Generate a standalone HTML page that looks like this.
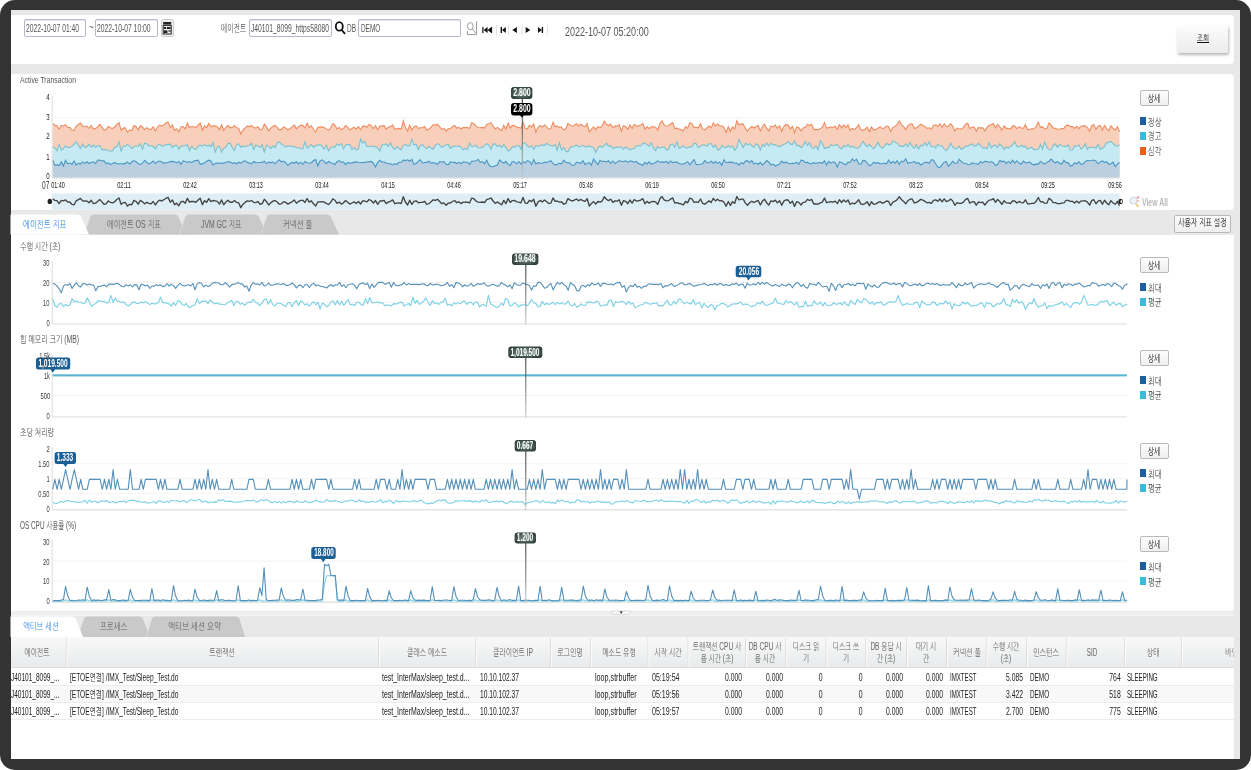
<!DOCTYPE html>
<html lang="ko"><head><meta charset="utf-8"><title>Agent Trend</title>
<style>
html,body{margin:0;padding:0;background:#fff;}
body{width:1251px;height:770px;overflow:hidden;position:relative;font-family:"Liberation Sans","NanumGothic","Noto Sans CJK KR",sans-serif;font-size:10px;color:#444;}
.t{position:absolute;white-space:nowrap;line-height:1;display:block;}
svg{position:absolute;left:0;top:0;overflow:visible;}
</style></head>
<body>
<div style="position:absolute;left:0;top:0;width:1251px;height:770px;background:#333;border-radius:15px;"></div>
<div id="app" style="position:absolute;left:0;top:0;width:1251px;height:770px;filter:blur(0.45px);">
<div style="position:absolute;left:10.5px;top:10px;width:1229.9px;height:749.3px;background:#e8e8e8;"></div>
<div style="position:absolute;left:10.5px;top:15px;width:1223.5px;height:49px;background:#fff;border-radius:0 4px 4px 0;"></div>
<div style="position:absolute;left:10.5px;top:73.5px;width:1223.5px;height:136.2px;background:#fff;border-radius:0 4px 4px 0;"></div>
<div style="position:absolute;left:10.5px;top:234.5px;width:1223.5px;height:376.5px;background:#fff;border-radius:0 0 4px 0;"></div>
<div style="position:absolute;left:10.5px;top:611px;width:1223.5px;height:4px;background:#eeeeee;"></div>
<div style="position:absolute;left:10.5px;top:615px;width:1223.5px;height:1px;background:#f4f4f4;"></div>
<div style="position:absolute;left:10.5px;top:637px;width:1223.5px;height:122.3px;background:#fff;"></div>
<div style="position:absolute;left:23.5px;top:19px;width:62.5px;height:18px;background:#fff;border:1px solid #b5b8c8;border-radius:2px;box-sizing:border-box;box-shadow:inset 0 1px 1px #e4e6ee;"></div>
<div style="position:absolute;left:95px;top:19px;width:63px;height:18px;background:#fff;border:1px solid #b5b8c8;border-radius:2px;box-sizing:border-box;box-shadow:inset 0 1px 1px #e4e6ee;"></div>
<div style="position:absolute;left:249.4px;top:19px;width:83px;height:18px;background:#fff;border:1px solid #b5b8c8;border-radius:2px;box-sizing:border-box;box-shadow:inset 0 1px 1px #e4e6ee;"></div>
<div style="position:absolute;left:358px;top:19px;width:103px;height:18px;background:#fff;border:1px solid #b5b8c8;border-radius:2px;box-sizing:border-box;box-shadow:inset 0 1px 1px #e4e6ee;"></div>
<div style="position:absolute;left:161px;top:19px;width:12.5px;height:18px;background:#ececec;border:1px solid #cfcfcf;border-radius:2px;box-sizing:border-box;"></div>
<svg width="1251" height="770" viewBox="0 0 1251 770">
<g fill="#222"><rect x="163.2" y="22" width="8" height="2.6"/><rect x="163.2" y="25.4" width="8" height="8.6" fill="none" stroke="#222" stroke-width="1"/>
<rect x="164" y="27" width="2.2" height="2"/><rect x="167" y="27" width="3.6" height="2"/><rect x="164" y="30.4" width="3.4" height="2.6"/><rect x="168.4" y="30.4" width="2.4" height="1.2"/></g>
<g fill="none" stroke="#111" stroke-width="1.8" stroke-linecap="round"><ellipse cx="339.3" cy="26.4" rx="3.5" ry="4.3"/><path d="M341.8 30 L344.6 33.4"/></g>
<g fill="none" stroke="#999" stroke-width="1"><path d="M476.6 21.2 V34.6 H467.4 V31"/><ellipse cx="470.3" cy="26.2" rx="2.9" ry="3.6"/><path d="M472.4 29 L475.8 33.2"/></g>
<g fill="#111">
<rect x="482.3" y="27" width="1.2" height="6"/><path d="M487.6 27 V33 L483.6 30 Z"/><path d="M491.4 27 V33 L487.6 30 Z"/><rect x="491" y="27" width="1.1" height="6"/>
<rect x="500.6" y="27" width="1.4" height="6"/><path d="M505.8 27 V33 L502 30 Z"/>
<path d="M516.9 27 V33 L512.3 30 Z"/>
<path d="M525.7 27 V33 L530.3 30 Z"/>
<path d="M538 27 V33 L541.8 30 Z"/><rect x="541.7" y="27" width="1.4" height="6"/>
</g>
<g stroke="#e2e2e2" stroke-width="1"><path d="M496.5 25 V35 M508.5 25 V35 M522 25 V35 M547.4 25 V35"/></g>
</svg>
<div style="position:absolute;left:1176.8px;top:25px;width:51.6px;height:28.3px;background:linear-gradient(#fcfcfc,#ececec);border-radius:2px;box-shadow:1px 2px 3px rgba(0,0,0,.28);"></div>
<svg width="1251" height="770" viewBox="0 0 1251 770">
<path d="M52.7 117.9 H1119.5 M52.7 137.8 H1119.5 M52.7 157.7 H1119.5" stroke="#f3f3f3" stroke-width="1" fill="none"/>
<path d="M52.7 123.5 L54.8 125.4 L57.0 125.7 L59.1 129.2 L61.3 125.5 L63.4 126.0 L65.5 124.8 L67.7 127.5 L69.8 127.4 L71.9 130.0 L74.1 130.6 L76.2 125.9 L78.4 124.5 L80.5 123.0 L82.6 126.1 L84.8 126.2 L86.9 126.3 L89.0 128.3 L91.2 125.4 L93.3 129.1 L95.5 128.6 L97.6 126.8 L99.7 124.3 L101.9 127.2 L104.0 130.1 L106.1 129.6 L108.3 126.2 L110.4 127.7 L112.6 128.4 L114.7 127.0 L116.8 124.4 L119.0 122.6 L121.1 130.1 L123.2 128.1 L125.4 127.9 L127.5 132.2 L129.7 130.1 L131.8 130.5 L133.9 125.5 L136.1 126.7 L138.2 129.9 L140.4 125.5 L142.5 127.0 L144.6 129.6 L146.8 127.7 L148.9 128.9 L151.0 129.6 L153.2 126.7 L155.3 130.9 L157.5 127.0 L159.6 125.2 L161.7 126.2 L163.9 124.6 L166.0 123.0 L168.1 121.9 L170.3 127.6 L172.4 124.8 L174.6 130.5 L176.7 128.7 L178.8 131.8 L181.0 126.9 L183.1 126.5 L185.2 128.9 L187.4 123.1 L189.5 127.6 L191.7 126.5 L193.8 126.7 L195.9 127.7 L198.1 125.0 L200.2 123.0 L202.4 130.5 L204.5 125.7 L206.6 127.8 L208.8 123.4 L210.9 126.8 L213.0 125.5 L215.2 126.1 L217.3 126.7 L219.5 129.8 L221.6 124.8 L223.7 130.5 L225.9 127.4 L228.0 125.4 L230.1 127.6 L232.3 127.6 L234.4 125.6 L236.6 127.8 L238.7 128.3 L240.8 134.1 L243.0 129.9 L245.1 127.8 L247.2 126.1 L249.4 126.6 L251.5 125.5 L253.7 127.6 L255.8 128.0 L257.9 126.7 L260.1 130.1 L262.2 129.2 L264.3 124.1 L266.5 126.9 L268.6 130.9 L270.8 128.2 L272.9 126.3 L275.0 125.5 L277.2 127.3 L279.3 129.9 L281.5 129.4 L283.6 126.9 L285.7 127.9 L287.9 129.8 L290.0 128.5 L292.1 127.1 L294.3 124.9 L296.4 128.8 L298.6 126.6 L300.7 125.4 L302.8 125.3 L305.0 128.0 L307.1 123.2 L309.2 127.5 L311.4 125.9 L313.5 129.5 L315.7 132.0 L317.8 127.3 L319.9 127.1 L322.1 126.9 L324.2 127.5 L326.3 128.9 L328.5 130.3 L330.6 128.0 L332.8 123.6 L334.9 125.2 L337.0 128.9 L339.2 127.4 L341.3 129.8 L343.5 128.3 L345.6 125.6 L347.7 127.5 L349.9 129.9 L352.0 128.5 L354.1 127.2 L356.3 129.1 L358.4 126.6 L360.6 129.7 L362.7 126.0 L364.8 126.1 L367.0 127.2 L369.1 124.4 L371.2 125.6 L373.4 128.7 L375.5 125.5 L377.7 130.0 L379.8 126.1 L381.9 126.1 L384.1 125.4 L386.2 129.2 L388.3 127.3 L390.5 126.6 L392.6 124.9 L394.8 129.3 L396.9 128.7 L399.0 128.4 L401.2 129.1 L403.3 121.0 L405.4 127.3 L407.6 130.9 L409.7 125.2 L411.9 130.1 L414.0 126.7 L416.1 125.9 L418.3 128.3 L420.4 127.7 L422.6 127.8 L424.7 126.5 L426.8 130.3 L429.0 129.1 L431.1 127.1 L433.2 124.7 L435.4 125.3 L437.5 124.1 L439.7 126.8 L441.8 129.4 L443.9 128.4 L446.1 131.1 L448.2 128.8 L450.3 128.6 L452.5 126.7 L454.6 125.5 L456.8 128.2 L458.9 127.1 L461.0 129.2 L463.2 127.4 L465.3 127.6 L467.4 127.6 L469.6 128.4 L471.7 122.8 L473.9 123.5 L476.0 126.2 L478.1 127.5 L480.3 127.8 L482.4 127.4 L484.6 128.0 L486.7 124.5 L488.8 123.7 L491.0 122.6 L493.1 126.2 L495.2 128.9 L497.4 127.4 L499.5 129.0 L501.7 130.6 L503.8 125.4 L505.9 129.4 L508.1 123.1 L510.2 127.9 L512.3 125.6 L514.5 125.4 L516.6 127.1 L518.8 127.6 L520.9 128.3 L523.0 121.9 L525.2 128.6 L527.3 129.0 L529.4 125.4 L531.6 126.9 L533.7 124.0 L535.9 132.3 L538.0 127.4 L540.1 125.4 L542.3 127.3 L544.4 124.9 L546.5 126.8 L548.7 129.0 L550.8 128.8 L553.0 122.5 L555.1 126.6 L557.2 126.1 L559.4 127.4 L561.5 127.0 L563.7 129.9 L565.8 129.0 L567.9 123.3 L570.1 125.1 L572.2 126.2 L574.3 125.2 L576.5 123.7 L578.6 125.9 L580.8 124.2 L582.9 125.8 L585.0 126.7 L587.2 123.5 L589.3 132.1 L591.4 129.3 L593.6 126.8 L595.7 129.7 L597.9 126.7 L600.0 127.6 L602.1 126.3 L604.3 121.1 L606.4 124.1 L608.5 125.7 L610.7 124.0 L612.8 127.8 L615.0 125.9 L617.1 126.4 L619.2 124.6 L621.4 131.2 L623.5 125.7 L625.7 126.5 L627.8 129.4 L629.9 125.0 L632.1 128.6 L634.2 124.4 L636.3 126.1 L638.5 126.0 L640.6 125.1 L642.8 123.4 L644.9 129.3 L647.0 126.6 L649.2 128.7 L651.3 126.9 L653.4 126.7 L655.6 127.2 L657.7 130.2 L659.9 123.5 L662.0 120.8 L664.1 124.9 L666.3 126.0 L668.4 125.8 L670.5 124.0 L672.7 122.5 L674.8 128.6 L677.0 128.1 L679.1 129.1 L681.2 129.5 L683.4 130.9 L685.5 126.6 L687.6 128.4 L689.8 122.7 L691.9 123.6 L694.1 127.6 L696.2 127.2 L698.3 127.8 L700.5 123.8 L702.6 128.9 L704.8 129.9 L706.9 128.0 L709.0 126.0 L711.2 127.9 L713.3 122.9 L715.4 126.0 L717.6 124.1 L719.7 126.0 L721.9 125.8 L724.0 127.7 L726.1 132.5 L728.3 126.8 L730.4 131.5 L732.5 127.0 L734.7 129.0 L736.8 120.8 L739.0 125.0 L741.1 123.9 L743.2 124.1 L745.4 128.6 L747.5 131.2 L749.6 128.3 L751.8 126.5 L753.9 128.0 L756.1 126.6 L758.2 125.6 L760.3 130.9 L762.5 126.3 L764.6 124.1 L766.8 128.4 L768.9 130.9 L771.0 125.9 L773.2 126.9 L775.3 125.1 L777.4 128.3 L779.6 125.7 L781.7 131.2 L783.9 126.3 L786.0 124.7 L788.1 125.0 L790.3 128.9 L792.4 126.3 L794.5 132.6 L796.7 127.0 L798.8 127.8 L801.0 130.9 L803.1 127.7 L805.2 127.6 L807.4 124.3 L809.5 125.5 L811.6 124.3 L813.8 129.7 L815.9 129.4 L818.1 129.9 L820.2 128.4 L822.3 127.4 L824.5 122.6 L826.6 128.2 L828.7 127.6 L830.9 127.0 L833.0 127.5 L835.2 126.2 L837.3 129.3 L839.4 124.6 L841.6 127.9 L843.7 124.8 L845.9 127.3 L848.0 124.8 L850.1 130.3 L852.3 128.5 L854.4 129.6 L856.5 127.7 L858.7 124.6 L860.8 129.6 L863.0 130.3 L865.1 129.2 L867.2 127.1 L869.4 131.8 L871.5 126.9 L873.6 130.1 L875.8 129.6 L877.9 128.2 L880.1 126.7 L882.2 128.7 L884.3 127.9 L886.5 126.1 L888.6 126.8 L890.7 131.5 L892.9 127.5 L895.0 126.4 L897.2 124.5 L899.3 121.1 L901.4 124.4 L903.6 126.6 L905.7 129.5 L907.9 125.9 L910.0 124.1 L912.1 123.8 L914.3 128.4 L916.4 127.9 L918.5 126.3 L920.7 124.2 L922.8 125.2 L925.0 126.6 L927.1 128.3 L929.2 127.8 L931.4 129.0 L933.5 125.4 L935.6 124.8 L937.8 126.5 L939.9 123.8 L942.1 127.2 L944.2 123.7 L946.3 126.7 L948.5 126.0 L950.6 123.9 L952.7 126.1 L954.9 131.2 L957.0 128.1 L959.2 129.0 L961.3 129.0 L963.4 127.6 L965.6 124.1 L967.7 123.2 L969.8 128.7 L972.0 127.1 L974.1 127.0 L976.3 131.1 L978.4 127.4 L980.5 128.1 L982.7 127.6 L984.8 130.9 L987.0 127.7 L989.1 125.1 L991.2 124.8 L993.4 123.5 L995.5 127.9 L997.6 124.3 L999.8 126.7 L1001.9 130.2 L1004.1 125.7 L1006.2 128.4 L1008.3 128.3 L1010.5 129.1 L1012.6 125.9 L1014.7 126.1 L1016.9 128.7 L1019.0 126.7 L1021.2 128.0 L1023.3 128.3 L1025.4 124.8 L1027.6 129.6 L1029.7 129.5 L1031.8 128.9 L1034.0 128.8 L1036.1 126.6 L1038.3 122.0 L1040.4 127.1 L1042.5 126.9 L1044.7 128.8 L1046.8 128.8 L1049.0 122.9 L1051.1 124.9 L1053.2 128.1 L1055.4 128.2 L1057.5 129.2 L1059.6 129.3 L1061.8 128.6 L1063.9 128.4 L1066.1 125.4 L1068.2 125.4 L1070.3 126.5 L1072.5 126.6 L1074.6 128.5 L1076.7 126.3 L1078.9 128.6 L1081.0 126.2 L1083.2 125.9 L1085.3 125.8 L1087.4 127.5 L1089.6 131.0 L1091.7 125.7 L1093.8 124.6 L1096.0 129.4 L1098.1 126.2 L1100.3 125.4 L1102.4 130.1 L1104.5 125.3 L1106.7 128.6 L1108.8 130.7 L1110.9 125.7 L1113.1 128.5 L1115.2 130.0 L1117.4 126.6 L1119.5 131.8 L1119.5 177.6 L52.7 177.6 Z" fill="#f8cfbb"/>
<path d="M52.7 147.0 L54.8 147.5 L57.0 150.8 L59.1 144.3 L61.3 150.1 L63.4 148.7 L65.5 145.7 L67.7 147.5 L69.8 147.4 L71.9 146.4 L74.1 144.5 L76.2 141.5 L78.4 145.4 L80.5 148.4 L82.6 143.9 L84.8 147.3 L86.9 146.7 L89.0 144.3 L91.2 147.2 L93.3 145.1 L95.5 147.2 L97.6 145.7 L99.7 145.6 L101.9 149.7 L104.0 149.6 L106.1 149.8 L108.3 150.6 L110.4 151.1 L112.6 150.8 L114.7 147.1 L116.8 146.9 L119.0 141.9 L121.1 151.2 L123.2 146.3 L125.4 146.1 L127.5 144.4 L129.7 146.1 L131.8 148.6 L133.9 146.8 L136.1 145.8 L138.2 146.4 L140.4 143.8 L142.5 149.1 L144.6 143.1 L146.8 143.8 L148.9 146.0 L151.0 145.5 L153.2 146.3 L155.3 149.1 L157.5 145.1 L159.6 144.2 L161.7 145.9 L163.9 145.8 L166.0 144.6 L168.1 144.7 L170.3 144.0 L172.4 147.7 L174.6 145.6 L176.7 145.3 L178.8 149.2 L181.0 146.3 L183.1 145.9 L185.2 145.6 L187.4 144.7 L189.5 150.6 L191.7 146.2 L193.8 148.4 L195.9 149.6 L198.1 146.4 L200.2 145.0 L202.4 146.4 L204.5 144.4 L206.6 146.2 L208.8 145.2 L210.9 146.8 L213.0 142.5 L215.2 152.1 L217.3 147.1 L219.5 146.2 L221.6 152.2 L223.7 148.3 L225.9 147.2 L228.0 143.5 L230.1 143.1 L232.3 147.7 L234.4 150.5 L236.6 144.8 L238.7 143.7 L240.8 147.3 L243.0 146.2 L245.1 146.7 L247.2 145.7 L249.4 145.5 L251.5 143.3 L253.7 149.5 L255.8 145.0 L257.9 146.0 L260.1 147.6 L262.2 144.8 L264.3 152.1 L266.5 145.3 L268.6 146.1 L270.8 148.6 L272.9 145.8 L275.0 147.8 L277.2 142.4 L279.3 141.9 L281.5 144.4 L283.6 145.4 L285.7 147.1 L287.9 145.5 L290.0 146.1 L292.1 146.2 L294.3 146.7 L296.4 147.6 L298.6 147.8 L300.7 148.5 L302.8 148.9 L305.0 141.7 L307.1 148.1 L309.2 146.5 L311.4 144.6 L313.5 147.3 L315.7 145.6 L317.8 145.0 L319.9 144.6 L322.1 146.2 L324.2 149.2 L326.3 145.1 L328.5 150.9 L330.6 147.7 L332.8 146.7 L334.9 147.1 L337.0 143.9 L339.2 145.3 L341.3 143.6 L343.5 149.0 L345.6 145.0 L347.7 144.5 L349.9 144.6 L352.0 149.6 L354.1 147.4 L356.3 149.9 L358.4 149.4 L360.6 138.9 L362.7 143.1 L364.8 141.4 L367.0 146.7 L369.1 146.3 L371.2 146.3 L373.4 146.4 L375.5 146.8 L377.7 147.9 L379.8 151.0 L381.9 145.0 L384.1 144.5 L386.2 143.9 L388.3 146.6 L390.5 142.7 L392.6 147.8 L394.8 149.5 L396.9 146.5 L399.0 148.5 L401.2 149.8 L403.3 145.6 L405.4 144.1 L407.6 146.2 L409.7 145.8 L411.9 139.4 L414.0 145.1 L416.1 144.1 L418.3 149.6 L420.4 145.3 L422.6 144.9 L424.7 147.4 L426.8 148.6 L429.0 146.3 L431.1 148.4 L433.2 149.3 L435.4 145.1 L437.5 143.6 L439.7 145.1 L441.8 147.3 L443.9 146.0 L446.1 145.1 L448.2 144.2 L450.3 148.6 L452.5 146.6 L454.6 146.0 L456.8 146.2 L458.9 146.4 L461.0 146.9 L463.2 149.7 L465.3 148.4 L467.4 149.4 L469.6 143.0 L471.7 146.5 L473.9 146.3 L476.0 145.3 L478.1 147.8 L480.3 148.0 L482.4 147.4 L484.6 145.7 L486.7 143.6 L488.8 145.1 L491.0 149.3 L493.1 144.1 L495.2 143.8 L497.4 146.8 L499.5 145.1 L501.7 147.6 L503.8 144.3 L505.9 147.7 L508.1 151.0 L510.2 150.1 L512.3 146.7 L514.5 147.5 L516.6 145.8 L518.8 145.5 L520.9 149.1 L523.0 142.8 L525.2 143.2 L527.3 145.5 L529.4 147.6 L531.6 145.7 L533.7 149.4 L535.9 145.6 L538.0 146.5 L540.1 145.4 L542.3 144.9 L544.4 145.4 L546.5 143.5 L548.7 144.7 L550.8 145.5 L553.0 146.1 L555.1 144.6 L557.2 150.2 L559.4 142.8 L561.5 150.2 L563.7 147.5 L565.8 151.0 L567.9 152.1 L570.1 147.5 L572.2 146.8 L574.3 146.2 L576.5 145.0 L578.6 147.0 L580.8 146.3 L582.9 145.3 L585.0 147.0 L587.2 146.6 L589.3 145.9 L591.4 147.0 L593.6 147.5 L595.7 152.6 L597.9 147.9 L600.0 145.9 L602.1 147.3 L604.3 145.5 L606.4 143.1 L608.5 146.4 L610.7 145.7 L612.8 148.4 L615.0 147.9 L617.1 146.7 L619.2 147.7 L621.4 146.6 L623.5 149.1 L625.7 146.9 L627.8 148.5 L629.9 149.9 L632.1 148.8 L634.2 148.5 L636.3 145.8 L638.5 145.7 L640.6 146.0 L642.8 143.6 L644.9 143.1 L647.0 144.7 L649.2 146.3 L651.3 142.8 L653.4 147.9 L655.6 150.7 L657.7 146.4 L659.9 148.1 L662.0 147.3 L664.1 146.9 L666.3 149.9 L668.4 149.7 L670.5 144.5 L672.7 144.0 L674.8 147.3 L677.0 141.8 L679.1 148.3 L681.2 147.3 L683.4 145.7 L685.5 147.9 L687.6 147.6 L689.8 146.8 L691.9 147.0 L694.1 143.2 L696.2 143.7 L698.3 147.4 L700.5 146.2 L702.6 144.8 L704.8 145.1 L706.9 146.2 L709.0 143.9 L711.2 143.5 L713.3 147.4 L715.4 144.8 L717.6 149.9 L719.7 149.4 L721.9 145.5 L724.0 147.5 L726.1 147.6 L728.3 145.4 L730.4 147.6 L732.5 146.1 L734.7 150.4 L736.8 147.7 L739.0 139.5 L741.1 143.7 L743.2 147.5 L745.4 143.2 L747.5 144.9 L749.6 143.6 L751.8 145.8 L753.9 147.5 L756.1 143.7 L758.2 145.2 L760.3 150.0 L762.5 144.2 L764.6 146.3 L766.8 143.1 L768.9 145.8 L771.0 143.2 L773.2 144.9 L775.3 144.6 L777.4 146.1 L779.6 146.6 L781.7 145.4 L783.9 144.2 L786.0 143.6 L788.1 141.6 L790.3 143.9 L792.4 144.6 L794.5 140.9 L796.7 145.6 L798.8 145.4 L801.0 147.7 L803.1 145.6 L805.2 141.7 L807.4 145.4 L809.5 142.9 L811.6 147.7 L813.8 148.3 L815.9 145.9 L818.1 149.8 L820.2 140.7 L822.3 143.4 L824.5 148.5 L826.6 147.5 L828.7 147.6 L830.9 144.7 L833.0 145.7 L835.2 145.0 L837.3 144.6 L839.4 147.4 L841.6 148.9 L843.7 145.4 L845.9 147.0 L848.0 144.5 L850.1 147.4 L852.3 146.2 L854.4 147.4 L856.5 148.2 L858.7 147.8 L860.8 145.0 L863.0 141.5 L865.1 144.3 L867.2 146.9 L869.4 144.3 L871.5 146.7 L873.6 149.0 L875.8 145.9 L877.9 142.4 L880.1 146.3 L882.2 148.3 L884.3 146.3 L886.5 143.3 L888.6 144.8 L890.7 144.3 L892.9 140.9 L895.0 142.2 L897.2 143.3 L899.3 146.2 L901.4 145.9 L903.6 146.6 L905.7 143.9 L907.9 146.8 L910.0 142.5 L912.1 146.2 L914.3 148.3 L916.4 144.5 L918.5 149.1 L920.7 145.2 L922.8 146.1 L925.0 142.7 L927.1 145.8 L929.2 141.8 L931.4 146.9 L933.5 146.1 L935.6 148.2 L937.8 144.2 L939.9 146.2 L942.1 145.8 L944.2 149.0 L946.3 150.8 L948.5 147.9 L950.6 143.1 L952.7 147.0 L954.9 148.7 L957.0 148.2 L959.2 146.2 L961.3 149.5 L963.4 148.0 L965.6 146.0 L967.7 146.5 L969.8 145.0 L972.0 143.9 L974.1 145.9 L976.3 145.7 L978.4 143.3 L980.5 145.7 L982.7 147.9 L984.8 147.7 L987.0 148.9 L989.1 142.8 L991.2 147.7 L993.4 145.7 L995.5 145.1 L997.6 147.8 L999.8 143.7 L1001.9 146.4 L1004.1 149.7 L1006.2 146.8 L1008.3 148.3 L1010.5 146.3 L1012.6 145.1 L1014.7 141.5 L1016.9 146.6 L1019.0 146.9 L1021.2 145.4 L1023.3 146.6 L1025.4 146.4 L1027.6 149.2 L1029.7 147.9 L1031.8 147.4 L1034.0 149.6 L1036.1 149.5 L1038.3 149.2 L1040.4 144.5 L1042.5 149.2 L1044.7 142.3 L1046.8 146.9 L1049.0 149.6 L1051.1 150.0 L1053.2 145.7 L1055.4 143.9 L1057.5 147.4 L1059.6 144.5 L1061.8 145.7 L1063.9 146.4 L1066.1 146.6 L1068.2 144.8 L1070.3 150.2 L1072.5 150.0 L1074.6 145.9 L1076.7 146.2 L1078.9 144.9 L1081.0 148.9 L1083.2 147.6 L1085.3 143.9 L1087.4 149.5 L1089.6 147.0 L1091.7 147.5 L1093.8 147.1 L1096.0 148.3 L1098.1 144.2 L1100.3 149.3 L1102.4 148.3 L1104.5 146.6 L1106.7 142.6 L1108.8 142.1 L1110.9 141.4 L1113.1 143.7 L1115.2 145.5 L1117.4 146.1 L1119.5 144.8 L1119.5 177.6 L52.7 177.6 Z" fill="#c6eaf3"/>
<path d="M52.7 160.0 L54.8 165.1 L57.0 164.9 L59.1 165.5 L61.3 161.9 L63.4 166.1 L65.5 160.2 L67.7 163.9 L69.8 163.0 L71.9 164.2 L74.1 161.0 L76.2 165.1 L78.4 163.1 L80.5 164.1 L82.6 161.9 L84.8 163.6 L86.9 161.8 L89.0 163.5 L91.2 162.4 L93.3 161.8 L95.5 163.5 L97.6 160.2 L99.7 160.1 L101.9 160.9 L104.0 160.8 L106.1 163.5 L108.3 162.9 L110.4 164.6 L112.6 163.5 L114.7 162.5 L116.8 164.0 L119.0 163.7 L121.1 163.8 L123.2 163.9 L125.4 163.4 L127.5 161.9 L129.7 164.1 L131.8 161.8 L133.9 160.6 L136.1 161.7 L138.2 163.7 L140.4 164.5 L142.5 163.2 L144.6 160.3 L146.8 162.5 L148.9 163.9 L151.0 163.0 L153.2 161.1 L155.3 163.6 L157.5 161.8 L159.6 161.1 L161.7 162.1 L163.9 163.3 L166.0 162.7 L168.1 162.2 L170.3 161.6 L172.4 161.4 L174.6 161.7 L176.7 162.9 L178.8 161.4 L181.0 164.2 L183.1 160.8 L185.2 161.4 L187.4 162.5 L189.5 161.6 L191.7 162.7 L193.8 161.1 L195.9 160.6 L198.1 160.1 L200.2 164.3 L202.4 163.9 L204.5 162.7 L206.6 161.4 L208.8 160.2 L210.9 160.9 L213.0 165.0 L215.2 163.5 L217.3 163.1 L219.5 163.3 L221.6 163.1 L223.7 163.1 L225.9 162.5 L228.0 161.6 L230.1 162.1 L232.3 163.4 L234.4 162.7 L236.6 163.8 L238.7 162.2 L240.8 163.2 L243.0 161.6 L245.1 160.8 L247.2 162.4 L249.4 163.0 L251.5 163.8 L253.7 161.5 L255.8 162.6 L257.9 162.8 L260.1 162.5 L262.2 162.4 L264.3 161.1 L266.5 163.6 L268.6 162.0 L270.8 162.8 L272.9 161.8 L275.0 163.8 L277.2 161.6 L279.3 159.8 L281.5 162.1 L283.6 161.1 L285.7 162.7 L287.9 165.5 L290.0 163.7 L292.1 162.2 L294.3 163.3 L296.4 161.8 L298.6 164.0 L300.7 162.2 L302.8 164.5 L305.0 161.5 L307.1 162.7 L309.2 163.2 L311.4 162.7 L313.5 160.5 L315.7 159.6 L317.8 165.9 L319.9 161.2 L322.1 159.9 L324.2 161.3 L326.3 163.6 L328.5 161.5 L330.6 162.7 L332.8 163.5 L334.9 164.6 L337.0 161.8 L339.2 160.6 L341.3 162.4 L343.5 161.8 L345.6 164.6 L347.7 162.6 L349.9 163.0 L352.0 163.1 L354.1 162.1 L356.3 161.9 L358.4 162.5 L360.6 162.7 L362.7 162.5 L364.8 162.4 L367.0 161.7 L369.1 161.9 L371.2 161.4 L373.4 163.2 L375.5 167.0 L377.7 162.4 L379.8 160.3 L381.9 162.0 L384.1 162.0 L386.2 163.0 L388.3 163.7 L390.5 163.7 L392.6 164.9 L394.8 163.6 L396.9 164.5 L399.0 162.3 L401.2 162.3 L403.3 160.1 L405.4 160.6 L407.6 159.8 L409.7 161.2 L411.9 159.4 L414.0 164.6 L416.1 163.5 L418.3 161.4 L420.4 159.9 L422.6 163.2 L424.7 162.5 L426.8 162.4 L429.0 161.2 L431.1 163.4 L433.2 162.9 L435.4 163.0 L437.5 164.5 L439.7 161.5 L441.8 162.0 L443.9 161.6 L446.1 164.3 L448.2 164.9 L450.3 161.9 L452.5 162.2 L454.6 162.4 L456.8 163.6 L458.9 162.2 L461.0 163.8 L463.2 161.8 L465.3 162.2 L467.4 162.2 L469.6 164.4 L471.7 161.4 L473.9 161.3 L476.0 160.7 L478.1 159.5 L480.3 162.4 L482.4 161.7 L484.6 163.8 L486.7 160.3 L488.8 165.0 L491.0 166.8 L493.1 166.6 L495.2 165.7 L497.4 165.3 L499.5 159.9 L501.7 161.7 L503.8 163.2 L505.9 161.4 L508.1 164.4 L510.2 165.5 L512.3 161.5 L514.5 161.9 L516.6 164.0 L518.8 161.5 L520.9 164.1 L523.0 161.6 L525.2 163.1 L527.3 160.6 L529.4 161.5 L531.6 164.6 L533.7 159.5 L535.9 164.0 L538.0 162.6 L540.1 163.2 L542.3 163.3 L544.4 162.3 L546.5 162.4 L548.7 161.7 L550.8 160.7 L553.0 163.7 L555.1 165.1 L557.2 164.2 L559.4 163.3 L561.5 163.8 L563.7 160.3 L565.8 162.2 L567.9 162.6 L570.1 163.2 L572.2 165.5 L574.3 165.0 L576.5 162.3 L578.6 162.5 L580.8 163.5 L582.9 160.5 L585.0 164.6 L587.2 163.4 L589.3 162.6 L591.4 165.2 L593.6 159.0 L595.7 161.9 L597.9 164.7 L600.0 160.3 L602.1 161.5 L604.3 161.2 L606.4 161.9 L608.5 160.8 L610.7 163.5 L612.8 161.0 L615.0 163.5 L617.1 162.1 L619.2 160.6 L621.4 161.5 L623.5 161.5 L625.7 160.9 L627.8 162.4 L629.9 161.1 L632.1 161.4 L634.2 162.2 L636.3 161.5 L638.5 163.6 L640.6 164.3 L642.8 165.5 L644.9 162.2 L647.0 163.9 L649.2 161.8 L651.3 164.1 L653.4 163.4 L655.6 162.4 L657.7 160.9 L659.9 162.2 L662.0 161.9 L664.1 162.4 L666.3 161.5 L668.4 163.4 L670.5 161.0 L672.7 162.7 L674.8 162.1 L677.0 162.0 L679.1 163.5 L681.2 164.3 L683.4 163.9 L685.5 163.1 L687.6 161.8 L689.8 164.9 L691.9 162.2 L694.1 159.6 L696.2 164.7 L698.3 164.5 L700.5 164.3 L702.6 163.8 L704.8 160.4 L706.9 162.7 L709.0 162.7 L711.2 161.1 L713.3 163.2 L715.4 161.5 L717.6 163.4 L719.7 162.1 L721.9 165.3 L724.0 159.9 L726.1 162.5 L728.3 162.4 L730.4 162.1 L732.5 162.4 L734.7 163.3 L736.8 163.0 L739.0 165.1 L741.1 162.4 L743.2 163.9 L745.4 161.1 L747.5 160.7 L749.6 162.7 L751.8 160.7 L753.9 164.0 L756.1 163.0 L758.2 164.2 L760.3 162.3 L762.5 165.1 L764.6 162.8 L766.8 160.5 L768.9 162.2 L771.0 165.1 L773.2 164.1 L775.3 166.1 L777.4 165.1 L779.6 164.1 L781.7 161.1 L783.9 163.0 L786.0 162.0 L788.1 163.3 L790.3 163.7 L792.4 163.3 L794.5 163.5 L796.7 162.2 L798.8 164.4 L801.0 160.1 L803.1 160.6 L805.2 162.7 L807.4 162.2 L809.5 163.8 L811.6 163.6 L813.8 162.7 L815.9 163.5 L818.1 162.8 L820.2 162.5 L822.3 163.3 L824.5 160.7 L826.6 165.1 L828.7 161.3 L830.9 163.1 L833.0 161.8 L835.2 162.5 L837.3 167.2 L839.4 161.9 L841.6 162.4 L843.7 163.8 L845.9 164.8 L848.0 162.2 L850.1 162.5 L852.3 158.9 L854.4 161.1 L856.5 159.2 L858.7 163.8 L860.8 164.2 L863.0 160.4 L865.1 160.8 L867.2 163.2 L869.4 165.9 L871.5 164.8 L873.6 162.2 L875.8 163.3 L877.9 162.7 L880.1 163.7 L882.2 163.8 L884.3 163.0 L886.5 164.0 L888.6 160.0 L890.7 163.3 L892.9 161.5 L895.0 163.2 L897.2 160.8 L899.3 164.5 L901.4 161.1 L903.6 161.7 L905.7 158.8 L907.9 163.6 L910.0 162.6 L912.1 162.3 L914.3 161.6 L916.4 163.3 L918.5 162.7 L920.7 165.0 L922.8 163.8 L925.0 162.4 L927.1 162.2 L929.2 163.3 L931.4 159.9 L933.5 160.0 L935.6 163.8 L937.8 167.0 L939.9 167.6 L942.1 164.7 L944.2 162.2 L946.3 161.7 L948.5 166.3 L950.6 164.2 L952.7 161.4 L954.9 163.5 L957.0 163.3 L959.2 159.2 L961.3 161.5 L963.4 163.3 L965.6 163.2 L967.7 164.5 L969.8 164.7 L972.0 162.9 L974.1 163.5 L976.3 163.8 L978.4 164.4 L980.5 161.5 L982.7 162.9 L984.8 161.3 L987.0 161.6 L989.1 162.4 L991.2 161.6 L993.4 162.7 L995.5 165.5 L997.6 164.5 L999.8 160.4 L1001.9 161.6 L1004.1 161.2 L1006.2 163.4 L1008.3 161.4 L1010.5 163.1 L1012.6 160.1 L1014.7 163.1 L1016.9 160.7 L1019.0 162.8 L1021.2 164.2 L1023.3 161.1 L1025.4 162.8 L1027.6 162.6 L1029.7 162.0 L1031.8 164.0 L1034.0 165.1 L1036.1 163.9 L1038.3 164.4 L1040.4 161.5 L1042.5 162.6 L1044.7 164.1 L1046.8 162.4 L1049.0 161.2 L1051.1 159.1 L1053.2 161.3 L1055.4 163.0 L1057.5 161.4 L1059.6 163.4 L1061.8 164.0 L1063.9 160.3 L1066.1 162.7 L1068.2 162.6 L1070.3 166.0 L1072.5 165.4 L1074.6 162.7 L1076.7 163.9 L1078.9 161.8 L1081.0 164.4 L1083.2 163.7 L1085.3 161.7 L1087.4 160.3 L1089.6 160.8 L1091.7 160.5 L1093.8 160.1 L1096.0 161.3 L1098.1 163.8 L1100.3 161.9 L1102.4 161.0 L1104.5 162.5 L1106.7 161.7 L1108.8 164.3 L1110.9 163.8 L1113.1 162.2 L1115.2 166.5 L1117.4 163.9 L1119.5 162.5 L1119.5 177.6 L52.7 177.6 Z" fill="#bad0e1"/>
<path d="M52.7 123.5 L54.8 125.4 L57.0 125.7 L59.1 129.2 L61.3 125.5 L63.4 126.0 L65.5 124.8 L67.7 127.5 L69.8 127.4 L71.9 130.0 L74.1 130.6 L76.2 125.9 L78.4 124.5 L80.5 123.0 L82.6 126.1 L84.8 126.2 L86.9 126.3 L89.0 128.3 L91.2 125.4 L93.3 129.1 L95.5 128.6 L97.6 126.8 L99.7 124.3 L101.9 127.2 L104.0 130.1 L106.1 129.6 L108.3 126.2 L110.4 127.7 L112.6 128.4 L114.7 127.0 L116.8 124.4 L119.0 122.6 L121.1 130.1 L123.2 128.1 L125.4 127.9 L127.5 132.2 L129.7 130.1 L131.8 130.5 L133.9 125.5 L136.1 126.7 L138.2 129.9 L140.4 125.5 L142.5 127.0 L144.6 129.6 L146.8 127.7 L148.9 128.9 L151.0 129.6 L153.2 126.7 L155.3 130.9 L157.5 127.0 L159.6 125.2 L161.7 126.2 L163.9 124.6 L166.0 123.0 L168.1 121.9 L170.3 127.6 L172.4 124.8 L174.6 130.5 L176.7 128.7 L178.8 131.8 L181.0 126.9 L183.1 126.5 L185.2 128.9 L187.4 123.1 L189.5 127.6 L191.7 126.5 L193.8 126.7 L195.9 127.7 L198.1 125.0 L200.2 123.0 L202.4 130.5 L204.5 125.7 L206.6 127.8 L208.8 123.4 L210.9 126.8 L213.0 125.5 L215.2 126.1 L217.3 126.7 L219.5 129.8 L221.6 124.8 L223.7 130.5 L225.9 127.4 L228.0 125.4 L230.1 127.6 L232.3 127.6 L234.4 125.6 L236.6 127.8 L238.7 128.3 L240.8 134.1 L243.0 129.9 L245.1 127.8 L247.2 126.1 L249.4 126.6 L251.5 125.5 L253.7 127.6 L255.8 128.0 L257.9 126.7 L260.1 130.1 L262.2 129.2 L264.3 124.1 L266.5 126.9 L268.6 130.9 L270.8 128.2 L272.9 126.3 L275.0 125.5 L277.2 127.3 L279.3 129.9 L281.5 129.4 L283.6 126.9 L285.7 127.9 L287.9 129.8 L290.0 128.5 L292.1 127.1 L294.3 124.9 L296.4 128.8 L298.6 126.6 L300.7 125.4 L302.8 125.3 L305.0 128.0 L307.1 123.2 L309.2 127.5 L311.4 125.9 L313.5 129.5 L315.7 132.0 L317.8 127.3 L319.9 127.1 L322.1 126.9 L324.2 127.5 L326.3 128.9 L328.5 130.3 L330.6 128.0 L332.8 123.6 L334.9 125.2 L337.0 128.9 L339.2 127.4 L341.3 129.8 L343.5 128.3 L345.6 125.6 L347.7 127.5 L349.9 129.9 L352.0 128.5 L354.1 127.2 L356.3 129.1 L358.4 126.6 L360.6 129.7 L362.7 126.0 L364.8 126.1 L367.0 127.2 L369.1 124.4 L371.2 125.6 L373.4 128.7 L375.5 125.5 L377.7 130.0 L379.8 126.1 L381.9 126.1 L384.1 125.4 L386.2 129.2 L388.3 127.3 L390.5 126.6 L392.6 124.9 L394.8 129.3 L396.9 128.7 L399.0 128.4 L401.2 129.1 L403.3 121.0 L405.4 127.3 L407.6 130.9 L409.7 125.2 L411.9 130.1 L414.0 126.7 L416.1 125.9 L418.3 128.3 L420.4 127.7 L422.6 127.8 L424.7 126.5 L426.8 130.3 L429.0 129.1 L431.1 127.1 L433.2 124.7 L435.4 125.3 L437.5 124.1 L439.7 126.8 L441.8 129.4 L443.9 128.4 L446.1 131.1 L448.2 128.8 L450.3 128.6 L452.5 126.7 L454.6 125.5 L456.8 128.2 L458.9 127.1 L461.0 129.2 L463.2 127.4 L465.3 127.6 L467.4 127.6 L469.6 128.4 L471.7 122.8 L473.9 123.5 L476.0 126.2 L478.1 127.5 L480.3 127.8 L482.4 127.4 L484.6 128.0 L486.7 124.5 L488.8 123.7 L491.0 122.6 L493.1 126.2 L495.2 128.9 L497.4 127.4 L499.5 129.0 L501.7 130.6 L503.8 125.4 L505.9 129.4 L508.1 123.1 L510.2 127.9 L512.3 125.6 L514.5 125.4 L516.6 127.1 L518.8 127.6 L520.9 128.3 L523.0 121.9 L525.2 128.6 L527.3 129.0 L529.4 125.4 L531.6 126.9 L533.7 124.0 L535.9 132.3 L538.0 127.4 L540.1 125.4 L542.3 127.3 L544.4 124.9 L546.5 126.8 L548.7 129.0 L550.8 128.8 L553.0 122.5 L555.1 126.6 L557.2 126.1 L559.4 127.4 L561.5 127.0 L563.7 129.9 L565.8 129.0 L567.9 123.3 L570.1 125.1 L572.2 126.2 L574.3 125.2 L576.5 123.7 L578.6 125.9 L580.8 124.2 L582.9 125.8 L585.0 126.7 L587.2 123.5 L589.3 132.1 L591.4 129.3 L593.6 126.8 L595.7 129.7 L597.9 126.7 L600.0 127.6 L602.1 126.3 L604.3 121.1 L606.4 124.1 L608.5 125.7 L610.7 124.0 L612.8 127.8 L615.0 125.9 L617.1 126.4 L619.2 124.6 L621.4 131.2 L623.5 125.7 L625.7 126.5 L627.8 129.4 L629.9 125.0 L632.1 128.6 L634.2 124.4 L636.3 126.1 L638.5 126.0 L640.6 125.1 L642.8 123.4 L644.9 129.3 L647.0 126.6 L649.2 128.7 L651.3 126.9 L653.4 126.7 L655.6 127.2 L657.7 130.2 L659.9 123.5 L662.0 120.8 L664.1 124.9 L666.3 126.0 L668.4 125.8 L670.5 124.0 L672.7 122.5 L674.8 128.6 L677.0 128.1 L679.1 129.1 L681.2 129.5 L683.4 130.9 L685.5 126.6 L687.6 128.4 L689.8 122.7 L691.9 123.6 L694.1 127.6 L696.2 127.2 L698.3 127.8 L700.5 123.8 L702.6 128.9 L704.8 129.9 L706.9 128.0 L709.0 126.0 L711.2 127.9 L713.3 122.9 L715.4 126.0 L717.6 124.1 L719.7 126.0 L721.9 125.8 L724.0 127.7 L726.1 132.5 L728.3 126.8 L730.4 131.5 L732.5 127.0 L734.7 129.0 L736.8 120.8 L739.0 125.0 L741.1 123.9 L743.2 124.1 L745.4 128.6 L747.5 131.2 L749.6 128.3 L751.8 126.5 L753.9 128.0 L756.1 126.6 L758.2 125.6 L760.3 130.9 L762.5 126.3 L764.6 124.1 L766.8 128.4 L768.9 130.9 L771.0 125.9 L773.2 126.9 L775.3 125.1 L777.4 128.3 L779.6 125.7 L781.7 131.2 L783.9 126.3 L786.0 124.7 L788.1 125.0 L790.3 128.9 L792.4 126.3 L794.5 132.6 L796.7 127.0 L798.8 127.8 L801.0 130.9 L803.1 127.7 L805.2 127.6 L807.4 124.3 L809.5 125.5 L811.6 124.3 L813.8 129.7 L815.9 129.4 L818.1 129.9 L820.2 128.4 L822.3 127.4 L824.5 122.6 L826.6 128.2 L828.7 127.6 L830.9 127.0 L833.0 127.5 L835.2 126.2 L837.3 129.3 L839.4 124.6 L841.6 127.9 L843.7 124.8 L845.9 127.3 L848.0 124.8 L850.1 130.3 L852.3 128.5 L854.4 129.6 L856.5 127.7 L858.7 124.6 L860.8 129.6 L863.0 130.3 L865.1 129.2 L867.2 127.1 L869.4 131.8 L871.5 126.9 L873.6 130.1 L875.8 129.6 L877.9 128.2 L880.1 126.7 L882.2 128.7 L884.3 127.9 L886.5 126.1 L888.6 126.8 L890.7 131.5 L892.9 127.5 L895.0 126.4 L897.2 124.5 L899.3 121.1 L901.4 124.4 L903.6 126.6 L905.7 129.5 L907.9 125.9 L910.0 124.1 L912.1 123.8 L914.3 128.4 L916.4 127.9 L918.5 126.3 L920.7 124.2 L922.8 125.2 L925.0 126.6 L927.1 128.3 L929.2 127.8 L931.4 129.0 L933.5 125.4 L935.6 124.8 L937.8 126.5 L939.9 123.8 L942.1 127.2 L944.2 123.7 L946.3 126.7 L948.5 126.0 L950.6 123.9 L952.7 126.1 L954.9 131.2 L957.0 128.1 L959.2 129.0 L961.3 129.0 L963.4 127.6 L965.6 124.1 L967.7 123.2 L969.8 128.7 L972.0 127.1 L974.1 127.0 L976.3 131.1 L978.4 127.4 L980.5 128.1 L982.7 127.6 L984.8 130.9 L987.0 127.7 L989.1 125.1 L991.2 124.8 L993.4 123.5 L995.5 127.9 L997.6 124.3 L999.8 126.7 L1001.9 130.2 L1004.1 125.7 L1006.2 128.4 L1008.3 128.3 L1010.5 129.1 L1012.6 125.9 L1014.7 126.1 L1016.9 128.7 L1019.0 126.7 L1021.2 128.0 L1023.3 128.3 L1025.4 124.8 L1027.6 129.6 L1029.7 129.5 L1031.8 128.9 L1034.0 128.8 L1036.1 126.6 L1038.3 122.0 L1040.4 127.1 L1042.5 126.9 L1044.7 128.8 L1046.8 128.8 L1049.0 122.9 L1051.1 124.9 L1053.2 128.1 L1055.4 128.2 L1057.5 129.2 L1059.6 129.3 L1061.8 128.6 L1063.9 128.4 L1066.1 125.4 L1068.2 125.4 L1070.3 126.5 L1072.5 126.6 L1074.6 128.5 L1076.7 126.3 L1078.9 128.6 L1081.0 126.2 L1083.2 125.9 L1085.3 125.8 L1087.4 127.5 L1089.6 131.0 L1091.7 125.7 L1093.8 124.6 L1096.0 129.4 L1098.1 126.2 L1100.3 125.4 L1102.4 130.1 L1104.5 125.3 L1106.7 128.6 L1108.8 130.7 L1110.9 125.7 L1113.1 128.5 L1115.2 130.0 L1117.4 126.6 L1119.5 131.8" fill="none" stroke="#ee8c60" stroke-width="1.1"/>
<path d="M52.7 147.0 L54.8 147.5 L57.0 150.8 L59.1 144.3 L61.3 150.1 L63.4 148.7 L65.5 145.7 L67.7 147.5 L69.8 147.4 L71.9 146.4 L74.1 144.5 L76.2 141.5 L78.4 145.4 L80.5 148.4 L82.6 143.9 L84.8 147.3 L86.9 146.7 L89.0 144.3 L91.2 147.2 L93.3 145.1 L95.5 147.2 L97.6 145.7 L99.7 145.6 L101.9 149.7 L104.0 149.6 L106.1 149.8 L108.3 150.6 L110.4 151.1 L112.6 150.8 L114.7 147.1 L116.8 146.9 L119.0 141.9 L121.1 151.2 L123.2 146.3 L125.4 146.1 L127.5 144.4 L129.7 146.1 L131.8 148.6 L133.9 146.8 L136.1 145.8 L138.2 146.4 L140.4 143.8 L142.5 149.1 L144.6 143.1 L146.8 143.8 L148.9 146.0 L151.0 145.5 L153.2 146.3 L155.3 149.1 L157.5 145.1 L159.6 144.2 L161.7 145.9 L163.9 145.8 L166.0 144.6 L168.1 144.7 L170.3 144.0 L172.4 147.7 L174.6 145.6 L176.7 145.3 L178.8 149.2 L181.0 146.3 L183.1 145.9 L185.2 145.6 L187.4 144.7 L189.5 150.6 L191.7 146.2 L193.8 148.4 L195.9 149.6 L198.1 146.4 L200.2 145.0 L202.4 146.4 L204.5 144.4 L206.6 146.2 L208.8 145.2 L210.9 146.8 L213.0 142.5 L215.2 152.1 L217.3 147.1 L219.5 146.2 L221.6 152.2 L223.7 148.3 L225.9 147.2 L228.0 143.5 L230.1 143.1 L232.3 147.7 L234.4 150.5 L236.6 144.8 L238.7 143.7 L240.8 147.3 L243.0 146.2 L245.1 146.7 L247.2 145.7 L249.4 145.5 L251.5 143.3 L253.7 149.5 L255.8 145.0 L257.9 146.0 L260.1 147.6 L262.2 144.8 L264.3 152.1 L266.5 145.3 L268.6 146.1 L270.8 148.6 L272.9 145.8 L275.0 147.8 L277.2 142.4 L279.3 141.9 L281.5 144.4 L283.6 145.4 L285.7 147.1 L287.9 145.5 L290.0 146.1 L292.1 146.2 L294.3 146.7 L296.4 147.6 L298.6 147.8 L300.7 148.5 L302.8 148.9 L305.0 141.7 L307.1 148.1 L309.2 146.5 L311.4 144.6 L313.5 147.3 L315.7 145.6 L317.8 145.0 L319.9 144.6 L322.1 146.2 L324.2 149.2 L326.3 145.1 L328.5 150.9 L330.6 147.7 L332.8 146.7 L334.9 147.1 L337.0 143.9 L339.2 145.3 L341.3 143.6 L343.5 149.0 L345.6 145.0 L347.7 144.5 L349.9 144.6 L352.0 149.6 L354.1 147.4 L356.3 149.9 L358.4 149.4 L360.6 138.9 L362.7 143.1 L364.8 141.4 L367.0 146.7 L369.1 146.3 L371.2 146.3 L373.4 146.4 L375.5 146.8 L377.7 147.9 L379.8 151.0 L381.9 145.0 L384.1 144.5 L386.2 143.9 L388.3 146.6 L390.5 142.7 L392.6 147.8 L394.8 149.5 L396.9 146.5 L399.0 148.5 L401.2 149.8 L403.3 145.6 L405.4 144.1 L407.6 146.2 L409.7 145.8 L411.9 139.4 L414.0 145.1 L416.1 144.1 L418.3 149.6 L420.4 145.3 L422.6 144.9 L424.7 147.4 L426.8 148.6 L429.0 146.3 L431.1 148.4 L433.2 149.3 L435.4 145.1 L437.5 143.6 L439.7 145.1 L441.8 147.3 L443.9 146.0 L446.1 145.1 L448.2 144.2 L450.3 148.6 L452.5 146.6 L454.6 146.0 L456.8 146.2 L458.9 146.4 L461.0 146.9 L463.2 149.7 L465.3 148.4 L467.4 149.4 L469.6 143.0 L471.7 146.5 L473.9 146.3 L476.0 145.3 L478.1 147.8 L480.3 148.0 L482.4 147.4 L484.6 145.7 L486.7 143.6 L488.8 145.1 L491.0 149.3 L493.1 144.1 L495.2 143.8 L497.4 146.8 L499.5 145.1 L501.7 147.6 L503.8 144.3 L505.9 147.7 L508.1 151.0 L510.2 150.1 L512.3 146.7 L514.5 147.5 L516.6 145.8 L518.8 145.5 L520.9 149.1 L523.0 142.8 L525.2 143.2 L527.3 145.5 L529.4 147.6 L531.6 145.7 L533.7 149.4 L535.9 145.6 L538.0 146.5 L540.1 145.4 L542.3 144.9 L544.4 145.4 L546.5 143.5 L548.7 144.7 L550.8 145.5 L553.0 146.1 L555.1 144.6 L557.2 150.2 L559.4 142.8 L561.5 150.2 L563.7 147.5 L565.8 151.0 L567.9 152.1 L570.1 147.5 L572.2 146.8 L574.3 146.2 L576.5 145.0 L578.6 147.0 L580.8 146.3 L582.9 145.3 L585.0 147.0 L587.2 146.6 L589.3 145.9 L591.4 147.0 L593.6 147.5 L595.7 152.6 L597.9 147.9 L600.0 145.9 L602.1 147.3 L604.3 145.5 L606.4 143.1 L608.5 146.4 L610.7 145.7 L612.8 148.4 L615.0 147.9 L617.1 146.7 L619.2 147.7 L621.4 146.6 L623.5 149.1 L625.7 146.9 L627.8 148.5 L629.9 149.9 L632.1 148.8 L634.2 148.5 L636.3 145.8 L638.5 145.7 L640.6 146.0 L642.8 143.6 L644.9 143.1 L647.0 144.7 L649.2 146.3 L651.3 142.8 L653.4 147.9 L655.6 150.7 L657.7 146.4 L659.9 148.1 L662.0 147.3 L664.1 146.9 L666.3 149.9 L668.4 149.7 L670.5 144.5 L672.7 144.0 L674.8 147.3 L677.0 141.8 L679.1 148.3 L681.2 147.3 L683.4 145.7 L685.5 147.9 L687.6 147.6 L689.8 146.8 L691.9 147.0 L694.1 143.2 L696.2 143.7 L698.3 147.4 L700.5 146.2 L702.6 144.8 L704.8 145.1 L706.9 146.2 L709.0 143.9 L711.2 143.5 L713.3 147.4 L715.4 144.8 L717.6 149.9 L719.7 149.4 L721.9 145.5 L724.0 147.5 L726.1 147.6 L728.3 145.4 L730.4 147.6 L732.5 146.1 L734.7 150.4 L736.8 147.7 L739.0 139.5 L741.1 143.7 L743.2 147.5 L745.4 143.2 L747.5 144.9 L749.6 143.6 L751.8 145.8 L753.9 147.5 L756.1 143.7 L758.2 145.2 L760.3 150.0 L762.5 144.2 L764.6 146.3 L766.8 143.1 L768.9 145.8 L771.0 143.2 L773.2 144.9 L775.3 144.6 L777.4 146.1 L779.6 146.6 L781.7 145.4 L783.9 144.2 L786.0 143.6 L788.1 141.6 L790.3 143.9 L792.4 144.6 L794.5 140.9 L796.7 145.6 L798.8 145.4 L801.0 147.7 L803.1 145.6 L805.2 141.7 L807.4 145.4 L809.5 142.9 L811.6 147.7 L813.8 148.3 L815.9 145.9 L818.1 149.8 L820.2 140.7 L822.3 143.4 L824.5 148.5 L826.6 147.5 L828.7 147.6 L830.9 144.7 L833.0 145.7 L835.2 145.0 L837.3 144.6 L839.4 147.4 L841.6 148.9 L843.7 145.4 L845.9 147.0 L848.0 144.5 L850.1 147.4 L852.3 146.2 L854.4 147.4 L856.5 148.2 L858.7 147.8 L860.8 145.0 L863.0 141.5 L865.1 144.3 L867.2 146.9 L869.4 144.3 L871.5 146.7 L873.6 149.0 L875.8 145.9 L877.9 142.4 L880.1 146.3 L882.2 148.3 L884.3 146.3 L886.5 143.3 L888.6 144.8 L890.7 144.3 L892.9 140.9 L895.0 142.2 L897.2 143.3 L899.3 146.2 L901.4 145.9 L903.6 146.6 L905.7 143.9 L907.9 146.8 L910.0 142.5 L912.1 146.2 L914.3 148.3 L916.4 144.5 L918.5 149.1 L920.7 145.2 L922.8 146.1 L925.0 142.7 L927.1 145.8 L929.2 141.8 L931.4 146.9 L933.5 146.1 L935.6 148.2 L937.8 144.2 L939.9 146.2 L942.1 145.8 L944.2 149.0 L946.3 150.8 L948.5 147.9 L950.6 143.1 L952.7 147.0 L954.9 148.7 L957.0 148.2 L959.2 146.2 L961.3 149.5 L963.4 148.0 L965.6 146.0 L967.7 146.5 L969.8 145.0 L972.0 143.9 L974.1 145.9 L976.3 145.7 L978.4 143.3 L980.5 145.7 L982.7 147.9 L984.8 147.7 L987.0 148.9 L989.1 142.8 L991.2 147.7 L993.4 145.7 L995.5 145.1 L997.6 147.8 L999.8 143.7 L1001.9 146.4 L1004.1 149.7 L1006.2 146.8 L1008.3 148.3 L1010.5 146.3 L1012.6 145.1 L1014.7 141.5 L1016.9 146.6 L1019.0 146.9 L1021.2 145.4 L1023.3 146.6 L1025.4 146.4 L1027.6 149.2 L1029.7 147.9 L1031.8 147.4 L1034.0 149.6 L1036.1 149.5 L1038.3 149.2 L1040.4 144.5 L1042.5 149.2 L1044.7 142.3 L1046.8 146.9 L1049.0 149.6 L1051.1 150.0 L1053.2 145.7 L1055.4 143.9 L1057.5 147.4 L1059.6 144.5 L1061.8 145.7 L1063.9 146.4 L1066.1 146.6 L1068.2 144.8 L1070.3 150.2 L1072.5 150.0 L1074.6 145.9 L1076.7 146.2 L1078.9 144.9 L1081.0 148.9 L1083.2 147.6 L1085.3 143.9 L1087.4 149.5 L1089.6 147.0 L1091.7 147.5 L1093.8 147.1 L1096.0 148.3 L1098.1 144.2 L1100.3 149.3 L1102.4 148.3 L1104.5 146.6 L1106.7 142.6 L1108.8 142.1 L1110.9 141.4 L1113.1 143.7 L1115.2 145.5 L1117.4 146.1 L1119.5 144.8" fill="none" stroke="#7cc0cd" stroke-width="1.1"/>
<path d="M52.7 160.0 L54.8 165.1 L57.0 164.9 L59.1 165.5 L61.3 161.9 L63.4 166.1 L65.5 160.2 L67.7 163.9 L69.8 163.0 L71.9 164.2 L74.1 161.0 L76.2 165.1 L78.4 163.1 L80.5 164.1 L82.6 161.9 L84.8 163.6 L86.9 161.8 L89.0 163.5 L91.2 162.4 L93.3 161.8 L95.5 163.5 L97.6 160.2 L99.7 160.1 L101.9 160.9 L104.0 160.8 L106.1 163.5 L108.3 162.9 L110.4 164.6 L112.6 163.5 L114.7 162.5 L116.8 164.0 L119.0 163.7 L121.1 163.8 L123.2 163.9 L125.4 163.4 L127.5 161.9 L129.7 164.1 L131.8 161.8 L133.9 160.6 L136.1 161.7 L138.2 163.7 L140.4 164.5 L142.5 163.2 L144.6 160.3 L146.8 162.5 L148.9 163.9 L151.0 163.0 L153.2 161.1 L155.3 163.6 L157.5 161.8 L159.6 161.1 L161.7 162.1 L163.9 163.3 L166.0 162.7 L168.1 162.2 L170.3 161.6 L172.4 161.4 L174.6 161.7 L176.7 162.9 L178.8 161.4 L181.0 164.2 L183.1 160.8 L185.2 161.4 L187.4 162.5 L189.5 161.6 L191.7 162.7 L193.8 161.1 L195.9 160.6 L198.1 160.1 L200.2 164.3 L202.4 163.9 L204.5 162.7 L206.6 161.4 L208.8 160.2 L210.9 160.9 L213.0 165.0 L215.2 163.5 L217.3 163.1 L219.5 163.3 L221.6 163.1 L223.7 163.1 L225.9 162.5 L228.0 161.6 L230.1 162.1 L232.3 163.4 L234.4 162.7 L236.6 163.8 L238.7 162.2 L240.8 163.2 L243.0 161.6 L245.1 160.8 L247.2 162.4 L249.4 163.0 L251.5 163.8 L253.7 161.5 L255.8 162.6 L257.9 162.8 L260.1 162.5 L262.2 162.4 L264.3 161.1 L266.5 163.6 L268.6 162.0 L270.8 162.8 L272.9 161.8 L275.0 163.8 L277.2 161.6 L279.3 159.8 L281.5 162.1 L283.6 161.1 L285.7 162.7 L287.9 165.5 L290.0 163.7 L292.1 162.2 L294.3 163.3 L296.4 161.8 L298.6 164.0 L300.7 162.2 L302.8 164.5 L305.0 161.5 L307.1 162.7 L309.2 163.2 L311.4 162.7 L313.5 160.5 L315.7 159.6 L317.8 165.9 L319.9 161.2 L322.1 159.9 L324.2 161.3 L326.3 163.6 L328.5 161.5 L330.6 162.7 L332.8 163.5 L334.9 164.6 L337.0 161.8 L339.2 160.6 L341.3 162.4 L343.5 161.8 L345.6 164.6 L347.7 162.6 L349.9 163.0 L352.0 163.1 L354.1 162.1 L356.3 161.9 L358.4 162.5 L360.6 162.7 L362.7 162.5 L364.8 162.4 L367.0 161.7 L369.1 161.9 L371.2 161.4 L373.4 163.2 L375.5 167.0 L377.7 162.4 L379.8 160.3 L381.9 162.0 L384.1 162.0 L386.2 163.0 L388.3 163.7 L390.5 163.7 L392.6 164.9 L394.8 163.6 L396.9 164.5 L399.0 162.3 L401.2 162.3 L403.3 160.1 L405.4 160.6 L407.6 159.8 L409.7 161.2 L411.9 159.4 L414.0 164.6 L416.1 163.5 L418.3 161.4 L420.4 159.9 L422.6 163.2 L424.7 162.5 L426.8 162.4 L429.0 161.2 L431.1 163.4 L433.2 162.9 L435.4 163.0 L437.5 164.5 L439.7 161.5 L441.8 162.0 L443.9 161.6 L446.1 164.3 L448.2 164.9 L450.3 161.9 L452.5 162.2 L454.6 162.4 L456.8 163.6 L458.9 162.2 L461.0 163.8 L463.2 161.8 L465.3 162.2 L467.4 162.2 L469.6 164.4 L471.7 161.4 L473.9 161.3 L476.0 160.7 L478.1 159.5 L480.3 162.4 L482.4 161.7 L484.6 163.8 L486.7 160.3 L488.8 165.0 L491.0 166.8 L493.1 166.6 L495.2 165.7 L497.4 165.3 L499.5 159.9 L501.7 161.7 L503.8 163.2 L505.9 161.4 L508.1 164.4 L510.2 165.5 L512.3 161.5 L514.5 161.9 L516.6 164.0 L518.8 161.5 L520.9 164.1 L523.0 161.6 L525.2 163.1 L527.3 160.6 L529.4 161.5 L531.6 164.6 L533.7 159.5 L535.9 164.0 L538.0 162.6 L540.1 163.2 L542.3 163.3 L544.4 162.3 L546.5 162.4 L548.7 161.7 L550.8 160.7 L553.0 163.7 L555.1 165.1 L557.2 164.2 L559.4 163.3 L561.5 163.8 L563.7 160.3 L565.8 162.2 L567.9 162.6 L570.1 163.2 L572.2 165.5 L574.3 165.0 L576.5 162.3 L578.6 162.5 L580.8 163.5 L582.9 160.5 L585.0 164.6 L587.2 163.4 L589.3 162.6 L591.4 165.2 L593.6 159.0 L595.7 161.9 L597.9 164.7 L600.0 160.3 L602.1 161.5 L604.3 161.2 L606.4 161.9 L608.5 160.8 L610.7 163.5 L612.8 161.0 L615.0 163.5 L617.1 162.1 L619.2 160.6 L621.4 161.5 L623.5 161.5 L625.7 160.9 L627.8 162.4 L629.9 161.1 L632.1 161.4 L634.2 162.2 L636.3 161.5 L638.5 163.6 L640.6 164.3 L642.8 165.5 L644.9 162.2 L647.0 163.9 L649.2 161.8 L651.3 164.1 L653.4 163.4 L655.6 162.4 L657.7 160.9 L659.9 162.2 L662.0 161.9 L664.1 162.4 L666.3 161.5 L668.4 163.4 L670.5 161.0 L672.7 162.7 L674.8 162.1 L677.0 162.0 L679.1 163.5 L681.2 164.3 L683.4 163.9 L685.5 163.1 L687.6 161.8 L689.8 164.9 L691.9 162.2 L694.1 159.6 L696.2 164.7 L698.3 164.5 L700.5 164.3 L702.6 163.8 L704.8 160.4 L706.9 162.7 L709.0 162.7 L711.2 161.1 L713.3 163.2 L715.4 161.5 L717.6 163.4 L719.7 162.1 L721.9 165.3 L724.0 159.9 L726.1 162.5 L728.3 162.4 L730.4 162.1 L732.5 162.4 L734.7 163.3 L736.8 163.0 L739.0 165.1 L741.1 162.4 L743.2 163.9 L745.4 161.1 L747.5 160.7 L749.6 162.7 L751.8 160.7 L753.9 164.0 L756.1 163.0 L758.2 164.2 L760.3 162.3 L762.5 165.1 L764.6 162.8 L766.8 160.5 L768.9 162.2 L771.0 165.1 L773.2 164.1 L775.3 166.1 L777.4 165.1 L779.6 164.1 L781.7 161.1 L783.9 163.0 L786.0 162.0 L788.1 163.3 L790.3 163.7 L792.4 163.3 L794.5 163.5 L796.7 162.2 L798.8 164.4 L801.0 160.1 L803.1 160.6 L805.2 162.7 L807.4 162.2 L809.5 163.8 L811.6 163.6 L813.8 162.7 L815.9 163.5 L818.1 162.8 L820.2 162.5 L822.3 163.3 L824.5 160.7 L826.6 165.1 L828.7 161.3 L830.9 163.1 L833.0 161.8 L835.2 162.5 L837.3 167.2 L839.4 161.9 L841.6 162.4 L843.7 163.8 L845.9 164.8 L848.0 162.2 L850.1 162.5 L852.3 158.9 L854.4 161.1 L856.5 159.2 L858.7 163.8 L860.8 164.2 L863.0 160.4 L865.1 160.8 L867.2 163.2 L869.4 165.9 L871.5 164.8 L873.6 162.2 L875.8 163.3 L877.9 162.7 L880.1 163.7 L882.2 163.8 L884.3 163.0 L886.5 164.0 L888.6 160.0 L890.7 163.3 L892.9 161.5 L895.0 163.2 L897.2 160.8 L899.3 164.5 L901.4 161.1 L903.6 161.7 L905.7 158.8 L907.9 163.6 L910.0 162.6 L912.1 162.3 L914.3 161.6 L916.4 163.3 L918.5 162.7 L920.7 165.0 L922.8 163.8 L925.0 162.4 L927.1 162.2 L929.2 163.3 L931.4 159.9 L933.5 160.0 L935.6 163.8 L937.8 167.0 L939.9 167.6 L942.1 164.7 L944.2 162.2 L946.3 161.7 L948.5 166.3 L950.6 164.2 L952.7 161.4 L954.9 163.5 L957.0 163.3 L959.2 159.2 L961.3 161.5 L963.4 163.3 L965.6 163.2 L967.7 164.5 L969.8 164.7 L972.0 162.9 L974.1 163.5 L976.3 163.8 L978.4 164.4 L980.5 161.5 L982.7 162.9 L984.8 161.3 L987.0 161.6 L989.1 162.4 L991.2 161.6 L993.4 162.7 L995.5 165.5 L997.6 164.5 L999.8 160.4 L1001.9 161.6 L1004.1 161.2 L1006.2 163.4 L1008.3 161.4 L1010.5 163.1 L1012.6 160.1 L1014.7 163.1 L1016.9 160.7 L1019.0 162.8 L1021.2 164.2 L1023.3 161.1 L1025.4 162.8 L1027.6 162.6 L1029.7 162.0 L1031.8 164.0 L1034.0 165.1 L1036.1 163.9 L1038.3 164.4 L1040.4 161.5 L1042.5 162.6 L1044.7 164.1 L1046.8 162.4 L1049.0 161.2 L1051.1 159.1 L1053.2 161.3 L1055.4 163.0 L1057.5 161.4 L1059.6 163.4 L1061.8 164.0 L1063.9 160.3 L1066.1 162.7 L1068.2 162.6 L1070.3 166.0 L1072.5 165.4 L1074.6 162.7 L1076.7 163.9 L1078.9 161.8 L1081.0 164.4 L1083.2 163.7 L1085.3 161.7 L1087.4 160.3 L1089.6 160.8 L1091.7 160.5 L1093.8 160.1 L1096.0 161.3 L1098.1 163.8 L1100.3 161.9 L1102.4 161.0 L1104.5 162.5 L1106.7 161.7 L1108.8 164.3 L1110.9 163.8 L1113.1 162.2 L1115.2 166.5 L1117.4 163.9 L1119.5 162.5" fill="none" stroke="#4b96c3" stroke-width="1.1"/>
<path d="M52.2 96 V178.0 H1119.5" stroke="#dcdcdc" stroke-width="1" fill="none"/>
<rect x="51.7" y="193.5" width="1067.8" height="16.2" fill="#deeef6"/>
<path d="M52.7 198.8 L54.8 200.4 L57.0 200.6 L59.1 203.6 L61.3 200.4 L63.4 200.8 L65.5 199.9 L67.7 202.1 L69.8 202.0 L71.9 204.3 L74.1 204.8 L76.2 200.8 L78.4 199.6 L80.5 198.4 L82.6 200.9 L84.8 201.0 L86.9 201.1 L89.0 202.8 L91.2 200.3 L93.3 203.5 L95.5 203.1 L97.6 201.5 L99.7 199.4 L101.9 201.9 L104.0 204.3 L106.1 203.9 L108.3 201.0 L110.4 202.3 L112.6 202.9 L114.7 201.7 L116.8 199.5 L119.0 198.0 L121.1 204.3 L123.2 202.7 L125.4 202.5 L127.5 206.1 L129.7 204.3 L131.8 204.7 L133.9 200.4 L136.1 201.5 L138.2 204.2 L140.4 200.4 L142.5 201.7 L144.6 203.9 L146.8 202.3 L148.9 203.3 L151.0 203.9 L153.2 201.5 L155.3 205.0 L157.5 201.8 L159.6 200.2 L161.7 201.0 L163.9 199.7 L166.0 198.3 L168.1 197.4 L170.3 202.2 L172.4 199.9 L174.6 204.7 L176.7 203.1 L178.8 205.8 L181.0 201.6 L183.1 201.3 L185.2 203.3 L187.4 198.4 L189.5 202.2 L191.7 201.3 L193.8 201.5 L195.9 202.3 L198.1 200.1 L200.2 198.3 L202.4 204.7 L204.5 200.6 L206.6 202.4 L208.8 198.7 L210.9 201.6 L213.0 200.5 L215.2 200.9 L217.3 201.4 L219.5 204.1 L221.6 199.9 L223.7 204.7 L225.9 202.0 L228.0 200.3 L230.1 202.2 L232.3 202.2 L234.4 200.5 L236.6 202.4 L238.7 202.8 L240.8 207.7 L243.0 204.2 L245.1 202.4 L247.2 200.9 L249.4 201.4 L251.5 200.5 L253.7 202.3 L255.8 202.6 L257.9 201.5 L260.1 204.4 L262.2 203.6 L264.3 199.3 L266.5 201.6 L268.6 205.0 L270.8 202.7 L272.9 201.1 L275.0 200.5 L277.2 202.0 L279.3 204.2 L281.5 203.8 L283.6 201.6 L285.7 202.4 L287.9 204.1 L290.0 202.9 L292.1 201.8 L294.3 200.0 L296.4 203.2 L298.6 201.4 L300.7 200.4 L302.8 200.3 L305.0 202.5 L307.1 198.5 L309.2 202.1 L311.4 200.8 L313.5 203.8 L315.7 206.0 L317.8 202.0 L319.9 201.8 L322.1 201.7 L324.2 202.1 L326.3 203.4 L328.5 204.5 L330.6 202.5 L332.8 198.8 L334.9 200.2 L337.0 203.3 L339.2 202.1 L341.3 204.1 L343.5 202.8 L345.6 200.5 L347.7 202.2 L349.9 204.1 L352.0 203.0 L354.1 201.9 L356.3 203.5 L358.4 201.4 L360.6 204.0 L362.7 200.9 L364.8 201.0 L367.0 201.9 L369.1 199.5 L371.2 200.5 L373.4 203.1 L375.5 200.5 L377.7 204.3 L379.8 201.0 L381.9 201.0 L384.1 200.4 L386.2 203.6 L388.3 202.0 L390.5 201.3 L392.6 199.9 L394.8 203.7 L396.9 203.2 L399.0 202.9 L401.2 203.5 L403.3 196.7 L405.4 202.0 L407.6 205.0 L409.7 200.2 L411.9 204.4 L414.0 201.4 L416.1 200.8 L418.3 202.8 L420.4 202.3 L422.6 202.4 L424.7 201.3 L426.8 204.5 L429.0 203.5 L431.1 201.8 L433.2 199.8 L435.4 200.3 L437.5 199.3 L439.7 201.5 L441.8 203.7 L443.9 202.9 L446.1 205.2 L448.2 203.2 L450.3 203.0 L452.5 201.5 L454.6 200.5 L456.8 202.7 L458.9 201.8 L461.0 203.6 L463.2 202.1 L465.3 202.2 L467.4 202.2 L469.6 202.9 L471.7 198.1 L473.9 198.7 L476.0 201.0 L478.1 202.1 L480.3 202.4 L482.4 202.0 L484.6 202.5 L486.7 199.6 L488.8 198.9 L491.0 198.0 L493.1 201.0 L495.2 203.4 L497.4 202.0 L499.5 203.4 L501.7 204.8 L503.8 200.4 L505.9 203.7 L508.1 198.5 L510.2 202.4 L512.3 200.6 L514.5 200.4 L516.6 201.8 L518.8 202.2 L520.9 202.8 L523.0 197.4 L525.2 203.1 L527.3 203.4 L529.4 200.3 L531.6 201.6 L533.7 199.2 L535.9 206.2 L538.0 202.1 L540.1 200.4 L542.3 201.9 L544.4 200.0 L546.5 201.5 L548.7 203.4 L550.8 203.2 L553.0 197.9 L555.1 201.4 L557.2 201.0 L559.4 202.1 L561.5 201.8 L563.7 204.2 L565.8 203.4 L567.9 198.6 L570.1 200.1 L572.2 201.0 L574.3 200.2 L576.5 199.0 L578.6 200.8 L580.8 199.4 L582.9 200.7 L585.0 201.4 L587.2 198.7 L589.3 206.0 L591.4 203.6 L593.6 201.6 L595.7 204.0 L597.9 201.5 L600.0 202.2 L602.1 201.1 L604.3 196.8 L606.4 199.3 L608.5 200.6 L610.7 199.2 L612.8 202.4 L615.0 200.8 L617.1 201.2 L619.2 199.7 L621.4 205.3 L623.5 200.6 L625.7 201.3 L627.8 203.7 L629.9 200.0 L632.1 203.1 L634.2 199.5 L636.3 201.0 L638.5 200.9 L640.6 200.1 L642.8 198.6 L644.9 203.7 L647.0 201.4 L649.2 203.1 L651.3 201.7 L653.4 201.5 L655.6 201.9 L657.7 204.4 L659.9 198.8 L662.0 196.5 L664.1 199.9 L666.3 200.8 L668.4 200.7 L670.5 199.2 L672.7 197.9 L674.8 203.1 L677.0 202.7 L679.1 203.5 L681.2 203.8 L683.4 205.0 L685.5 201.4 L687.6 202.9 L689.8 198.1 L691.9 198.9 L694.1 202.3 L696.2 201.9 L698.3 202.4 L700.5 199.0 L702.6 203.3 L704.8 204.2 L706.9 202.5 L709.0 200.9 L711.2 202.5 L713.3 198.3 L715.4 200.9 L717.6 199.2 L719.7 200.9 L721.9 200.7 L724.0 202.3 L726.1 206.3 L728.3 201.5 L730.4 205.5 L732.5 201.7 L734.7 203.4 L736.8 196.5 L739.0 200.0 L741.1 199.1 L743.2 199.2 L745.4 203.1 L747.5 205.3 L749.6 202.8 L751.8 201.3 L753.9 202.5 L756.1 201.3 L758.2 200.5 L760.3 205.0 L762.5 201.1 L764.6 199.3 L766.8 202.9 L768.9 205.0 L771.0 200.8 L773.2 201.6 L775.3 200.1 L777.4 202.8 L779.6 200.7 L781.7 205.3 L783.9 201.1 L786.0 199.8 L788.1 200.0 L790.3 203.3 L792.4 201.1 L794.5 206.4 L796.7 201.7 L798.8 202.4 L801.0 205.0 L803.1 202.3 L805.2 202.2 L807.4 199.4 L809.5 200.5 L811.6 199.4 L813.8 204.0 L815.9 203.8 L818.1 204.1 L820.2 202.9 L822.3 202.1 L824.5 198.0 L826.6 202.7 L828.7 202.2 L830.9 201.7 L833.0 202.2 L835.2 201.1 L837.3 203.6 L839.4 199.7 L841.6 202.5 L843.7 199.9 L845.9 201.9 L848.0 199.9 L850.1 204.5 L852.3 203.0 L854.4 203.9 L856.5 202.3 L858.7 199.7 L860.8 203.9 L863.0 204.5 L865.1 203.6 L867.2 201.8 L869.4 205.7 L871.5 201.6 L873.6 204.3 L875.8 203.9 L877.9 202.7 L880.1 201.5 L882.2 203.2 L884.3 202.5 L886.5 201.0 L888.6 201.5 L890.7 205.5 L892.9 202.1 L895.0 201.2 L897.2 199.6 L899.3 196.7 L901.4 199.5 L903.6 201.4 L905.7 203.8 L907.9 200.7 L910.0 199.2 L912.1 199.0 L914.3 202.9 L916.4 202.5 L918.5 201.1 L920.7 199.4 L922.8 200.2 L925.0 201.4 L927.1 202.8 L929.2 202.4 L931.4 203.4 L933.5 200.4 L935.6 199.9 L937.8 201.3 L939.9 199.0 L942.1 201.9 L944.2 198.9 L946.3 201.5 L948.5 200.9 L950.6 199.1 L952.7 201.0 L954.9 205.3 L957.0 202.6 L959.2 203.4 L961.3 203.4 L963.4 202.2 L965.6 199.3 L967.7 198.5 L969.8 203.2 L972.0 201.8 L974.1 201.7 L976.3 205.2 L978.4 202.0 L980.5 202.6 L982.7 202.2 L984.8 205.0 L987.0 202.3 L989.1 200.1 L991.2 199.8 L993.4 198.7 L995.5 202.4 L997.6 199.4 L999.8 201.5 L1001.9 204.4 L1004.1 200.6 L1006.2 202.9 L1008.3 202.8 L1010.5 203.5 L1012.6 200.8 L1014.7 201.0 L1016.9 203.1 L1019.0 201.4 L1021.2 202.6 L1023.3 202.8 L1025.4 199.8 L1027.6 203.9 L1029.7 203.8 L1031.8 203.3 L1034.0 203.3 L1036.1 201.4 L1038.3 197.5 L1040.4 201.8 L1042.5 201.6 L1044.7 203.2 L1046.8 203.3 L1049.0 198.3 L1051.1 199.9 L1053.2 202.6 L1055.4 202.7 L1057.5 203.6 L1059.6 203.7 L1061.8 203.1 L1063.9 202.9 L1066.1 200.4 L1068.2 200.3 L1070.3 201.3 L1072.5 201.4 L1074.6 203.0 L1076.7 201.1 L1078.9 203.0 L1081.0 201.1 L1083.2 200.8 L1085.3 200.7 L1087.4 202.1 L1089.6 205.1 L1091.7 200.6 L1093.8 199.7 L1096.0 203.8 L1098.1 201.1 L1100.3 200.4 L1102.4 204.3 L1104.5 200.3 L1106.7 203.0 L1108.8 204.8 L1110.9 200.6 L1113.1 203.0 L1115.2 204.3 L1117.4 201.4 L1119.5 205.7" fill="none" stroke="#444" stroke-width="1.35" stroke-linejoin="round"/>
<ellipse cx="49.8" cy="201.4" rx="2.2" ry="2.7" fill="#222"/><ellipse cx="1120.6" cy="201.4" rx="2.2" ry="2.7" fill="#222"/><ellipse cx="1121.3" cy="201.4" rx="0.8" ry="1.5" fill="#fff"/>
<defs><radialGradient id="tg" cx="50%" cy="50%" r="60%"><stop offset="0" stop-color="#7b958b"/><stop offset="1" stop-color="#2b3935"/></radialGradient><linearGradient id="vl" x1="0" y1="0" x2="0" y2="1"><stop offset="0" stop-color="#27302d"/><stop offset="0.5" stop-color="#6b7471"/><stop offset="1" stop-color="#c9cdcc"/></linearGradient></defs>
<rect x="521.8" y="98" width="1" height="81" fill="url(#vl)"/>
<rect x="511" y="87" width="21.4" height="12" rx="3" fill="url(#tg)"/>
<path d="M514 103 H529.4 a3 3 0 0 1 3 3 V112.4 a3 3 0 0 1 -3 3 H524 L522 117.6 L520 115.4 H514 a3 3 0 0 1 -3 -3 V106 a3 3 0 0 1 3 -3 Z" fill="#000"/>
<g><circle cx="1133.6" cy="200.6" r="3.6" fill="#eef3f8" stroke="#c9d3de" stroke-width="1"/><path d="M1136 204 L1138.4 207" stroke="#e8c27a" stroke-width="1.6"/><path d="M1136.6 197.4 h3 M1138.1 196 v3 M1136.6 201 h3" stroke="#e79a9a" stroke-width="1"/></g>
</svg>
<div style="position:absolute;left:1140px;top:90px;width:28.6px;height:15.5px;background:linear-gradient(#fdfdfd,#efefef);border:1px solid #b9b9b9;border-radius:2px;box-sizing:border-box;"></div>
<div style="position:absolute;left:1140px;top:117px;width:5.6px;height:8px;background:#1c5f9a;"></div>
<div style="position:absolute;left:1140px;top:132px;width:5.6px;height:8px;background:#3db9dc;"></div>
<div style="position:absolute;left:1140px;top:146.6px;width:5.6px;height:8px;background:#e8601c;"></div>
<svg width="1251" height="770" viewBox="0 0 1251 770">
<path d="M84.5 234.5 L90.2 217.0 Q91.0 214.5 93.5 214.5 L175.0 214.5 Q177.5 214.5 178.5 217.0 L186.5 234.5 Z" fill="#c9c9c9"/>
<path d="M84.5 234.5 L90.2 217.0" stroke="#dcdcdc" stroke-width="0.8" fill="none"/>
<path d="M179.5 234.5 L185.2 217.0 Q186.0 214.5 188.5 214.5 L255.5 214.5 Q258.0 214.5 259.0 217.0 L267.0 234.5 Z" fill="#c9c9c9"/>
<path d="M179.5 234.5 L185.2 217.0" stroke="#dcdcdc" stroke-width="0.8" fill="none"/>
<path d="M260.9 234.5 L266.6 217.0 Q267.4 214.5 269.9 214.5 L327.5 214.5 Q330.0 214.5 331.0 217.0 L339.0 234.5 Z" fill="#c9c9c9"/>
<path d="M260.9 234.5 L266.6 217.0" stroke="#dcdcdc" stroke-width="0.8" fill="none"/>
<path d="M10.5 234.5 L10.5 214.5 L77.5 214.5 Q80.0 214.5 81.0 217.0 L89.0 234.5 Z" fill="#fff"/>
</svg>
<div style="position:absolute;left:1174.4px;top:215px;width:56.3px;height:17.6px;background:linear-gradient(#fdfdfd,#efefef);border:1px solid #b9b9b9;border-radius:2px;box-sizing:border-box;"></div>
<svg width="1251" height="770" viewBox="0 0 1251 770">
<path d="M52.7 302.4 H1127 M52.7 282.4 H1127" stroke="#f3f3f3" stroke-width="1" fill="none"/>
<path d="M52.2 261.2 V323.7" stroke="#dcdcdc" stroke-width="1" fill="none"/>
<path d="M52.2 323.9 H1127" stroke="#e4e4e4" stroke-width="1.4" fill="none"/>
<path d="M52.7 298.8 L54.9 305.5 L57.0 307.2 L59.2 303.9 L61.3 303.5 L63.5 306.6 L65.6 304.5 L67.8 305.7 L70.0 305.0 L72.1 298.5 L74.3 301.9 L76.4 301.0 L78.6 302.2 L80.7 302.3 L82.9 303.5 L85.1 303.0 L87.2 297.9 L89.4 301.6 L91.5 306.6 L93.7 304.4 L95.8 303.6 L98.0 300.7 L100.1 301.1 L102.3 301.5 L104.5 301.4 L106.6 303.2 L108.8 302.0 L110.9 295.3 L113.1 302.4 L115.2 297.9 L117.4 301.1 L119.6 301.5 L121.7 302.6 L123.9 301.8 L126.0 304.6 L128.2 306.0 L130.3 304.5 L132.5 302.4 L134.7 301.9 L136.8 303.7 L139.0 303.3 L141.1 302.0 L143.3 302.9 L145.4 301.8 L147.6 303.0 L149.8 304.6 L151.9 303.2 L154.1 303.9 L156.2 303.8 L158.4 302.6 L160.5 297.1 L162.7 302.7 L164.9 302.5 L167.0 303.4 L169.2 303.9 L171.3 306.1 L173.5 302.6 L175.6 305.6 L177.8 300.5 L180.0 301.5 L182.1 304.4 L184.3 305.4 L186.4 303.5 L188.6 307.1 L190.7 307.1 L192.9 305.3 L195.0 305.0 L197.2 298.8 L199.4 303.5 L201.5 301.3 L203.7 301.4 L205.8 300.7 L208.0 303.6 L210.1 300.0 L212.3 302.0 L214.5 303.9 L216.6 302.7 L218.8 303.9 L220.9 304.2 L223.1 304.5 L225.2 304.7 L227.4 302.6 L229.6 301.8 L231.7 300.2 L233.9 305.5 L236.0 301.3 L238.2 301.3 L240.3 304.3 L242.5 303.2 L244.7 305.3 L246.8 303.1 L249.0 302.0 L251.1 302.4 L253.3 299.4 L255.4 302.3 L257.6 303.1 L259.8 305.6 L261.9 302.8 L264.1 299.8 L266.2 298.8 L268.4 304.3 L270.5 299.4 L272.7 304.6 L274.9 306.0 L277.0 303.3 L279.2 303.2 L281.3 303.7 L283.5 305.3 L285.6 306.6 L287.8 302.8 L289.9 302.5 L292.1 306.7 L294.3 302.6 L296.4 300.7 L298.6 305.5 L300.7 300.7 L302.9 302.4 L305.0 305.0 L307.2 303.8 L309.4 306.0 L311.5 303.4 L313.7 301.7 L315.8 304.8 L318.0 302.1 L320.1 309.0 L322.3 303.1 L324.5 304.2 L326.6 306.9 L328.8 305.5 L330.9 302.0 L333.1 300.9 L335.2 304.9 L337.4 300.4 L339.6 305.0 L341.7 301.0 L343.9 305.4 L346.0 302.2 L348.2 299.6 L350.3 304.9 L352.5 304.3 L354.7 305.7 L356.8 302.3 L359.0 302.3 L361.1 304.7 L363.3 305.1 L365.4 298.7 L367.6 303.6 L369.7 297.5 L371.9 302.8 L374.1 302.6 L376.2 302.3 L378.4 302.0 L380.5 303.1 L382.7 302.8 L384.8 305.8 L387.0 304.7 L389.2 305.2 L391.3 305.9 L393.5 303.6 L395.6 303.9 L397.8 303.6 L399.9 302.4 L402.1 302.4 L404.3 306.1 L406.4 304.4 L408.6 303.5 L410.7 305.7 L412.9 297.2 L415.0 303.3 L417.2 300.4 L419.4 304.4 L421.5 302.9 L423.7 301.3 L425.8 297.9 L428.0 302.0 L430.1 305.5 L432.3 300.7 L434.5 303.6 L436.6 302.8 L438.8 304.5 L440.9 302.0 L443.1 302.3 L445.2 298.2 L447.4 305.3 L449.6 304.3 L451.7 305.8 L453.9 303.0 L456.0 304.1 L458.2 302.6 L460.3 303.9 L462.5 301.6 L464.6 301.0 L466.8 304.5 L469.0 302.5 L471.1 302.0 L473.3 304.8 L475.4 301.8 L477.6 302.6 L479.7 306.9 L481.9 304.8 L484.1 304.6 L486.2 306.3 L488.4 295.4 L490.5 303.8 L492.7 305.0 L494.8 306.6 L497.0 307.5 L499.2 306.3 L501.3 303.1 L503.5 305.4 L505.6 298.2 L507.8 299.8 L509.9 306.0 L512.1 305.5 L514.3 302.6 L516.4 304.1 L518.6 306.8 L520.7 304.9 L522.9 305.4 L525.0 304.1 L527.2 305.6 L529.4 303.4 L531.5 299.3 L533.7 302.7 L535.8 303.4 L538.0 307.0 L540.1 306.3 L542.3 301.4 L544.5 304.7 L546.6 303.3 L548.8 304.5 L550.9 303.5 L553.1 302.2 L555.2 304.7 L557.4 302.6 L559.5 303.9 L561.7 302.8 L563.9 304.1 L566.0 303.7 L568.2 301.1 L570.3 304.9 L572.5 305.8 L574.6 303.4 L576.8 307.3 L579.0 306.1 L581.1 303.9 L583.3 305.3 L585.4 305.5 L587.6 301.9 L589.7 302.1 L591.9 302.4 L594.1 303.2 L596.2 301.3 L598.4 301.8 L600.5 305.9 L602.7 305.5 L604.8 304.7 L607.0 305.2 L609.2 300.2 L611.3 300.0 L613.5 306.5 L615.6 301.7 L617.8 302.3 L619.9 302.1 L622.1 301.3 L624.3 302.4 L626.4 304.5 L628.6 301.4 L630.7 304.2 L632.9 303.1 L635.0 307.9 L637.2 306.6 L639.3 305.2 L641.5 304.8 L643.7 303.9 L645.8 302.3 L648.0 303.5 L650.1 304.2 L652.3 303.6 L654.4 303.5 L656.6 302.5 L658.8 306.1 L660.9 305.5 L663.1 305.9 L665.2 302.7 L667.4 300.3 L669.5 305.0 L671.7 304.9 L673.9 301.3 L676.0 304.1 L678.2 299.8 L680.3 298.7 L682.5 301.8 L684.6 303.9 L686.8 302.1 L689.0 303.4 L691.1 303.9 L693.3 299.7 L695.4 304.6 L697.6 303.2 L699.7 302.4 L701.9 307.8 L704.1 303.3 L706.2 306.3 L708.4 307.5 L710.5 304.6 L712.7 305.6 L714.8 309.7 L717.0 305.5 L719.2 305.3 L721.3 303.3 L723.5 303.5 L725.6 304.7 L727.8 307.1 L729.9 305.8 L732.1 304.2 L734.2 303.8 L736.4 303.9 L738.6 303.4 L740.7 301.9 L742.9 305.0 L745.0 304.1 L747.2 304.3 L749.3 305.6 L751.5 306.9 L753.7 305.8 L755.8 305.0 L758.0 302.4 L760.1 304.1 L762.3 301.0 L764.4 304.6 L766.6 305.5 L768.8 304.5 L770.9 303.7 L773.1 302.9 L775.2 298.1 L777.4 303.0 L779.5 303.2 L781.7 304.1 L783.9 304.4 L786.0 300.5 L788.2 303.0 L790.3 301.5 L792.5 303.1 L794.6 305.0 L796.8 302.0 L799.0 307.3 L801.1 306.5 L803.3 306.6 L805.4 301.3 L807.6 306.5 L809.7 305.3 L811.9 306.0 L814.1 300.9 L816.2 303.9 L818.4 304.2 L820.5 302.0 L822.7 306.1 L824.8 302.6 L827.0 305.5 L829.1 305.3 L831.3 305.3 L833.5 302.8 L835.6 304.2 L837.8 304.1 L839.9 302.7 L842.1 305.0 L844.2 301.9 L846.4 304.2 L848.6 306.0 L850.7 300.4 L852.9 302.6 L855.0 304.7 L857.2 299.5 L859.3 301.5 L861.5 302.8 L863.7 298.5 L865.8 299.4 L868.0 301.4 L870.1 304.0 L872.3 301.8 L874.4 304.6 L876.6 302.5 L878.8 302.9 L880.9 301.7 L883.1 304.9 L885.2 305.1 L887.4 303.0 L889.5 302.0 L891.7 301.8 L893.9 302.4 L896.0 301.1 L898.2 295.5 L900.3 301.7 L902.5 305.4 L904.6 304.5 L906.8 303.5 L908.9 304.2 L911.1 304.2 L913.3 304.2 L915.4 302.5 L917.6 302.1 L919.7 307.5 L921.9 301.1 L924.0 303.0 L926.2 304.5 L928.4 304.9 L930.5 304.5 L932.7 301.9 L934.8 302.4 L937.0 305.6 L939.1 303.9 L941.3 303.5 L943.5 303.9 L945.6 300.8 L947.8 303.8 L949.9 302.4 L952.1 309.1 L954.2 303.7 L956.4 305.2 L958.6 305.9 L960.7 304.8 L962.9 301.9 L965.0 304.0 L967.2 302.5 L969.3 304.2 L971.5 306.3 L973.7 305.5 L975.8 305.7 L978.0 304.5 L980.1 303.4 L982.3 302.8 L984.4 307.6 L986.6 302.4 L988.8 303.8 L990.9 303.6 L993.1 307.0 L995.2 305.3 L997.4 303.6 L999.5 304.3 L1001.7 302.8 L1003.8 298.4 L1006.0 304.9 L1008.2 304.9 L1010.3 306.7 L1012.5 299.1 L1014.6 302.3 L1016.8 299.7 L1018.9 303.4 L1021.1 301.3 L1023.3 303.3 L1025.4 309.4 L1027.6 305.2 L1029.7 302.5 L1031.9 303.7 L1034.0 298.5 L1036.2 304.3 L1038.4 307.2 L1040.5 306.0 L1042.7 305.7 L1044.8 302.9 L1047.0 308.6 L1049.1 305.5 L1051.3 306.4 L1053.5 305.5 L1055.6 304.8 L1057.8 304.1 L1059.9 303.6 L1062.1 301.8 L1064.2 305.2 L1066.4 303.4 L1068.6 305.6 L1070.7 307.6 L1072.9 303.5 L1075.0 302.4 L1077.2 302.7 L1079.3 304.4 L1081.5 302.1 L1083.7 295.4 L1085.8 300.1 L1088.0 305.0 L1090.1 305.0 L1092.3 304.5 L1094.4 305.1 L1096.6 305.2 L1098.7 303.7 L1100.9 301.1 L1103.1 302.1 L1105.2 301.1 L1107.4 300.7 L1109.5 305.8 L1111.7 303.8 L1113.8 302.1 L1116.0 305.2 L1118.2 303.7 L1120.3 303.4 L1122.5 306.9 L1124.6 305.2 L1126.8 304.4 L1127.0 305.1" fill="none" stroke="#7ad0e6" stroke-width="1.1" stroke-linejoin="round"/>
<path d="M52.7 283.2 L54.9 284.2 L57.0 286.0 L59.2 288.8 L61.3 292.8 L63.5 286.0 L65.6 284.6 L67.8 285.3 L70.0 283.5 L72.1 288.5 L74.3 285.0 L76.4 282.8 L78.6 286.0 L80.7 286.9 L82.9 283.6 L85.1 283.7 L87.2 285.0 L89.4 283.9 L91.5 285.0 L93.7 285.1 L95.8 290.8 L98.0 286.4 L100.1 286.5 L102.3 285.6 L104.5 285.1 L106.6 286.9 L108.8 284.1 L110.9 284.0 L113.1 284.4 L115.2 283.9 L117.4 283.2 L119.6 284.7 L121.7 286.5 L123.9 286.8 L126.0 284.6 L128.2 285.9 L130.3 284.7 L132.5 286.8 L134.7 284.6 L136.8 284.9 L139.0 289.7 L141.1 284.2 L143.3 284.8 L145.4 285.9 L147.6 285.1 L149.8 288.5 L151.9 286.0 L154.1 286.2 L156.2 284.6 L158.4 285.7 L160.5 284.7 L162.7 286.6 L164.9 286.1 L167.0 283.7 L169.2 286.0 L171.3 284.1 L173.5 285.6 L175.6 288.4 L177.8 285.4 L180.0 283.4 L182.1 285.2 L184.3 286.1 L186.4 285.2 L188.6 284.7 L190.7 286.0 L192.9 283.5 L195.0 289.7 L197.2 283.9 L199.4 282.5 L201.5 283.3 L203.7 286.9 L205.8 285.1 L208.0 286.5 L210.1 285.7 L212.3 283.2 L214.5 282.4 L216.6 282.7 L218.8 283.0 L220.9 284.7 L223.1 284.8 L225.2 282.5 L227.4 284.5 L229.6 287.1 L231.7 284.6 L233.9 284.1 L236.0 283.7 L238.2 282.4 L240.3 283.9 L242.5 284.1 L244.7 287.1 L246.8 285.9 L249.0 291.2 L251.1 285.3 L253.3 282.5 L255.4 284.3 L257.6 283.9 L259.8 285.0 L261.9 282.4 L264.1 285.9 L266.2 285.5 L268.4 283.0 L270.5 285.2 L272.7 285.2 L274.9 284.2 L277.0 283.9 L279.2 284.0 L281.3 284.5 L283.5 283.5 L285.6 285.2 L287.8 285.4 L289.9 284.8 L292.1 283.0 L294.3 284.9 L296.4 287.9 L298.6 285.4 L300.7 285.1 L302.9 287.7 L305.0 284.7 L307.2 284.7 L309.4 287.5 L311.5 284.6 L313.7 283.2 L315.8 285.9 L318.0 284.7 L320.1 286.1 L322.3 286.8 L324.5 286.9 L326.6 288.0 L328.8 286.0 L330.9 284.5 L333.1 286.5 L335.2 284.7 L337.4 285.0 L339.6 282.4 L341.7 286.4 L343.9 284.8 L346.0 287.7 L348.2 284.5 L350.3 284.3 L352.5 283.7 L354.7 285.4 L356.8 288.8 L359.0 284.5 L361.1 283.3 L363.3 282.9 L365.4 284.7 L367.6 283.2 L369.7 288.5 L371.9 284.1 L374.1 287.4 L376.2 284.9 L378.4 282.4 L380.5 282.4 L382.7 282.4 L384.8 284.1 L387.0 283.6 L389.2 282.4 L391.3 287.3 L393.5 282.4 L395.6 285.4 L397.8 285.7 L399.9 284.9 L402.1 284.7 L404.3 282.5 L406.4 285.0 L408.6 283.6 L410.7 284.5 L412.9 284.4 L415.0 284.3 L417.2 284.4 L419.4 284.6 L421.5 284.0 L423.7 283.7 L425.8 285.2 L428.0 285.8 L430.1 283.3 L432.3 284.9 L434.5 284.6 L436.6 284.0 L438.8 284.8 L440.9 285.6 L443.1 285.2 L445.2 284.6 L447.4 282.5 L449.6 286.3 L451.7 284.5 L453.9 287.7 L456.0 282.5 L458.2 283.0 L460.3 284.0 L462.5 286.9 L464.6 284.7 L466.8 286.3 L469.0 285.4 L471.1 283.3 L473.3 286.2 L475.4 285.0 L477.6 283.7 L479.7 284.1 L481.9 284.1 L484.1 282.7 L486.2 285.5 L488.4 286.3 L490.5 285.3 L492.7 284.2 L494.8 285.0 L497.0 286.1 L499.2 286.0 L501.3 282.4 L503.5 284.3 L505.6 285.0 L507.8 286.9 L509.9 284.8 L512.1 288.8 L514.3 282.6 L516.4 284.4 L518.6 285.2 L520.7 285.2 L522.9 282.9 L525.0 283.9 L527.2 284.6 L529.4 285.8 L531.5 290.3 L533.7 285.8 L535.8 286.2 L538.0 282.4 L540.1 282.4 L542.3 284.9 L544.5 288.3 L546.6 287.5 L548.8 285.2 L550.9 283.4 L553.1 289.9 L555.2 285.7 L557.4 282.4 L559.5 284.2 L561.7 282.4 L563.9 284.7 L566.0 285.9 L568.2 290.3 L570.3 282.7 L572.5 284.3 L574.6 285.7 L576.8 290.6 L579.0 291.0 L581.1 286.3 L583.3 285.3 L585.4 287.2 L587.6 284.6 L589.7 285.7 L591.9 282.9 L594.1 284.9 L596.2 284.3 L598.4 283.1 L600.5 286.5 L602.7 283.4 L604.8 283.2 L607.0 284.2 L609.2 284.5 L611.3 284.0 L613.5 285.1 L615.6 283.4 L617.8 282.6 L619.9 282.4 L622.1 287.2 L624.3 285.7 L626.4 292.0 L628.6 287.3 L630.7 285.4 L632.9 286.6 L635.0 284.2 L637.2 287.2 L639.3 286.2 L641.5 288.3 L643.7 286.3 L645.8 286.4 L648.0 284.3 L650.1 283.7 L652.3 284.4 L654.4 284.4 L656.6 284.4 L658.8 284.6 L660.9 283.6 L663.1 287.8 L665.2 285.6 L667.4 286.0 L669.5 284.7 L671.7 283.5 L673.9 286.3 L676.0 285.9 L678.2 284.6 L680.3 283.3 L682.5 282.8 L684.6 284.9 L686.8 284.5 L689.0 283.6 L691.1 284.1 L693.3 286.3 L695.4 285.9 L697.6 285.1 L699.7 284.7 L701.9 284.5 L704.1 283.3 L706.2 284.7 L708.4 285.5 L710.5 284.2 L712.7 284.7 L714.8 283.5 L717.0 285.3 L719.2 283.6 L721.3 283.8 L723.5 285.5 L725.6 284.5 L727.8 285.1 L729.9 285.5 L732.1 283.8 L734.2 284.5 L736.4 283.0 L738.6 285.6 L740.7 284.4 L742.9 284.0 L745.0 288.3 L747.2 283.1 L749.3 285.1 L751.5 284.8 L753.7 283.7 L755.8 285.0 L758.0 282.4 L760.1 284.5 L762.3 282.4 L764.4 284.2 L766.6 282.4 L768.8 283.9 L770.9 285.3 L773.1 286.2 L775.2 284.4 L777.4 285.4 L779.5 286.5 L781.7 284.1 L783.9 285.5 L786.0 286.0 L788.2 284.1 L790.3 284.6 L792.5 287.8 L794.6 284.5 L796.8 282.4 L799.0 283.6 L801.1 286.5 L803.3 284.3 L805.4 287.3 L807.6 288.2 L809.7 283.6 L811.9 284.2 L814.1 284.3 L816.2 285.4 L818.4 282.4 L820.5 284.6 L822.7 287.0 L824.8 286.5 L827.0 286.3 L829.1 291.4 L831.3 283.3 L833.5 285.8 L835.6 290.5 L837.8 284.9 L839.9 284.0 L842.1 287.6 L844.2 284.5 L846.4 284.3 L848.6 283.5 L850.7 285.5 L852.9 284.3 L855.0 285.8 L857.2 283.2 L859.3 283.4 L861.5 283.7 L863.7 283.2 L865.8 289.3 L868.0 283.9 L870.1 285.9 L872.3 287.0 L874.4 284.8 L876.6 287.1 L878.8 287.2 L880.9 284.4 L883.1 282.9 L885.2 282.4 L887.4 283.0 L889.5 283.9 L891.7 284.3 L893.9 283.0 L896.0 284.7 L898.2 283.6 L900.3 283.5 L902.5 286.9 L904.6 282.6 L906.8 283.3 L908.9 285.3 L911.1 285.6 L913.3 284.7 L915.4 284.1 L917.6 285.5 L919.7 283.4 L921.9 286.1 L924.0 285.3 L926.2 283.3 L928.4 283.2 L930.5 284.3 L932.7 283.4 L934.8 284.5 L937.0 283.5 L939.1 285.1 L941.3 285.4 L943.5 284.2 L945.6 285.3 L947.8 284.7 L949.9 285.1 L952.1 282.4 L954.2 284.9 L956.4 287.7 L958.6 283.8 L960.7 285.5 L962.9 285.6 L965.0 283.0 L967.2 284.8 L969.3 283.7 L971.5 282.5 L973.7 288.1 L975.8 285.9 L978.0 284.6 L980.1 283.9 L982.3 284.0 L984.4 284.6 L986.6 283.9 L988.8 282.8 L990.9 284.2 L993.1 284.6 L995.2 286.2 L997.4 287.4 L999.5 285.2 L1001.7 283.2 L1003.8 282.6 L1006.0 284.6 L1008.2 284.1 L1010.3 290.2 L1012.5 288.2 L1014.6 285.5 L1016.8 285.8 L1018.9 288.9 L1021.1 285.8 L1023.3 284.2 L1025.4 285.3 L1027.6 286.0 L1029.7 286.6 L1031.9 283.7 L1034.0 285.2 L1036.2 285.2 L1038.4 285.1 L1040.5 288.5 L1042.7 284.7 L1044.8 285.7 L1047.0 284.0 L1049.1 288.4 L1051.3 283.1 L1053.5 282.5 L1055.6 285.5 L1057.8 283.2 L1059.9 282.4 L1062.1 287.7 L1064.2 284.1 L1066.4 285.5 L1068.6 283.8 L1070.7 284.3 L1072.9 285.7 L1075.0 283.9 L1077.2 284.2 L1079.3 283.1 L1081.5 285.0 L1083.7 286.9 L1085.8 286.2 L1088.0 285.6 L1090.1 285.7 L1092.3 282.4 L1094.4 283.3 L1096.6 283.7 L1098.7 286.3 L1100.9 285.1 L1103.1 284.4 L1105.2 285.6 L1107.4 283.5 L1109.5 284.3 L1111.7 286.7 L1113.8 283.1 L1116.0 283.8 L1118.2 285.5 L1120.3 286.4 L1122.5 289.2 L1124.6 285.4 L1126.8 284.3 L1127.0 283.3" fill="none" stroke="#5590b9" stroke-width="1.1" stroke-linejoin="round"/>
<rect x="525.3" y="264.0" width="1" height="60.7" fill="url(#vl)"/>
<rect x="512" y="253.4" width="26.4" height="11.6" rx="3" fill="url(#tg)"/>
<path d="M738.2 265.7 H758.8 a2.5 2.5 0 0 1 2.5 2.5 V274.7 a2.5 2.5 0 0 1 -2.5 2.5 H750.7 L748.5 280.4 L746.3 277.2 H738.2 a2.5 2.5 0 0 1 -2.5 -2.5 V268.2 a2.5 2.5 0 0 1 2.5 -2.5 Z" fill="#1b5f97"/>
</svg>
<div style="position:absolute;left:1140px;top:257px;width:28.6px;height:16px;background:linear-gradient(#fdfdfd,#efefef);border:1px solid #b9b9b9;border-radius:2px;box-sizing:border-box;"></div>
<div style="position:absolute;left:1140px;top:283.4px;width:5.6px;height:8px;background:#1c5f9a;"></div>
<div style="position:absolute;left:1140px;top:298px;width:5.6px;height:8px;background:#3db9dc;"></div>
<svg width="1251" height="770" viewBox="0 0 1251 770">
<path d="M52.7 395.4 H1127 M52.7 375.4 H1127" stroke="#f3f3f3" stroke-width="1" fill="none"/>
<path d="M52.2 354.2 V416.7" stroke="#dcdcdc" stroke-width="1" fill="none"/>
<path d="M52.2 416.9 H1127" stroke="#e4e4e4" stroke-width="1.4" fill="none"/>
<path d="M52.7 375.4 L54.9 375.4 L57.0 375.4 L59.2 375.4 L61.3 375.4 L63.5 375.4 L65.6 375.4 L67.8 375.4 L70.0 375.4 L72.1 375.4 L74.3 375.4 L76.4 375.4 L78.6 375.4 L80.7 375.4 L82.9 375.4 L85.1 375.4 L87.2 375.4 L89.4 375.4 L91.5 375.4 L93.7 375.4 L95.8 375.4 L98.0 375.4 L100.1 375.4 L102.3 375.4 L104.5 375.4 L106.6 375.4 L108.8 375.4 L110.9 375.4 L113.1 375.4 L115.2 375.4 L117.4 375.4 L119.6 375.4 L121.7 375.4 L123.9 375.4 L126.0 375.4 L128.2 375.4 L130.3 375.4 L132.5 375.4 L134.7 375.4 L136.8 375.4 L139.0 375.4 L141.1 375.4 L143.3 375.4 L145.4 375.4 L147.6 375.4 L149.8 375.4 L151.9 375.4 L154.1 375.4 L156.2 375.4 L158.4 375.4 L160.5 375.4 L162.7 375.4 L164.9 375.4 L167.0 375.4 L169.2 375.4 L171.3 375.4 L173.5 375.4 L175.6 375.4 L177.8 375.4 L180.0 375.4 L182.1 375.4 L184.3 375.4 L186.4 375.4 L188.6 375.4 L190.7 375.4 L192.9 375.4 L195.0 375.4 L197.2 375.4 L199.4 375.4 L201.5 375.4 L203.7 375.4 L205.8 375.4 L208.0 375.4 L210.1 375.4 L212.3 375.4 L214.5 375.4 L216.6 375.4 L218.8 375.4 L220.9 375.4 L223.1 375.4 L225.2 375.4 L227.4 375.4 L229.6 375.4 L231.7 375.4 L233.9 375.4 L236.0 375.4 L238.2 375.4 L240.3 375.4 L242.5 375.4 L244.7 375.4 L246.8 375.4 L249.0 375.4 L251.1 375.4 L253.3 375.4 L255.4 375.4 L257.6 375.4 L259.8 375.4 L261.9 375.4 L264.1 375.4 L266.2 375.4 L268.4 375.4 L270.5 375.4 L272.7 375.4 L274.9 375.4 L277.0 375.4 L279.2 375.4 L281.3 375.4 L283.5 375.4 L285.6 375.4 L287.8 375.4 L289.9 375.4 L292.1 375.4 L294.3 375.4 L296.4 375.4 L298.6 375.4 L300.7 375.4 L302.9 375.4 L305.0 375.4 L307.2 375.4 L309.4 375.4 L311.5 375.4 L313.7 375.4 L315.8 375.4 L318.0 375.4 L320.1 375.4 L322.3 375.4 L324.5 375.4 L326.6 375.4 L328.8 375.4 L330.9 375.4 L333.1 375.4 L335.2 375.4 L337.4 375.4 L339.6 375.4 L341.7 375.4 L343.9 375.4 L346.0 375.4 L348.2 375.4 L350.3 375.4 L352.5 375.4 L354.7 375.4 L356.8 375.4 L359.0 375.4 L361.1 375.4 L363.3 375.4 L365.4 375.4 L367.6 375.4 L369.7 375.4 L371.9 375.4 L374.1 375.4 L376.2 375.4 L378.4 375.4 L380.5 375.4 L382.7 375.4 L384.8 375.4 L387.0 375.4 L389.2 375.4 L391.3 375.4 L393.5 375.4 L395.6 375.4 L397.8 375.4 L399.9 375.4 L402.1 375.4 L404.3 375.4 L406.4 375.4 L408.6 375.4 L410.7 375.4 L412.9 375.4 L415.0 375.4 L417.2 375.4 L419.4 375.4 L421.5 375.4 L423.7 375.4 L425.8 375.4 L428.0 375.4 L430.1 375.4 L432.3 375.4 L434.5 375.4 L436.6 375.4 L438.8 375.4 L440.9 375.4 L443.1 375.4 L445.2 375.4 L447.4 375.4 L449.6 375.4 L451.7 375.4 L453.9 375.4 L456.0 375.4 L458.2 375.4 L460.3 375.4 L462.5 375.4 L464.6 375.4 L466.8 375.4 L469.0 375.4 L471.1 375.4 L473.3 375.4 L475.4 375.4 L477.6 375.4 L479.7 375.4 L481.9 375.4 L484.1 375.4 L486.2 375.4 L488.4 375.4 L490.5 375.4 L492.7 375.4 L494.8 375.4 L497.0 375.4 L499.2 375.4 L501.3 375.4 L503.5 375.4 L505.6 375.4 L507.8 375.4 L509.9 375.4 L512.1 375.4 L514.3 375.4 L516.4 375.4 L518.6 375.4 L520.7 375.4 L522.9 375.4 L525.0 375.4 L527.2 375.4 L529.4 375.4 L531.5 375.4 L533.7 375.4 L535.8 375.4 L538.0 375.4 L540.1 375.4 L542.3 375.4 L544.5 375.4 L546.6 375.4 L548.8 375.4 L550.9 375.4 L553.1 375.4 L555.2 375.4 L557.4 375.4 L559.5 375.4 L561.7 375.4 L563.9 375.4 L566.0 375.4 L568.2 375.4 L570.3 375.4 L572.5 375.4 L574.6 375.4 L576.8 375.4 L579.0 375.4 L581.1 375.4 L583.3 375.4 L585.4 375.4 L587.6 375.4 L589.7 375.4 L591.9 375.4 L594.1 375.4 L596.2 375.4 L598.4 375.4 L600.5 375.4 L602.7 375.4 L604.8 375.4 L607.0 375.4 L609.2 375.4 L611.3 375.4 L613.5 375.4 L615.6 375.4 L617.8 375.4 L619.9 375.4 L622.1 375.4 L624.3 375.4 L626.4 375.4 L628.6 375.4 L630.7 375.4 L632.9 375.4 L635.0 375.4 L637.2 375.4 L639.3 375.4 L641.5 375.4 L643.7 375.4 L645.8 375.4 L648.0 375.4 L650.1 375.4 L652.3 375.4 L654.4 375.4 L656.6 375.4 L658.8 375.4 L660.9 375.4 L663.1 375.4 L665.2 375.4 L667.4 375.4 L669.5 375.4 L671.7 375.4 L673.9 375.4 L676.0 375.4 L678.2 375.4 L680.3 375.4 L682.5 375.4 L684.6 375.4 L686.8 375.4 L689.0 375.4 L691.1 375.4 L693.3 375.4 L695.4 375.4 L697.6 375.4 L699.7 375.4 L701.9 375.4 L704.1 375.4 L706.2 375.4 L708.4 375.4 L710.5 375.4 L712.7 375.4 L714.8 375.4 L717.0 375.4 L719.2 375.4 L721.3 375.4 L723.5 375.4 L725.6 375.4 L727.8 375.4 L729.9 375.4 L732.1 375.4 L734.2 375.4 L736.4 375.4 L738.6 375.4 L740.7 375.4 L742.9 375.4 L745.0 375.4 L747.2 375.4 L749.3 375.4 L751.5 375.4 L753.7 375.4 L755.8 375.4 L758.0 375.4 L760.1 375.4 L762.3 375.4 L764.4 375.4 L766.6 375.4 L768.8 375.4 L770.9 375.4 L773.1 375.4 L775.2 375.4 L777.4 375.4 L779.5 375.4 L781.7 375.4 L783.9 375.4 L786.0 375.4 L788.2 375.4 L790.3 375.4 L792.5 375.4 L794.6 375.4 L796.8 375.4 L799.0 375.4 L801.1 375.4 L803.3 375.4 L805.4 375.4 L807.6 375.4 L809.7 375.4 L811.9 375.4 L814.1 375.4 L816.2 375.4 L818.4 375.4 L820.5 375.4 L822.7 375.4 L824.8 375.4 L827.0 375.4 L829.1 375.4 L831.3 375.4 L833.5 375.4 L835.6 375.4 L837.8 375.4 L839.9 375.4 L842.1 375.4 L844.2 375.4 L846.4 375.4 L848.6 375.4 L850.7 375.4 L852.9 375.4 L855.0 375.4 L857.2 375.4 L859.3 375.4 L861.5 375.4 L863.7 375.4 L865.8 375.4 L868.0 375.4 L870.1 375.4 L872.3 375.4 L874.4 375.4 L876.6 375.4 L878.8 375.4 L880.9 375.4 L883.1 375.4 L885.2 375.4 L887.4 375.4 L889.5 375.4 L891.7 375.4 L893.9 375.4 L896.0 375.4 L898.2 375.4 L900.3 375.4 L902.5 375.4 L904.6 375.4 L906.8 375.4 L908.9 375.4 L911.1 375.4 L913.3 375.4 L915.4 375.4 L917.6 375.4 L919.7 375.4 L921.9 375.4 L924.0 375.4 L926.2 375.4 L928.4 375.4 L930.5 375.4 L932.7 375.4 L934.8 375.4 L937.0 375.4 L939.1 375.4 L941.3 375.4 L943.5 375.4 L945.6 375.4 L947.8 375.4 L949.9 375.4 L952.1 375.4 L954.2 375.4 L956.4 375.4 L958.6 375.4 L960.7 375.4 L962.9 375.4 L965.0 375.4 L967.2 375.4 L969.3 375.4 L971.5 375.4 L973.7 375.4 L975.8 375.4 L978.0 375.4 L980.1 375.4 L982.3 375.4 L984.4 375.4 L986.6 375.4 L988.8 375.4 L990.9 375.4 L993.1 375.4 L995.2 375.4 L997.4 375.4 L999.5 375.4 L1001.7 375.4 L1003.8 375.4 L1006.0 375.4 L1008.2 375.4 L1010.3 375.4 L1012.5 375.4 L1014.6 375.4 L1016.8 375.4 L1018.9 375.4 L1021.1 375.4 L1023.3 375.4 L1025.4 375.4 L1027.6 375.4 L1029.7 375.4 L1031.9 375.4 L1034.0 375.4 L1036.2 375.4 L1038.4 375.4 L1040.5 375.4 L1042.7 375.4 L1044.8 375.4 L1047.0 375.4 L1049.1 375.4 L1051.3 375.4 L1053.5 375.4 L1055.6 375.4 L1057.8 375.4 L1059.9 375.4 L1062.1 375.4 L1064.2 375.4 L1066.4 375.4 L1068.6 375.4 L1070.7 375.4 L1072.9 375.4 L1075.0 375.4 L1077.2 375.4 L1079.3 375.4 L1081.5 375.4 L1083.7 375.4 L1085.8 375.4 L1088.0 375.4 L1090.1 375.4 L1092.3 375.4 L1094.4 375.4 L1096.6 375.4 L1098.7 375.4 L1100.9 375.4 L1103.1 375.4 L1105.2 375.4 L1107.4 375.4 L1109.5 375.4 L1111.7 375.4 L1113.8 375.4 L1116.0 375.4 L1118.2 375.4 L1120.3 375.4 L1122.5 375.4 L1124.6 375.4 L1126.8 375.4 L1127.0 375.4" fill="none" stroke="#7ad0e6" stroke-width="1.6" stroke-linejoin="round"/>
<path d="M52.7 375.4 L54.9 375.4 L57.0 375.4 L59.2 375.4 L61.3 375.4 L63.5 375.4 L65.6 375.4 L67.8 375.4 L70.0 375.4 L72.1 375.4 L74.3 375.4 L76.4 375.4 L78.6 375.4 L80.7 375.4 L82.9 375.4 L85.1 375.4 L87.2 375.4 L89.4 375.4 L91.5 375.4 L93.7 375.4 L95.8 375.4 L98.0 375.4 L100.1 375.4 L102.3 375.4 L104.5 375.4 L106.6 375.4 L108.8 375.4 L110.9 375.4 L113.1 375.4 L115.2 375.4 L117.4 375.4 L119.6 375.4 L121.7 375.4 L123.9 375.4 L126.0 375.4 L128.2 375.4 L130.3 375.4 L132.5 375.4 L134.7 375.4 L136.8 375.4 L139.0 375.4 L141.1 375.4 L143.3 375.4 L145.4 375.4 L147.6 375.4 L149.8 375.4 L151.9 375.4 L154.1 375.4 L156.2 375.4 L158.4 375.4 L160.5 375.4 L162.7 375.4 L164.9 375.4 L167.0 375.4 L169.2 375.4 L171.3 375.4 L173.5 375.4 L175.6 375.4 L177.8 375.4 L180.0 375.4 L182.1 375.4 L184.3 375.4 L186.4 375.4 L188.6 375.4 L190.7 375.4 L192.9 375.4 L195.0 375.4 L197.2 375.4 L199.4 375.4 L201.5 375.4 L203.7 375.4 L205.8 375.4 L208.0 375.4 L210.1 375.4 L212.3 375.4 L214.5 375.4 L216.6 375.4 L218.8 375.4 L220.9 375.4 L223.1 375.4 L225.2 375.4 L227.4 375.4 L229.6 375.4 L231.7 375.4 L233.9 375.4 L236.0 375.4 L238.2 375.4 L240.3 375.4 L242.5 375.4 L244.7 375.4 L246.8 375.4 L249.0 375.4 L251.1 375.4 L253.3 375.4 L255.4 375.4 L257.6 375.4 L259.8 375.4 L261.9 375.4 L264.1 375.4 L266.2 375.4 L268.4 375.4 L270.5 375.4 L272.7 375.4 L274.9 375.4 L277.0 375.4 L279.2 375.4 L281.3 375.4 L283.5 375.4 L285.6 375.4 L287.8 375.4 L289.9 375.4 L292.1 375.4 L294.3 375.4 L296.4 375.4 L298.6 375.4 L300.7 375.4 L302.9 375.4 L305.0 375.4 L307.2 375.4 L309.4 375.4 L311.5 375.4 L313.7 375.4 L315.8 375.4 L318.0 375.4 L320.1 375.4 L322.3 375.4 L324.5 375.4 L326.6 375.4 L328.8 375.4 L330.9 375.4 L333.1 375.4 L335.2 375.4 L337.4 375.4 L339.6 375.4 L341.7 375.4 L343.9 375.4 L346.0 375.4 L348.2 375.4 L350.3 375.4 L352.5 375.4 L354.7 375.4 L356.8 375.4 L359.0 375.4 L361.1 375.4 L363.3 375.4 L365.4 375.4 L367.6 375.4 L369.7 375.4 L371.9 375.4 L374.1 375.4 L376.2 375.4 L378.4 375.4 L380.5 375.4 L382.7 375.4 L384.8 375.4 L387.0 375.4 L389.2 375.4 L391.3 375.4 L393.5 375.4 L395.6 375.4 L397.8 375.4 L399.9 375.4 L402.1 375.4 L404.3 375.4 L406.4 375.4 L408.6 375.4 L410.7 375.4 L412.9 375.4 L415.0 375.4 L417.2 375.4 L419.4 375.4 L421.5 375.4 L423.7 375.4 L425.8 375.4 L428.0 375.4 L430.1 375.4 L432.3 375.4 L434.5 375.4 L436.6 375.4 L438.8 375.4 L440.9 375.4 L443.1 375.4 L445.2 375.4 L447.4 375.4 L449.6 375.4 L451.7 375.4 L453.9 375.4 L456.0 375.4 L458.2 375.4 L460.3 375.4 L462.5 375.4 L464.6 375.4 L466.8 375.4 L469.0 375.4 L471.1 375.4 L473.3 375.4 L475.4 375.4 L477.6 375.4 L479.7 375.4 L481.9 375.4 L484.1 375.4 L486.2 375.4 L488.4 375.4 L490.5 375.4 L492.7 375.4 L494.8 375.4 L497.0 375.4 L499.2 375.4 L501.3 375.4 L503.5 375.4 L505.6 375.4 L507.8 375.4 L509.9 375.4 L512.1 375.4 L514.3 375.4 L516.4 375.4 L518.6 375.4 L520.7 375.4 L522.9 375.4 L525.0 375.4 L527.2 375.4 L529.4 375.4 L531.5 375.4 L533.7 375.4 L535.8 375.4 L538.0 375.4 L540.1 375.4 L542.3 375.4 L544.5 375.4 L546.6 375.4 L548.8 375.4 L550.9 375.4 L553.1 375.4 L555.2 375.4 L557.4 375.4 L559.5 375.4 L561.7 375.4 L563.9 375.4 L566.0 375.4 L568.2 375.4 L570.3 375.4 L572.5 375.4 L574.6 375.4 L576.8 375.4 L579.0 375.4 L581.1 375.4 L583.3 375.4 L585.4 375.4 L587.6 375.4 L589.7 375.4 L591.9 375.4 L594.1 375.4 L596.2 375.4 L598.4 375.4 L600.5 375.4 L602.7 375.4 L604.8 375.4 L607.0 375.4 L609.2 375.4 L611.3 375.4 L613.5 375.4 L615.6 375.4 L617.8 375.4 L619.9 375.4 L622.1 375.4 L624.3 375.4 L626.4 375.4 L628.6 375.4 L630.7 375.4 L632.9 375.4 L635.0 375.4 L637.2 375.4 L639.3 375.4 L641.5 375.4 L643.7 375.4 L645.8 375.4 L648.0 375.4 L650.1 375.4 L652.3 375.4 L654.4 375.4 L656.6 375.4 L658.8 375.4 L660.9 375.4 L663.1 375.4 L665.2 375.4 L667.4 375.4 L669.5 375.4 L671.7 375.4 L673.9 375.4 L676.0 375.4 L678.2 375.4 L680.3 375.4 L682.5 375.4 L684.6 375.4 L686.8 375.4 L689.0 375.4 L691.1 375.4 L693.3 375.4 L695.4 375.4 L697.6 375.4 L699.7 375.4 L701.9 375.4 L704.1 375.4 L706.2 375.4 L708.4 375.4 L710.5 375.4 L712.7 375.4 L714.8 375.4 L717.0 375.4 L719.2 375.4 L721.3 375.4 L723.5 375.4 L725.6 375.4 L727.8 375.4 L729.9 375.4 L732.1 375.4 L734.2 375.4 L736.4 375.4 L738.6 375.4 L740.7 375.4 L742.9 375.4 L745.0 375.4 L747.2 375.4 L749.3 375.4 L751.5 375.4 L753.7 375.4 L755.8 375.4 L758.0 375.4 L760.1 375.4 L762.3 375.4 L764.4 375.4 L766.6 375.4 L768.8 375.4 L770.9 375.4 L773.1 375.4 L775.2 375.4 L777.4 375.4 L779.5 375.4 L781.7 375.4 L783.9 375.4 L786.0 375.4 L788.2 375.4 L790.3 375.4 L792.5 375.4 L794.6 375.4 L796.8 375.4 L799.0 375.4 L801.1 375.4 L803.3 375.4 L805.4 375.4 L807.6 375.4 L809.7 375.4 L811.9 375.4 L814.1 375.4 L816.2 375.4 L818.4 375.4 L820.5 375.4 L822.7 375.4 L824.8 375.4 L827.0 375.4 L829.1 375.4 L831.3 375.4 L833.5 375.4 L835.6 375.4 L837.8 375.4 L839.9 375.4 L842.1 375.4 L844.2 375.4 L846.4 375.4 L848.6 375.4 L850.7 375.4 L852.9 375.4 L855.0 375.4 L857.2 375.4 L859.3 375.4 L861.5 375.4 L863.7 375.4 L865.8 375.4 L868.0 375.4 L870.1 375.4 L872.3 375.4 L874.4 375.4 L876.6 375.4 L878.8 375.4 L880.9 375.4 L883.1 375.4 L885.2 375.4 L887.4 375.4 L889.5 375.4 L891.7 375.4 L893.9 375.4 L896.0 375.4 L898.2 375.4 L900.3 375.4 L902.5 375.4 L904.6 375.4 L906.8 375.4 L908.9 375.4 L911.1 375.4 L913.3 375.4 L915.4 375.4 L917.6 375.4 L919.7 375.4 L921.9 375.4 L924.0 375.4 L926.2 375.4 L928.4 375.4 L930.5 375.4 L932.7 375.4 L934.8 375.4 L937.0 375.4 L939.1 375.4 L941.3 375.4 L943.5 375.4 L945.6 375.4 L947.8 375.4 L949.9 375.4 L952.1 375.4 L954.2 375.4 L956.4 375.4 L958.6 375.4 L960.7 375.4 L962.9 375.4 L965.0 375.4 L967.2 375.4 L969.3 375.4 L971.5 375.4 L973.7 375.4 L975.8 375.4 L978.0 375.4 L980.1 375.4 L982.3 375.4 L984.4 375.4 L986.6 375.4 L988.8 375.4 L990.9 375.4 L993.1 375.4 L995.2 375.4 L997.4 375.4 L999.5 375.4 L1001.7 375.4 L1003.8 375.4 L1006.0 375.4 L1008.2 375.4 L1010.3 375.4 L1012.5 375.4 L1014.6 375.4 L1016.8 375.4 L1018.9 375.4 L1021.1 375.4 L1023.3 375.4 L1025.4 375.4 L1027.6 375.4 L1029.7 375.4 L1031.9 375.4 L1034.0 375.4 L1036.2 375.4 L1038.4 375.4 L1040.5 375.4 L1042.7 375.4 L1044.8 375.4 L1047.0 375.4 L1049.1 375.4 L1051.3 375.4 L1053.5 375.4 L1055.6 375.4 L1057.8 375.4 L1059.9 375.4 L1062.1 375.4 L1064.2 375.4 L1066.4 375.4 L1068.6 375.4 L1070.7 375.4 L1072.9 375.4 L1075.0 375.4 L1077.2 375.4 L1079.3 375.4 L1081.5 375.4 L1083.7 375.4 L1085.8 375.4 L1088.0 375.4 L1090.1 375.4 L1092.3 375.4 L1094.4 375.4 L1096.6 375.4 L1098.7 375.4 L1100.9 375.4 L1103.1 375.4 L1105.2 375.4 L1107.4 375.4 L1109.5 375.4 L1111.7 375.4 L1113.8 375.4 L1116.0 375.4 L1118.2 375.4 L1120.3 375.4 L1122.5 375.4 L1124.6 375.4 L1126.8 375.4 L1127.0 375.4" fill="none" stroke="#5cb5d0" stroke-width="1.6" stroke-linejoin="round"/>
<rect x="525.3" y="357.0" width="1" height="60.7" fill="url(#vl)"/>
<rect x="508.3" y="346.6" width="34.0" height="11.4" rx="3" fill="url(#tg)"/>
<path d="M38.5 357.4 H67.7 a2.5 2.5 0 0 1 2.5 2.5 V367.1 a2.5 2.5 0 0 1 -2.5 2.5 H55.0 L52.8 372.8 L50.599999999999994 369.6 H38.5 a2.5 2.5 0 0 1 -2.5 -2.5 V359.9 a2.5 2.5 0 0 1 2.5 -2.5 Z" fill="#1b5f97"/>
</svg>
<div style="position:absolute;left:1140px;top:350px;width:28.6px;height:16px;background:linear-gradient(#fdfdfd,#efefef);border:1px solid #b9b9b9;border-radius:2px;box-sizing:border-box;"></div>
<div style="position:absolute;left:1140px;top:376.4px;width:5.6px;height:8px;background:#1c5f9a;"></div>
<div style="position:absolute;left:1140px;top:391px;width:5.6px;height:8px;background:#3db9dc;"></div>
<svg width="1251" height="770" viewBox="0 0 1251 770">
<path d="M52.7 493.4 H1127 M52.7 478.6 H1127 M52.7 463.8 H1127" stroke="#f3f3f3" stroke-width="1" fill="none"/>
<path d="M52.2 447.0 V509.5" stroke="#dcdcdc" stroke-width="1" fill="none"/>
<path d="M52.2 509.7 H1127" stroke="#e4e4e4" stroke-width="1.4" fill="none"/>
<path d="M52.7 502.4 L54.9 503.2 L57.0 503.5 L59.2 502.1 L61.3 501.5 L63.5 502.1 L65.6 500.8 L67.8 500.5 L70.0 501.5 L72.1 501.5 L74.3 501.5 L76.4 502.4 L78.6 502.2 L80.7 502.0 L82.9 501.8 L85.1 500.2 L87.2 503.2 L89.4 500.0 L91.5 502.3 L93.7 501.3 L95.8 501.3 L98.0 502.8 L100.1 501.5 L102.3 500.8 L104.5 501.8 L106.6 500.3 L108.8 502.7 L110.9 502.0 L113.1 501.4 L115.2 503.0 L117.4 502.5 L119.6 501.2 L121.7 501.7 L123.9 500.7 L126.0 502.6 L128.2 500.9 L130.3 500.2 L132.5 500.4 L134.7 500.3 L136.8 501.6 L139.0 501.1 L141.1 502.0 L143.3 502.4 L145.4 501.8 L147.6 503.3 L149.8 502.7 L151.9 502.3 L154.1 501.8 L156.2 503.3 L158.4 501.0 L160.5 500.7 L162.7 502.3 L164.9 502.2 L167.0 501.2 L169.2 502.5 L171.3 500.2 L173.5 500.7 L175.6 501.0 L177.8 500.6 L180.0 502.1 L182.1 500.7 L184.3 500.6 L186.4 502.8 L188.6 501.1 L190.7 499.6 L192.9 500.3 L195.0 501.1 L197.2 500.3 L199.4 499.2 L201.5 501.4 L203.7 502.0 L205.8 501.0 L208.0 502.9 L210.1 502.0 L212.3 502.5 L214.5 501.9 L216.6 502.1 L218.8 499.7 L220.9 500.8 L223.1 499.6 L225.2 501.2 L227.4 501.4 L229.6 501.1 L231.7 501.6 L233.9 502.3 L236.0 502.3 L238.2 501.7 L240.3 502.2 L242.5 501.3 L244.7 501.0 L246.8 500.4 L249.0 500.6 L251.1 500.8 L253.3 500.1 L255.4 501.5 L257.6 502.0 L259.8 500.2 L261.9 499.8 L264.1 500.9 L266.2 499.4 L268.4 500.8 L270.5 502.1 L272.7 502.7 L274.9 501.5 L277.0 502.8 L279.2 501.4 L281.3 503.1 L283.5 501.5 L285.6 502.7 L287.8 501.4 L289.9 501.4 L292.1 501.7 L294.3 502.7 L296.4 501.1 L298.6 501.7 L300.7 502.3 L302.9 502.4 L305.0 500.8 L307.2 501.9 L309.4 502.8 L311.5 502.1 L313.7 501.6 L315.8 500.3 L318.0 501.3 L320.1 501.6 L322.3 502.2 L324.5 501.8 L326.6 499.4 L328.8 501.1 L330.9 501.1 L333.1 501.1 L335.2 500.5 L337.4 501.2 L339.6 501.8 L341.7 502.7 L343.9 501.7 L346.0 500.8 L348.2 501.4 L350.3 500.1 L352.5 500.5 L354.7 501.4 L356.8 501.9 L359.0 499.7 L361.1 501.5 L363.3 501.0 L365.4 502.6 L367.6 501.7 L369.7 502.4 L371.9 501.2 L374.1 501.8 L376.2 502.1 L378.4 500.9 L380.5 499.6 L382.7 502.8 L384.8 501.4 L387.0 501.7 L389.2 500.1 L391.3 501.2 L393.5 503.7 L395.6 500.7 L397.8 501.1 L399.9 502.2 L402.1 501.0 L404.3 501.2 L406.4 501.3 L408.6 501.7 L410.7 501.7 L412.9 500.8 L415.0 500.9 L417.2 501.8 L419.4 500.7 L421.5 500.1 L423.7 502.5 L425.8 503.2 L428.0 504.0 L430.1 503.1 L432.3 503.4 L434.5 502.5 L436.6 501.0 L438.8 500.1 L440.9 501.1 L443.1 499.7 L445.2 499.9 L447.4 502.8 L449.6 503.3 L451.7 502.9 L453.9 502.5 L456.0 500.4 L458.2 501.4 L460.3 500.7 L462.5 500.7 L464.6 500.5 L466.8 501.4 L469.0 500.9 L471.1 501.1 L473.3 502.3 L475.4 500.8 L477.6 501.9 L479.7 502.0 L481.9 500.5 L484.1 501.1 L486.2 499.8 L488.4 502.2 L490.5 502.5 L492.7 501.2 L494.8 501.8 L497.0 500.8 L499.2 502.0 L501.3 501.1 L503.5 501.7 L505.6 503.7 L507.8 503.0 L509.9 501.2 L512.1 501.4 L514.3 502.2 L516.4 501.4 L518.6 502.2 L520.7 501.9 L522.9 501.9 L525.0 504.7 L527.2 502.9 L529.4 502.3 L531.5 501.8 L533.7 501.5 L535.8 500.8 L538.0 501.1 L540.1 502.9 L542.3 500.6 L544.5 501.8 L546.6 502.7 L548.8 501.7 L550.9 503.0 L553.1 502.4 L555.2 503.6 L557.4 500.0 L559.5 501.7 L561.7 499.8 L563.9 501.6 L566.0 501.8 L568.2 501.3 L570.3 503.2 L572.5 501.9 L574.6 502.7 L576.8 499.9 L579.0 500.0 L581.1 502.0 L583.3 501.3 L585.4 502.1 L587.6 501.4 L589.7 503.2 L591.9 501.8 L594.1 502.6 L596.2 501.5 L598.4 501.0 L600.5 502.4 L602.7 501.9 L604.8 502.4 L607.0 502.4 L609.2 501.7 L611.3 504.1 L613.5 503.8 L615.6 501.5 L617.8 502.0 L619.9 501.5 L622.1 500.8 L624.3 501.9 L626.4 500.5 L628.6 501.7 L630.7 502.1 L632.9 503.0 L635.0 500.8 L637.2 500.7 L639.3 501.3 L641.5 501.5 L643.7 500.0 L645.8 501.6 L648.0 501.8 L650.1 501.8 L652.3 501.3 L654.4 500.8 L656.6 499.9 L658.8 501.6 L660.9 499.4 L663.1 501.2 L665.2 501.4 L667.4 501.2 L669.5 501.4 L671.7 500.7 L673.9 501.5 L676.0 501.0 L678.2 501.9 L680.3 501.3 L682.5 502.6 L684.6 503.3 L686.8 500.4 L689.0 503.3 L691.1 501.3 L693.3 501.5 L695.4 499.8 L697.6 499.7 L699.7 501.1 L701.9 502.5 L704.1 501.0 L706.2 503.0 L708.4 501.6 L710.5 502.0 L712.7 500.3 L714.8 500.9 L717.0 500.1 L719.2 501.5 L721.3 500.8 L723.5 500.6 L725.6 501.2 L727.8 503.4 L729.9 501.3 L732.1 499.8 L734.2 500.7 L736.4 499.8 L738.6 501.4 L740.7 503.6 L742.9 502.2 L745.0 502.3 L747.2 500.7 L749.3 503.0 L751.5 501.8 L753.7 500.6 L755.8 502.6 L758.0 501.3 L760.1 501.5 L762.3 502.4 L764.4 502.9 L766.6 502.8 L768.8 502.2 L770.9 504.3 L773.1 500.6 L775.2 503.8 L777.4 500.9 L779.5 501.7 L781.7 500.8 L783.9 501.7 L786.0 501.7 L788.2 502.2 L790.3 500.6 L792.5 501.7 L794.6 501.8 L796.8 503.0 L799.0 501.9 L801.1 501.0 L803.3 502.5 L805.4 502.4 L807.6 501.0 L809.7 502.9 L811.9 500.4 L814.1 500.9 L816.2 502.5 L818.4 502.5 L820.5 502.7 L822.7 502.5 L824.8 503.6 L827.0 502.7 L829.1 502.1 L831.3 502.3 L833.5 503.7 L835.6 503.4 L837.8 501.0 L839.9 502.9 L842.1 501.6 L844.2 502.3 L846.4 503.7 L848.6 501.6 L850.7 503.7 L852.9 502.3 L855.0 502.3 L857.2 501.7 L859.3 501.9 L861.5 502.4 L863.7 502.0 L865.8 501.8 L868.0 502.3 L870.1 500.7 L872.3 501.3 L874.4 500.8 L876.6 500.8 L878.8 501.7 L880.9 501.7 L883.1 501.7 L885.2 502.3 L887.4 503.5 L889.5 501.6 L891.7 502.5 L893.9 501.2 L896.0 500.4 L898.2 502.7 L900.3 503.0 L902.5 501.5 L904.6 501.7 L906.8 501.8 L908.9 501.3 L911.1 502.0 L913.3 501.0 L915.4 501.9 L917.6 503.3 L919.7 502.4 L921.9 502.5 L924.0 501.2 L926.2 500.9 L928.4 501.2 L930.5 503.3 L932.7 502.6 L934.8 502.8 L937.0 502.9 L939.1 501.4 L941.3 501.4 L943.5 501.3 L945.6 502.3 L947.8 503.5 L949.9 501.5 L952.1 502.4 L954.2 503.4 L956.4 502.4 L958.6 501.7 L960.7 502.1 L962.9 502.4 L965.0 502.6 L967.2 501.2 L969.3 502.6 L971.5 500.7 L973.7 503.0 L975.8 500.6 L978.0 501.1 L980.1 500.9 L982.3 501.6 L984.4 500.0 L986.6 500.9 L988.8 500.7 L990.9 501.1 L993.1 501.7 L995.2 502.5 L997.4 502.6 L999.5 504.0 L1001.7 502.0 L1003.8 502.5 L1006.0 500.5 L1008.2 501.7 L1010.3 501.1 L1012.5 502.3 L1014.6 503.1 L1016.8 500.9 L1018.9 501.2 L1021.1 501.9 L1023.3 501.7 L1025.4 502.5 L1027.6 502.0 L1029.7 500.9 L1031.9 502.1 L1034.0 499.8 L1036.2 500.3 L1038.4 499.4 L1040.5 500.4 L1042.7 501.2 L1044.8 500.0 L1047.0 500.3 L1049.1 500.1 L1051.3 501.8 L1053.5 500.9 L1055.6 500.8 L1057.8 501.2 L1059.9 501.8 L1062.1 501.6 L1064.2 501.1 L1066.4 502.4 L1068.6 503.5 L1070.7 501.3 L1072.9 501.9 L1075.0 500.9 L1077.2 501.9 L1079.3 500.3 L1081.5 502.4 L1083.7 501.2 L1085.8 501.9 L1088.0 502.1 L1090.1 501.7 L1092.3 501.3 L1094.4 502.6 L1096.6 500.3 L1098.7 502.0 L1100.9 502.7 L1103.1 501.3 L1105.2 503.0 L1107.4 503.0 L1109.5 503.3 L1111.7 502.9 L1113.8 502.5 L1116.0 500.5 L1118.2 503.2 L1120.3 501.0 L1122.5 501.8 L1124.6 502.3 L1126.8 501.3 L1127.0 501.6" fill="none" stroke="#7ad0e6" stroke-width="1.1" stroke-linejoin="round"/>
<path d="M52.7 489.3 L54.9 479.4 L57.0 489.3 L59.2 479.4 L61.3 489.3 L63.5 479.4 L65.6 469.5 L67.8 479.4 L70.0 489.3 L72.1 479.4 L74.3 469.5 L76.4 479.4 L78.6 489.3 L80.7 479.4 L82.9 489.3 L85.1 489.3 L87.2 489.3 L89.4 479.4 L91.5 479.4 L93.7 479.4 L95.8 479.4 L98.0 479.4 L100.1 479.4 L102.3 489.3 L104.5 479.4 L106.6 489.3 L108.8 479.4 L110.9 489.3 L113.1 469.5 L115.2 489.3 L117.4 479.4 L119.6 489.3 L121.7 489.3 L123.9 489.3 L126.0 489.3 L128.2 489.3 L130.3 469.5 L132.5 489.3 L134.7 489.3 L136.8 489.3 L139.0 489.3 L141.1 479.4 L143.3 489.3 L145.4 479.4 L147.6 479.4 L149.8 479.4 L151.9 479.4 L154.1 479.4 L156.2 479.4 L158.4 489.3 L160.5 479.4 L162.7 489.3 L164.9 479.4 L167.0 489.3 L169.2 489.3 L171.3 489.3 L173.5 489.3 L175.6 489.3 L177.8 489.3 L180.0 479.4 L182.1 489.3 L184.3 489.3 L186.4 489.3 L188.6 489.3 L190.7 489.3 L192.9 489.3 L195.0 479.4 L197.2 489.3 L199.4 479.4 L201.5 489.3 L203.7 479.4 L205.8 489.3 L208.0 469.5 L210.1 489.3 L212.3 479.4 L214.5 489.3 L216.6 479.4 L218.8 489.3 L220.9 489.3 L223.1 489.3 L225.2 489.3 L227.4 489.3 L229.6 489.3 L231.7 479.4 L233.9 489.3 L236.0 489.3 L238.2 489.3 L240.3 489.3 L242.5 489.3 L244.7 489.3 L246.8 489.3 L249.0 479.4 L251.1 479.4 L253.3 479.4 L255.4 489.3 L257.6 489.3 L259.8 489.3 L261.9 489.3 L264.1 489.3 L266.2 489.3 L268.4 479.4 L270.5 489.3 L272.7 489.3 L274.9 489.3 L277.0 489.3 L279.2 489.3 L281.3 489.3 L283.5 489.3 L285.6 489.3 L287.8 489.3 L289.9 489.3 L292.1 479.4 L294.3 489.3 L296.4 479.4 L298.6 489.3 L300.7 479.4 L302.9 489.3 L305.0 489.3 L307.2 489.3 L309.4 489.3 L311.5 479.4 L313.7 489.3 L315.8 479.4 L318.0 479.4 L320.1 479.4 L322.3 479.4 L324.5 479.4 L326.6 479.4 L328.8 489.3 L330.9 479.4 L333.1 489.3 L335.2 489.3 L337.4 489.3 L339.6 489.3 L341.7 489.3 L343.9 489.3 L346.0 489.3 L348.2 489.3 L350.3 489.3 L352.5 489.3 L354.7 479.4 L356.8 489.3 L359.0 479.4 L361.1 489.3 L363.3 489.3 L365.4 489.3 L367.6 489.3 L369.7 489.3 L371.9 489.3 L374.1 489.3 L376.2 479.4 L378.4 489.3 L380.5 479.4 L382.7 479.4 L384.8 479.4 L387.0 489.3 L389.2 479.4 L391.3 489.3 L393.5 489.3 L395.6 489.3 L397.8 479.4 L399.9 489.3 L402.1 469.5 L404.3 489.3 L406.4 479.4 L408.6 489.3 L410.7 479.4 L412.9 489.3 L415.0 479.4 L417.2 479.4 L419.4 479.4 L421.5 479.4 L423.7 479.4 L425.8 479.4 L428.0 489.3 L430.1 479.4 L432.3 479.4 L434.5 479.4 L436.6 489.3 L438.8 489.3 L440.9 489.3 L443.1 489.3 L445.2 489.3 L447.4 479.4 L449.6 489.3 L451.7 479.4 L453.9 489.3 L456.0 479.4 L458.2 489.3 L460.3 479.4 L462.5 489.3 L464.6 479.4 L466.8 489.3 L469.0 479.4 L471.1 489.3 L473.3 479.4 L475.4 489.3 L477.6 489.3 L479.7 489.3 L481.9 489.3 L484.1 489.3 L486.2 479.4 L488.4 489.3 L490.5 479.4 L492.7 489.3 L494.8 479.4 L497.0 489.3 L499.2 479.4 L501.3 489.3 L503.5 479.4 L505.6 489.3 L507.8 479.4 L509.9 489.3 L512.1 469.5 L514.3 489.3 L516.4 479.4 L518.6 489.3 L520.7 489.3 L522.9 489.3 L525.0 489.3 L527.2 489.3 L529.4 479.4 L531.5 489.3 L533.7 479.4 L535.8 489.3 L538.0 479.4 L540.1 489.3 L542.3 469.5 L544.5 489.3 L546.6 479.4 L548.8 479.4 L550.9 479.4 L553.1 479.4 L555.2 479.4 L557.4 489.3 L559.5 479.4 L561.7 489.3 L563.9 479.4 L566.0 489.3 L568.2 479.4 L570.3 479.4 L572.5 479.4 L574.6 479.4 L576.8 479.4 L579.0 479.4 L581.1 489.3 L583.3 479.4 L585.4 489.3 L587.6 479.4 L589.7 489.3 L591.9 479.4 L594.1 489.3 L596.2 479.4 L598.4 489.3 L600.5 469.5 L602.7 489.3 L604.8 479.4 L607.0 489.3 L609.2 479.4 L611.3 489.3 L613.5 479.4 L615.6 479.4 L617.8 479.4 L619.9 489.3 L622.1 479.4 L624.3 489.3 L626.4 469.5 L628.6 489.3 L630.7 489.3 L632.9 489.3 L635.0 489.3 L637.2 489.3 L639.3 489.3 L641.5 489.3 L643.7 489.3 L645.8 489.3 L648.0 479.4 L650.1 489.3 L652.3 489.3 L654.4 489.3 L656.6 489.3 L658.8 489.3 L660.9 489.3 L663.1 479.4 L665.2 489.3 L667.4 479.4 L669.5 489.3 L671.7 479.4 L673.9 489.3 L676.0 479.4 L678.2 489.3 L680.3 469.5 L682.5 489.3 L684.6 469.5 L686.8 489.3 L689.0 479.4 L691.1 489.3 L693.3 479.4 L695.4 489.3 L697.6 469.5 L699.7 489.3 L701.9 479.4 L704.1 489.3 L706.2 479.4 L708.4 489.3 L710.5 489.3 L712.7 489.3 L714.8 489.3 L717.0 489.3 L719.2 489.3 L721.3 489.3 L723.5 479.4 L725.6 489.3 L727.8 489.3 L729.9 489.3 L732.1 489.3 L734.2 489.3 L736.4 479.4 L738.6 479.4 L740.7 479.4 L742.9 489.3 L745.0 479.4 L747.2 479.4 L749.3 479.4 L751.5 489.3 L753.7 479.4 L755.8 489.3 L758.0 489.3 L760.1 489.3 L762.3 489.3 L764.4 489.3 L766.6 489.3 L768.8 489.3 L770.9 479.4 L773.1 489.3 L775.2 479.4 L777.4 489.3 L779.5 489.3 L781.7 489.3 L783.9 489.3 L786.0 489.3 L788.2 479.4 L790.3 489.3 L792.5 489.3 L794.6 489.3 L796.8 489.3 L799.0 489.3 L801.1 489.3 L803.3 479.4 L805.4 479.4 L807.6 479.4 L809.7 479.4 L811.9 479.4 L814.1 489.3 L816.2 489.3 L818.4 489.3 L820.5 489.3 L822.7 479.4 L824.8 479.4 L827.0 479.4 L829.1 489.3 L831.3 479.4 L833.5 479.4 L835.6 479.4 L837.8 479.4 L839.9 479.4 L842.1 479.4 L844.2 489.3 L846.4 479.4 L848.6 489.3 L850.7 469.5 L852.9 489.3 L855.0 489.3 L857.2 489.3 L859.3 499.1 L861.5 489.3 L863.7 489.3 L865.8 489.3 L868.0 489.3 L870.1 489.3 L872.3 489.3 L874.4 489.3 L876.6 479.4 L878.8 479.4 L880.9 479.4 L883.1 479.4 L885.2 489.3 L887.4 479.4 L889.5 489.3 L891.7 479.4 L893.9 479.4 L896.0 479.4 L898.2 479.4 L900.3 489.3 L902.5 479.4 L904.6 489.3 L906.8 479.4 L908.9 489.3 L911.1 469.5 L913.3 489.3 L915.4 479.4 L917.6 489.3 L919.7 489.3 L921.9 489.3 L924.0 489.3 L926.2 489.3 L928.4 489.3 L930.5 489.3 L932.7 479.4 L934.8 489.3 L937.0 479.4 L939.1 489.3 L941.3 479.4 L943.5 479.4 L945.6 479.4 L947.8 489.3 L949.9 479.4 L952.1 489.3 L954.2 479.4 L956.4 489.3 L958.6 479.4 L960.7 489.3 L962.9 479.4 L965.0 479.4 L967.2 479.4 L969.3 479.4 L971.5 479.4 L973.7 479.4 L975.8 489.3 L978.0 479.4 L980.1 479.4 L982.3 479.4 L984.4 479.4 L986.6 479.4 L988.8 489.3 L990.9 479.4 L993.1 489.3 L995.2 479.4 L997.4 489.3 L999.5 489.3 L1001.7 489.3 L1003.8 489.3 L1006.0 489.3 L1008.2 489.3 L1010.3 489.3 L1012.5 489.3 L1014.6 479.4 L1016.8 489.3 L1018.9 489.3 L1021.1 489.3 L1023.3 489.3 L1025.4 489.3 L1027.6 489.3 L1029.7 489.3 L1031.9 489.3 L1034.0 479.4 L1036.2 489.3 L1038.4 479.4 L1040.5 489.3 L1042.7 489.3 L1044.8 489.3 L1047.0 489.3 L1049.1 489.3 L1051.3 489.3 L1053.5 489.3 L1055.6 489.3 L1057.8 479.4 L1059.9 489.3 L1062.1 489.3 L1064.2 489.3 L1066.4 489.3 L1068.6 489.3 L1070.7 479.4 L1072.9 489.3 L1075.0 489.3 L1077.2 489.3 L1079.3 489.3 L1081.5 489.3 L1083.7 479.4 L1085.8 489.3 L1088.0 469.5 L1090.1 489.3 L1092.3 479.4 L1094.4 479.4 L1096.6 479.4 L1098.7 489.3 L1100.9 479.4 L1103.1 489.3 L1105.2 479.4 L1107.4 489.3 L1109.5 479.4 L1111.7 489.3 L1113.8 479.4 L1116.0 489.3 L1118.2 489.3 L1120.3 489.3 L1122.5 489.3 L1124.6 489.3 L1126.8 489.3 L1127.0 479.4" fill="none" stroke="#5590b9" stroke-width="1.1" stroke-linejoin="round"/>
<rect x="525.3" y="450.5" width="1" height="60.0" fill="url(#vl)"/>
<rect x="514.7" y="440" width="21.3" height="11.5" rx="3" fill="url(#tg)"/>
<path d="M57.1 452 H73.5 a2.5 2.5 0 0 1 2.5 2.5 V461.4 a2.5 2.5 0 0 1 -2.5 2.5 H67.7 L65.5 467.09999999999997 L63.3 463.9 H57.1 a2.5 2.5 0 0 1 -2.5 -2.5 V454.5 a2.5 2.5 0 0 1 2.5 -2.5 Z" fill="#1b5f97"/>
</svg>
<div style="position:absolute;left:1140px;top:443px;width:28.6px;height:16px;background:linear-gradient(#fdfdfd,#efefef);border:1px solid #b9b9b9;border-radius:2px;box-sizing:border-box;"></div>
<div style="position:absolute;left:1140px;top:469.4px;width:5.6px;height:8px;background:#1c5f9a;"></div>
<div style="position:absolute;left:1140px;top:484px;width:5.6px;height:8px;background:#3db9dc;"></div>
<svg width="1251" height="770" viewBox="0 0 1251 770">
<path d="M52.7 581.0 H1127 M52.7 561.1 H1127" stroke="#f3f3f3" stroke-width="1" fill="none"/>
<path d="M52.2 539.6 V602.1" stroke="#dcdcdc" stroke-width="1" fill="none"/>
<path d="M52.2 602.3 H1127" stroke="#e4e4e4" stroke-width="1.4" fill="none"/>
<path d="M52.7 601.0 L54.9 600.9 L57.0 601.1 L59.2 601.1 L61.3 601.1 L63.5 601.1 L65.6 599.8 L67.8 601.0 L70.0 601.0 L72.1 601.1 L74.3 601.0 L76.4 601.0 L78.6 601.0 L80.7 601.0 L82.9 601.1 L85.1 601.0 L87.2 599.8 L89.4 601.0 L91.5 601.1 L93.7 601.0 L95.8 601.1 L98.0 600.9 L100.1 600.9 L102.3 601.0 L104.5 601.0 L106.6 601.0 L108.8 599.8 L110.9 601.0 L113.1 601.0 L115.2 601.1 L117.4 601.1 L119.6 601.1 L121.7 601.0 L123.9 601.1 L126.0 601.0 L128.2 600.9 L130.3 599.8 L132.5 601.1 L134.7 601.1 L136.8 600.8 L139.0 600.9 L141.1 601.1 L143.3 601.1 L145.4 601.1 L147.6 601.1 L149.8 601.0 L151.9 599.8 L154.1 601.1 L156.2 601.0 L158.4 600.9 L160.5 601.1 L162.7 600.9 L164.9 601.0 L167.0 601.1 L169.2 601.0 L171.3 601.1 L173.5 599.8 L175.6 601.0 L177.8 601.0 L180.0 600.9 L182.1 601.0 L184.3 600.9 L186.4 600.8 L188.6 601.0 L190.7 601.0 L192.9 601.1 L195.0 599.8 L197.2 601.1 L199.4 601.0 L201.5 601.0 L203.7 601.1 L205.8 601.1 L208.0 601.1 L210.1 601.1 L212.3 600.9 L214.5 601.1 L216.6 599.8 L218.8 601.0 L220.9 601.1 L223.1 601.1 L225.2 601.0 L227.4 601.0 L229.6 600.9 L231.7 600.9 L233.9 601.1 L236.0 601.0 L238.2 599.8 L240.3 601.0 L242.5 601.0 L244.7 600.9 L246.8 601.1 L249.0 601.0 L251.1 601.0 L253.3 601.0 L255.4 601.1 L257.6 601.0 L259.8 599.8 L261.9 601.1 L264.1 601.0 L266.2 601.0 L268.4 601.0 L270.5 601.1 L272.7 601.0 L274.9 601.0 L277.0 601.1 L279.2 601.0 L281.3 599.8 L283.5 601.0 L285.6 601.1 L287.8 601.1 L289.9 601.1 L292.1 601.0 L294.3 600.9 L296.4 601.1 L298.6 601.0 L300.7 600.9 L302.9 599.8 L305.0 601.0 L307.2 600.9 L309.4 601.0 L311.5 600.9 L313.7 600.8 L315.8 601.1 L318.0 601.0 L320.1 601.0 L322.3 601.0 L324.5 583.7 L326.6 575.8 L328.8 575.8 L330.9 575.8 L333.1 575.8 L335.2 575.8 L337.4 600.9 L339.6 601.1 L341.7 601.1 L343.9 601.0 L346.0 599.8 L348.2 601.1 L350.3 601.0 L352.5 601.1 L354.7 600.9 L356.8 601.0 L359.0 601.0 L361.1 601.1 L363.3 601.0 L365.4 600.9 L367.6 599.8 L369.7 601.1 L371.9 601.1 L374.1 600.9 L376.2 600.8 L378.4 600.9 L380.5 600.9 L382.7 600.9 L384.8 601.1 L387.0 601.1 L389.2 599.8 L391.3 601.0 L393.5 600.9 L395.6 600.9 L397.8 601.0 L399.9 600.9 L402.1 600.8 L404.3 600.9 L406.4 601.1 L408.6 601.0 L410.7 599.8 L412.9 601.0 L415.0 601.1 L417.2 601.0 L419.4 601.1 L421.5 601.1 L423.7 601.0 L425.8 601.1 L428.0 601.1 L430.1 601.0 L432.3 599.8 L434.5 600.8 L436.6 600.8 L438.8 600.9 L440.9 601.0 L443.1 601.0 L445.2 601.0 L447.4 600.8 L449.6 600.9 L451.7 601.1 L453.9 599.8 L456.0 601.1 L458.2 601.1 L460.3 601.1 L462.5 601.1 L464.6 601.1 L466.8 601.1 L469.0 601.1 L471.1 601.1 L473.3 601.1 L475.4 599.8 L477.6 601.0 L479.7 601.0 L481.9 600.9 L484.1 601.0 L486.2 601.0 L488.4 601.0 L490.5 601.0 L492.7 600.9 L494.8 601.1 L497.0 599.8 L499.2 601.0 L501.3 601.0 L503.5 600.9 L505.6 601.1 L507.8 601.1 L509.9 601.0 L512.1 601.1 L514.3 601.0 L516.4 601.1 L518.6 599.8 L520.7 601.0 L522.9 601.1 L525.0 601.1 L527.2 601.0 L529.4 601.0 L531.5 601.1 L533.7 601.1 L535.8 601.1 L538.0 601.0 L540.1 599.8 L542.3 601.0 L544.5 601.0 L546.6 600.9 L548.8 601.0 L550.9 601.0 L553.1 601.1 L555.2 601.1 L557.4 601.1 L559.5 601.0 L561.7 599.8 L563.9 601.0 L566.0 601.1 L568.2 600.9 L570.3 601.0 L572.5 601.1 L574.6 601.1 L576.8 601.1 L579.0 601.1 L581.1 601.0 L583.3 599.8 L585.4 601.0 L587.6 601.0 L589.7 601.1 L591.9 601.0 L594.1 601.0 L596.2 601.0 L598.4 601.0 L600.5 601.1 L602.7 601.1 L604.8 599.8 L607.0 600.9 L609.2 601.0 L611.3 601.0 L613.5 601.1 L615.6 601.0 L617.8 601.1 L619.9 601.0 L622.1 601.0 L624.3 601.0 L626.4 599.8 L628.6 601.0 L630.7 600.8 L632.9 601.0 L635.0 601.0 L637.2 600.9 L639.3 600.8 L641.5 600.9 L643.7 601.0 L645.8 600.9 L648.0 599.8 L650.1 601.0 L652.3 601.0 L654.4 601.0 L656.6 601.1 L658.8 600.9 L660.9 601.0 L663.1 601.1 L665.2 601.1 L667.4 601.1 L669.5 599.8 L671.7 601.1 L673.9 601.0 L676.0 601.1 L678.2 601.1 L680.3 601.1 L682.5 601.1 L684.6 601.0 L686.8 600.9 L689.0 601.0 L691.1 599.8 L693.3 601.1 L695.4 601.0 L697.6 600.9 L699.7 601.0 L701.9 601.1 L704.1 601.0 L706.2 601.0 L708.4 601.0 L710.5 600.8 L712.7 599.8 L714.8 601.1 L717.0 601.0 L719.2 601.1 L721.3 601.0 L723.5 601.0 L725.6 601.0 L727.8 600.9 L729.9 601.0 L732.1 601.1 L734.2 599.8 L736.4 601.0 L738.6 601.1 L740.7 601.1 L742.9 601.1 L745.0 600.9 L747.2 600.8 L749.3 601.0 L751.5 601.1 L753.7 600.9 L755.8 599.8 L758.0 601.1 L760.1 601.1 L762.3 601.1 L764.4 601.1 L766.6 601.0 L768.8 601.0 L770.9 601.1 L773.1 601.1 L775.2 601.0 L777.4 601.0 L779.5 601.1 L781.7 601.0 L783.9 601.0 L786.0 601.1 L788.2 601.0 L790.3 601.1 L792.5 600.9 L794.6 601.0 L796.8 601.0 L799.0 599.8 L801.1 600.8 L803.3 601.0 L805.4 600.9 L807.6 601.1 L809.7 601.1 L811.9 601.1 L814.1 601.1 L816.2 601.0 L818.4 600.9 L820.5 599.8 L822.7 600.9 L824.8 601.0 L827.0 601.1 L829.1 601.1 L831.3 601.0 L833.5 601.1 L835.6 601.0 L837.8 601.1 L839.9 601.1 L842.1 599.8 L844.2 601.0 L846.4 601.0 L848.6 601.0 L850.7 601.0 L852.9 601.1 L855.0 601.0 L857.2 601.1 L859.3 600.9 L861.5 600.9 L863.7 599.8 L865.8 601.1 L868.0 601.1 L870.1 601.1 L872.3 601.0 L874.4 600.8 L876.6 601.1 L878.8 601.0 L880.9 601.1 L883.1 601.0 L885.2 599.8 L887.4 600.9 L889.5 601.0 L891.7 601.0 L893.9 601.1 L896.0 600.9 L898.2 601.1 L900.3 601.1 L902.5 601.0 L904.6 600.8 L906.8 599.8 L908.9 601.1 L911.1 601.0 L913.3 600.9 L915.4 601.0 L917.6 601.1 L919.7 601.1 L921.9 601.0 L924.0 601.1 L926.2 601.1 L928.4 599.8 L930.5 600.9 L932.7 601.1 L934.8 601.1 L937.0 601.1 L939.1 601.0 L941.3 601.0 L943.5 601.1 L945.6 600.9 L947.8 601.0 L949.9 599.8 L952.1 601.0 L954.2 601.0 L956.4 601.0 L958.6 601.0 L960.7 600.9 L962.9 601.0 L965.0 601.0 L967.2 601.1 L969.3 601.1 L971.5 599.8 L973.7 600.9 L975.8 601.0 L978.0 600.9 L980.1 600.8 L982.3 601.0 L984.4 601.1 L986.6 601.1 L988.8 601.1 L990.9 601.0 L993.1 599.8 L995.2 601.1 L997.4 601.0 L999.5 601.1 L1001.7 601.1 L1003.8 601.0 L1006.0 601.0 L1008.2 601.0 L1010.3 601.1 L1012.5 601.0 L1014.6 599.8 L1016.8 601.1 L1018.9 601.0 L1021.1 601.1 L1023.3 601.1 L1025.4 601.1 L1027.6 601.0 L1029.7 601.1 L1031.9 601.0 L1034.0 601.0 L1036.2 599.8 L1038.4 601.0 L1040.5 601.1 L1042.7 601.0 L1044.8 600.9 L1047.0 601.0 L1049.1 601.0 L1051.3 600.9 L1053.5 600.9 L1055.6 601.1 L1057.8 599.8 L1059.9 601.0 L1062.1 601.0 L1064.2 601.0 L1066.4 600.9 L1068.6 600.9 L1070.7 600.8 L1072.9 600.9 L1075.0 601.0 L1077.2 601.0 L1079.3 599.8 L1081.5 600.9 L1083.7 601.1 L1085.8 600.8 L1088.0 600.8 L1090.1 601.0 L1092.3 601.0 L1094.4 600.8 L1096.6 600.9 L1098.7 601.0 L1100.9 599.8 L1103.1 600.9 L1105.2 601.0 L1107.4 600.8 L1109.5 600.9 L1111.7 601.0 L1113.8 601.0 L1116.0 601.1 L1118.2 601.0 L1120.3 601.0 L1122.5 599.8 L1124.6 601.0 L1126.8 600.9 L1127.0 601.0" fill="none" stroke="#7ad0e6" stroke-width="1.1" stroke-linejoin="round"/>
<path d="M52.7 600.7 L54.9 600.6 L57.0 600.5 L59.2 600.6 L61.3 600.1 L63.5 599.4 L65.6 586.4 L67.8 596.3 L70.0 600.5 L72.1 600.2 L74.3 600.7 L76.4 600.6 L78.6 600.0 L80.7 600.3 L82.9 599.8 L85.1 600.5 L87.2 587.0 L89.4 596.5 L91.5 600.6 L93.7 599.9 L95.8 600.4 L98.0 600.0 L100.1 600.4 L102.3 600.5 L104.5 599.9 L106.6 599.9 L108.8 589.6 L110.9 600.4 L113.1 599.6 L115.2 599.9 L117.4 600.5 L119.6 600.6 L121.7 600.2 L123.9 600.1 L126.0 600.6 L128.2 600.1 L130.3 589.4 L132.5 597.3 L134.7 600.5 L136.8 600.5 L139.0 600.6 L141.1 600.4 L143.3 600.3 L145.4 600.3 L147.6 600.4 L149.8 600.6 L151.9 588.6 L154.1 600.6 L156.2 600.1 L158.4 600.0 L160.5 600.6 L162.7 599.8 L164.9 600.4 L167.0 600.3 L169.2 600.6 L171.3 600.7 L173.5 585.6 L175.6 596.0 L177.8 600.7 L180.0 600.7 L182.1 600.7 L184.3 600.3 L186.4 600.6 L188.6 600.1 L190.7 600.7 L192.9 600.6 L195.0 589.2 L197.2 597.3 L199.4 600.4 L201.5 600.5 L203.7 600.0 L205.8 600.4 L208.0 600.6 L210.1 600.1 L212.3 600.2 L214.5 600.1 L216.6 590.6 L218.8 600.6 L220.9 599.8 L223.1 599.8 L225.2 600.7 L227.4 600.4 L229.6 600.3 L231.7 600.7 L233.9 600.7 L236.0 600.5 L238.2 585.7 L240.3 600.4 L242.5 600.6 L244.7 600.6 L246.8 600.5 L249.0 600.0 L251.1 600.6 L253.3 600.4 L255.4 600.5 L257.6 600.2 L259.8 587.7 L261.9 595.6 L264.1 567.9 L266.2 599.6 L268.4 600.7 L270.5 600.5 L272.7 600.4 L274.9 600.3 L277.0 600.1 L279.2 599.9 L281.3 587.8 L283.5 596.8 L285.6 600.3 L287.8 599.9 L289.9 600.0 L292.1 600.4 L294.3 600.4 L296.4 599.5 L298.6 599.9 L300.7 599.8 L302.9 589.0 L305.0 600.2 L307.2 600.2 L309.4 600.6 L311.5 600.6 L313.7 600.6 L315.8 600.4 L318.0 600.0 L320.1 600.0 L322.3 599.2 L324.5 564.3 L326.6 565.9 L328.8 564.3 L330.9 575.4 L333.1 575.8 L335.2 575.4 L337.4 599.6 L339.6 600.4 L341.7 599.9 L343.9 600.5 L346.0 586.2 L348.2 596.2 L350.3 600.6 L352.5 600.6 L354.7 600.6 L356.8 600.2 L359.0 600.7 L361.1 600.5 L363.3 600.6 L365.4 600.7 L367.6 588.3 L369.7 596.9 L371.9 600.6 L374.1 600.6 L376.2 600.6 L378.4 600.3 L380.5 600.6 L382.7 600.7 L384.8 600.2 L387.0 600.6 L389.2 590.9 L391.3 597.9 L393.5 600.5 L395.6 600.6 L397.8 600.6 L399.9 600.3 L402.1 600.7 L404.3 600.1 L406.4 600.2 L408.6 600.6 L410.7 590.7 L412.9 597.8 L415.0 600.2 L417.2 600.4 L419.4 600.1 L421.5 600.4 L423.7 600.1 L425.8 600.4 L428.0 600.6 L430.1 600.5 L432.3 586.7 L434.5 600.5 L436.6 600.5 L438.8 600.4 L440.9 600.6 L443.1 600.3 L445.2 600.0 L447.4 600.0 L449.6 600.5 L451.7 600.4 L453.9 586.6 L456.0 596.4 L458.2 600.5 L460.3 600.3 L462.5 600.2 L464.6 600.3 L466.8 600.7 L469.0 600.1 L471.1 600.7 L473.3 599.5 L475.4 588.6 L477.6 597.0 L479.7 599.9 L481.9 600.2 L484.1 600.4 L486.2 600.4 L488.4 599.8 L490.5 600.1 L492.7 600.7 L494.8 599.9 L497.0 587.3 L499.2 596.6 L501.3 600.7 L503.5 599.9 L505.6 600.2 L507.8 600.2 L509.9 599.6 L512.1 600.4 L514.3 600.4 L516.4 600.3 L518.6 586.1 L520.7 600.6 L522.9 600.6 L525.0 600.1 L527.2 600.3 L529.4 600.4 L531.5 600.7 L533.7 600.6 L535.8 600.3 L538.0 600.5 L540.1 586.4 L542.3 600.7 L544.5 600.2 L546.6 600.6 L548.8 599.8 L550.9 600.4 L553.1 600.6 L555.2 600.7 L557.4 600.5 L559.5 600.1 L561.7 587.4 L563.9 600.1 L566.0 600.3 L568.2 600.3 L570.3 600.1 L572.5 600.1 L574.6 600.2 L576.8 600.7 L579.0 600.1 L581.1 599.9 L583.3 586.1 L585.4 596.2 L587.6 600.3 L589.7 600.1 L591.9 600.1 L594.1 600.7 L596.2 599.8 L598.4 600.4 L600.5 599.9 L602.7 600.6 L604.8 589.0 L607.0 597.2 L609.2 600.4 L611.3 600.3 L613.5 600.2 L615.6 600.1 L617.8 600.2 L619.9 600.6 L622.1 600.5 L624.3 600.5 L626.4 591.3 L628.6 598.0 L630.7 600.6 L632.9 600.5 L635.0 600.2 L637.2 600.4 L639.3 600.2 L641.5 600.4 L643.7 600.5 L645.8 599.5 L648.0 585.4 L650.1 595.9 L652.3 600.2 L654.4 600.6 L656.6 600.1 L658.8 600.4 L660.9 600.2 L663.1 599.5 L665.2 600.3 L667.4 600.5 L669.5 586.0 L671.7 596.1 L673.9 600.6 L676.0 600.2 L678.2 600.6 L680.3 600.3 L682.5 600.6 L684.6 600.4 L686.8 600.4 L689.0 600.7 L691.1 591.2 L693.3 598.0 L695.4 600.5 L697.6 600.7 L699.7 600.2 L701.9 600.3 L704.1 600.3 L706.2 600.6 L708.4 600.5 L710.5 599.7 L712.7 590.0 L714.8 597.5 L717.0 600.2 L719.2 600.0 L721.3 600.7 L723.5 600.2 L725.6 600.3 L727.8 600.2 L729.9 600.3 L732.1 600.6 L734.2 589.8 L736.4 600.4 L738.6 600.5 L740.7 600.0 L742.9 600.6 L745.0 600.3 L747.2 600.6 L749.3 600.1 L751.5 600.4 L753.7 600.5 L755.8 591.4 L758.0 600.5 L760.1 600.7 L762.3 600.2 L764.4 600.6 L766.6 600.1 L768.8 600.2 L770.9 600.6 L773.1 599.9 L775.2 599.4 L777.4 600.6 L779.5 599.7 L781.7 600.0 L783.9 600.4 L786.0 600.5 L788.2 600.6 L790.3 600.0 L792.5 600.4 L794.6 600.4 L796.8 600.2 L799.0 590.3 L801.1 600.5 L803.3 600.5 L805.4 599.9 L807.6 600.2 L809.7 600.3 L811.9 600.6 L814.1 600.4 L816.2 599.7 L818.4 599.4 L820.5 586.0 L822.7 596.1 L824.8 600.5 L827.0 600.7 L829.1 600.4 L831.3 600.3 L833.5 600.6 L835.6 600.1 L837.8 600.2 L839.9 600.7 L842.1 586.3 L844.2 600.4 L846.4 600.1 L848.6 600.6 L850.7 600.6 L852.9 600.4 L855.0 600.3 L857.2 600.5 L859.3 600.0 L861.5 600.0 L863.7 591.8 L865.8 598.2 L868.0 600.2 L870.1 600.5 L872.3 600.7 L874.4 600.7 L876.6 600.4 L878.8 600.5 L880.9 600.5 L883.1 600.6 L885.2 588.3 L887.4 600.2 L889.5 600.6 L891.7 600.4 L893.9 600.7 L896.0 600.5 L898.2 600.4 L900.3 600.3 L902.5 600.4 L904.6 599.7 L906.8 587.5 L908.9 600.0 L911.1 600.2 L913.3 600.4 L915.4 600.4 L917.6 600.1 L919.7 600.5 L921.9 600.7 L924.0 600.6 L926.2 600.6 L928.4 585.7 L930.5 600.6 L932.7 600.5 L934.8 600.4 L937.0 600.5 L939.1 600.6 L941.3 600.7 L943.5 600.4 L945.6 599.9 L947.8 600.5 L949.9 587.0 L952.1 596.5 L954.2 599.9 L956.4 600.2 L958.6 600.2 L960.7 600.0 L962.9 600.4 L965.0 600.1 L967.2 600.1 L969.3 599.7 L971.5 588.7 L973.7 599.7 L975.8 600.5 L978.0 600.0 L980.1 600.2 L982.3 600.6 L984.4 600.5 L986.6 600.6 L988.8 600.2 L990.9 599.2 L993.1 591.9 L995.2 598.2 L997.4 600.2 L999.5 600.6 L1001.7 600.2 L1003.8 600.4 L1006.0 600.2 L1008.2 600.5 L1010.3 599.7 L1012.5 600.2 L1014.6 591.3 L1016.8 599.3 L1018.9 600.3 L1021.1 600.2 L1023.3 600.7 L1025.4 600.1 L1027.6 600.6 L1029.7 600.5 L1031.9 600.6 L1034.0 599.9 L1036.2 591.7 L1038.4 598.2 L1040.5 600.2 L1042.7 600.3 L1044.8 599.7 L1047.0 600.3 L1049.1 600.7 L1051.3 599.9 L1053.5 600.4 L1055.6 600.6 L1057.8 588.7 L1059.9 600.2 L1062.1 600.2 L1064.2 600.7 L1066.4 600.4 L1068.6 600.4 L1070.7 600.6 L1072.9 600.6 L1075.0 599.9 L1077.2 600.3 L1079.3 589.7 L1081.5 600.5 L1083.7 600.2 L1085.8 600.5 L1088.0 599.9 L1090.1 600.5 L1092.3 599.9 L1094.4 600.1 L1096.6 600.1 L1098.7 600.3 L1100.9 590.1 L1103.1 600.5 L1105.2 600.2 L1107.4 600.5 L1109.5 600.1 L1111.7 600.3 L1113.8 600.6 L1116.0 600.2 L1118.2 600.5 L1120.3 600.6 L1122.5 591.7 L1124.6 600.3 L1126.8 600.2 L1127.0 600.0" fill="none" stroke="#5590b9" stroke-width="1.1" stroke-linejoin="round"/>
<rect x="525.3" y="542.6" width="1" height="60.5" fill="url(#vl)"/>
<rect x="514.6" y="532.4" width="21.4" height="11.2" rx="3" fill="url(#tg)"/>
<path d="M313.8 547.1 H333.2 a2.5 2.5 0 0 1 2.5 2.5 V556.6 a2.5 2.5 0 0 1 -2.5 2.5 H325.4 L323.2 562.3000000000001 L321.0 559.1 H313.8 a2.5 2.5 0 0 1 -2.5 -2.5 V549.6 a2.5 2.5 0 0 1 2.5 -2.5 Z" fill="#1b5f97"/>
</svg>
<div style="position:absolute;left:1140px;top:536px;width:28.6px;height:16px;background:linear-gradient(#fdfdfd,#efefef);border:1px solid #b9b9b9;border-radius:2px;box-sizing:border-box;"></div>
<div style="position:absolute;left:1140px;top:562.4px;width:5.6px;height:8px;background:#1c5f9a;"></div>
<div style="position:absolute;left:1140px;top:577px;width:5.6px;height:8px;background:#3db9dc;"></div>
<svg width="1251" height="770" viewBox="0 0 1251 770"><path d="M611.3 611 H631 L629 614.6 H613.3 Z" fill="#f8f8f8" stroke="#cfcfcf" stroke-width="0.7"/><path d="M619.6 611.6 H622.8 L621.2 613.8 Z" fill="#222"/></svg>
<svg width="1251" height="770" viewBox="0 0 1251 770">
<path d="M78.0 637 L83.7 619.0 Q84.5 616.5 87.0 616.5 L139.5 616.5 Q142.0 616.5 143.0 619.0 L150.0 637 Z" fill="#c9c9c9"/>
<path d="M78.0 637 L83.7 619.0" stroke="#dcdcdc" stroke-width="0.8" fill="none"/>
<path d="M146.0 637 L151.7 619.0 Q152.5 616.5 155.0 616.5 L236.0 616.5 Q238.5 616.5 239.5 619.0 L245.0 637 Z" fill="#c9c9c9"/>
<path d="M146.0 637 L151.7 619.0" stroke="#dcdcdc" stroke-width="0.8" fill="none"/>
<path d="M10.5 637 L10.5 616.5 L72.5 616.5 Q75.0 616.5 76.0 619.0 L83.0 637 Z" fill="#fff"/>
</svg>
<div style="position:absolute;left:10.5px;top:637px;width:1223.5px;height:30.7px;background:linear-gradient(#f9f9f9,#e8eaeb);border-bottom:1px solid #dddddd;box-sizing:border-box;"></div>
<svg width="1251" height="770" viewBox="0 0 1251 770"><path d="M66.3 638 V667 M378.6 638 V667 M475.8 638 V667 M550.5 638 V667 M590.4 638 V667 M648 638 V667 M688 638 V667 M745.6 638 V667 M785.8 638 V667 M826 638 V667 M865.8 638 V667 M906.7 638 V667 M946.5 638 V667 M986.3 638 V667 M1026.7 638 V667 M1066.3 638 V667 M1124.4 638 V667 M1181.4 638 V667" stroke="#dcdcdc" stroke-width="1" fill="none"/><path d="M67.3 638 V667 M379.6 638 V667 M476.8 638 V667 M551.5 638 V667 M591.4 638 V667 M649 638 V667 M689 638 V667 M746.6 638 V667 M786.8 638 V667 M827 638 V667 M866.8 638 V667 M907.7 638 V667 M947.5 638 V667 M987.3 638 V667 M1027.7 638 V667 M1067.3 638 V667 M1125.4 638 V667 M1182.4 638 V667" stroke="#fbfbfb" stroke-width="1" fill="none"/></svg>
<div style="position:absolute;left:10.5px;top:685px;width:1223.5px;height:17.6px;background:#f8f8f8;border-top:1px solid #ececec;border-bottom:1px solid #ececec;box-sizing:border-box;"></div>
<div style="position:absolute;left:10.5px;top:719.4px;width:1223.5px;height:1px;background:#ededed;"></div>
<span class="t" style="top:23.7px;font-size:10px;color:#555;left:26px;transform-origin:0 0;transform:scaleX(0.671);">2022-10-07 01:40</span>
<span class="t" style="top:22.7px;font-size:10px;color:#555;left:88.5px;transform-origin:0 0;transform:scaleX(0.800);">~</span>
<span class="t" style="top:23.7px;font-size:10px;color:#555;left:97.4px;transform-origin:0 0;transform:scaleX(0.679);">2022-10-07 10:00</span>
<span class="t" style="top:23.2px;font-size:10.5px;color:#555;left:221px;transform-origin:0 0;transform:scaleX(0.643);">에이전트</span>
<span class="t" style="top:23.7px;font-size:10px;color:#555;left:251.4px;transform-origin:0 0;transform:scaleX(0.674);">J40101_8099_https58080</span>
<span class="t" style="top:23.7px;font-size:10px;color:#555;left:347px;transform-origin:0 0;transform:scaleX(0.647);">DB</span>
<span class="t" style="top:23.7px;font-size:10px;color:#555;left:360.5px;transform-origin:0 0;transform:scaleX(0.640);">DEMO</span>
<span class="t" style="top:25.2px;font-size:13px;color:#555;left:565px;transform-origin:0 0;transform:scaleX(0.693);">2022-10-07 05:20:00</span>
<span class="t" style="top:33.7px;font-size:8.5px;color:#111;left:1202.5px;transform-origin:0 0;transform:translateX(-50%) scaleX(0.751);transform:scaleX(0.751) translateX(-50%);text-decoration:underline;">조회</span>
<span class="t" style="top:75.2px;font-size:9.5px;color:#555;left:20px;transform-origin:0 0;transform:scaleX(0.721);">Active Transaction</span>
<span class="t" style="top:93.4px;font-size:8.5px;color:#222;right:1201.4px;transform-origin:100% 0;transform:scaleX(0.718);">4</span>
<span class="t" style="top:112.7px;font-size:8.5px;color:#222;right:1201.4px;transform-origin:100% 0;transform:scaleX(0.718);">3</span>
<span class="t" style="top:132.0px;font-size:8.5px;color:#222;right:1201.4px;transform-origin:100% 0;transform:scaleX(0.718);">2</span>
<span class="t" style="top:152.8px;font-size:8.5px;color:#222;right:1201.4px;transform-origin:100% 0;transform:scaleX(0.718);">1</span>
<span class="t" style="top:172.3px;font-size:8.5px;color:#222;right:1201.4px;transform-origin:100% 0;transform:scaleX(0.718);">0</span>
<span class="t" style="top:180.0px;font-size:11px;color:#333;left:42px;transform-origin:0 0;transform:scaleX(0.596);">07</span>
<span class="t" style="top:180.2px;font-size:9.5px;color:#222;left:57.6px;transform-origin:0 0;transform:translateX(-50%) scaleX(0.572);transform:scaleX(0.572) translateX(-50%);">01:40</span>
<span class="t" style="top:180.2px;font-size:9.5px;color:#222;left:123.65px;transform-origin:0 0;transform:translateX(-50%) scaleX(0.589);transform:scaleX(0.589) translateX(-50%);">02:11</span>
<span class="t" style="top:180.2px;font-size:9.5px;color:#222;left:189.7px;transform-origin:0 0;transform:translateX(-50%) scaleX(0.572);transform:scaleX(0.572) translateX(-50%);">02:42</span>
<span class="t" style="top:180.2px;font-size:9.5px;color:#222;left:255.75px;transform-origin:0 0;transform:translateX(-50%) scaleX(0.572);transform:scaleX(0.572) translateX(-50%);">03:13</span>
<span class="t" style="top:180.2px;font-size:9.5px;color:#222;left:321.8px;transform-origin:0 0;transform:translateX(-50%) scaleX(0.572);transform:scaleX(0.572) translateX(-50%);">03:44</span>
<span class="t" style="top:180.2px;font-size:9.5px;color:#222;left:387.85px;transform-origin:0 0;transform:translateX(-50%) scaleX(0.572);transform:scaleX(0.572) translateX(-50%);">04:15</span>
<span class="t" style="top:180.2px;font-size:9.5px;color:#222;left:453.9px;transform-origin:0 0;transform:translateX(-50%) scaleX(0.572);transform:scaleX(0.572) translateX(-50%);">04:46</span>
<span class="t" style="top:180.2px;font-size:9.5px;color:#222;left:519.95px;transform-origin:0 0;transform:translateX(-50%) scaleX(0.572);transform:scaleX(0.572) translateX(-50%);">05:17</span>
<span class="t" style="top:180.2px;font-size:9.5px;color:#222;left:586px;transform-origin:0 0;transform:translateX(-50%) scaleX(0.572);transform:scaleX(0.572) translateX(-50%);">05:48</span>
<span class="t" style="top:180.2px;font-size:9.5px;color:#222;left:652.05px;transform-origin:0 0;transform:translateX(-50%) scaleX(0.572);transform:scaleX(0.572) translateX(-50%);">06:19</span>
<span class="t" style="top:180.2px;font-size:9.5px;color:#222;left:718.1px;transform-origin:0 0;transform:translateX(-50%) scaleX(0.572);transform:scaleX(0.572) translateX(-50%);">06:50</span>
<span class="t" style="top:180.2px;font-size:9.5px;color:#222;left:784.15px;transform-origin:0 0;transform:translateX(-50%) scaleX(0.572);transform:scaleX(0.572) translateX(-50%);">07:21</span>
<span class="t" style="top:180.2px;font-size:9.5px;color:#222;left:850.2px;transform-origin:0 0;transform:translateX(-50%) scaleX(0.572);transform:scaleX(0.572) translateX(-50%);">07:52</span>
<span class="t" style="top:180.2px;font-size:9.5px;color:#222;left:916.25px;transform-origin:0 0;transform:translateX(-50%) scaleX(0.572);transform:scaleX(0.572) translateX(-50%);">08:23</span>
<span class="t" style="top:180.2px;font-size:9.5px;color:#222;left:982.3px;transform-origin:0 0;transform:translateX(-50%) scaleX(0.572);transform:scaleX(0.572) translateX(-50%);">08:54</span>
<span class="t" style="top:180.2px;font-size:9.5px;color:#222;left:1048.35px;transform-origin:0 0;transform:translateX(-50%) scaleX(0.572);transform:scaleX(0.572) translateX(-50%);">09:25</span>
<span class="t" style="top:180.2px;font-size:9.5px;color:#222;left:1115.3px;transform-origin:0 0;transform:translateX(-50%) scaleX(0.572);transform:scaleX(0.572) translateX(-50%);">09:56</span>
<span class="t" style="top:88.2px;font-size:10px;color:#fff;font-weight:bold;left:521.7px;transform-origin:0 0;transform:translateX(-50%) scaleX(0.691);transform:scaleX(0.691) translateX(-50%);">2.800</span>
<span class="t" style="top:104.4px;font-size:10px;color:#fff;font-weight:bold;left:521.7px;transform-origin:0 0;transform:translateX(-50%) scaleX(0.691);transform:scaleX(0.691) translateX(-50%);">2.800</span>
<span class="t" style="top:93.7px;font-size:10px;color:#222;left:1154.3px;transform-origin:0 0;transform:translateX(-50%) scaleX(0.670);transform:scaleX(0.670) translateX(-50%);">상세</span>
<span class="t" style="top:116.5px;font-size:10.5px;color:#444;left:1148px;transform-origin:0 0;transform:scaleX(0.678);">정상</span>
<span class="t" style="top:131.4px;font-size:10.5px;color:#444;left:1148px;transform-origin:0 0;transform:scaleX(0.678);">경고</span>
<span class="t" style="top:146.0px;font-size:10.5px;color:#444;left:1148px;transform-origin:0 0;transform:scaleX(0.678);">심각</span>
<span class="t" style="top:197.4px;font-size:10.5px;color:#b9b9b9;font-weight:bold;left:1142px;transform-origin:0 0;transform:scaleX(0.655);">View All</span>
<span class="t" style="top:219.6px;font-size:10px;color:#3b8ded;left:22.8px;transform-origin:0 0;transform:scaleX(0.735);">에이전트 지표</span>
<span class="t" style="top:219.6px;font-size:10px;color:#666;left:107px;transform-origin:0 0;transform:scaleX(0.707);">에이전트 OS 지표</span>
<span class="t" style="top:219.6px;font-size:10px;color:#666;left:201px;transform-origin:0 0;transform:scaleX(0.682);">JVM GC 지표</span>
<span class="t" style="top:219.6px;font-size:10px;color:#666;left:282.5px;transform-origin:0 0;transform:scaleX(0.730);">커넥션 풀</span>
<span class="t" style="top:217.6px;font-size:10px;color:#111;left:1178px;transform-origin:0 0;transform:scaleX(0.682);">사용자 지표 설정</span>
<span class="t" style="top:241.7px;font-size:10px;color:#555;left:20px;transform-origin:0 0;transform:scaleX(0.682);">수행 시간 (초)</span>
<span class="t" style="top:258.8px;font-size:8.5px;color:#3a3a3a;right:1201.2px;transform-origin:100% 0;transform:scaleX(0.680);">30</span>
<span class="t" style="top:278.8px;font-size:8.5px;color:#3a3a3a;right:1201.2px;transform-origin:100% 0;transform:scaleX(0.680);">20</span>
<span class="t" style="top:298.8px;font-size:8.5px;color:#3a3a3a;right:1201.2px;transform-origin:100% 0;transform:scaleX(0.680);">10</span>
<span class="t" style="top:318.8px;font-size:8.5px;color:#3a3a3a;right:1201.2px;transform-origin:100% 0;transform:scaleX(0.680);">0</span>
<span class="t" style="top:254.4px;font-size:10px;color:#fff;font-weight:bold;left:525.2px;transform-origin:0 0;transform:translateX(-50%) scaleX(0.699);transform:scaleX(0.699) translateX(-50%);">19.648</span>
<span class="t" style="top:266.6px;font-size:10px;color:#fff;font-weight:bold;left:748.5px;transform-origin:0 0;transform:translateX(-50%) scaleX(0.673);transform:scaleX(0.673) translateX(-50%);">20.056</span>
<span class="t" style="top:260.7px;font-size:10px;color:#222;left:1154.3px;transform-origin:0 0;transform:translateX(-50%) scaleX(0.670);transform:scaleX(0.670) translateX(-50%);">상세</span>
<span class="t" style="top:282.8px;font-size:10.5px;color:#444;left:1148px;transform-origin:0 0;transform:scaleX(0.678);">최대</span>
<span class="t" style="top:297.4px;font-size:10.5px;color:#444;left:1148px;transform-origin:0 0;transform:scaleX(0.678);">평균</span>
<span class="t" style="top:334.7px;font-size:10px;color:#555;left:20px;transform-origin:0 0;transform:scaleX(0.683);">힙 메모리 크기 (MB)</span>
<span class="t" style="top:351.8px;font-size:8.5px;color:#3a3a3a;right:1201.2px;transform-origin:100% 0;transform:scaleX(0.680);">1.5k</span>
<span class="t" style="top:371.8px;font-size:8.5px;color:#3a3a3a;right:1201.2px;transform-origin:100% 0;transform:scaleX(0.680);">1k</span>
<span class="t" style="top:391.8px;font-size:8.5px;color:#3a3a3a;right:1201.2px;transform-origin:100% 0;transform:scaleX(0.680);">500</span>
<span class="t" style="top:411.8px;font-size:8.5px;color:#3a3a3a;right:1201.2px;transform-origin:100% 0;transform:scaleX(0.680);">0</span>
<span class="t" style="top:347.5px;font-size:10px;color:#fff;font-weight:bold;left:525.3px;transform-origin:0 0;transform:translateX(-50%) scaleX(0.652);transform:scaleX(0.652) translateX(-50%);">1,019.500</span>
<span class="t" style="top:358.7px;font-size:10px;color:#fff;font-weight:bold;left:53.1px;transform-origin:0 0;transform:translateX(-50%) scaleX(0.656);transform:scaleX(0.656) translateX(-50%);">1,019.500</span>
<span class="t" style="top:353.7px;font-size:10px;color:#222;left:1154.3px;transform-origin:0 0;transform:translateX(-50%) scaleX(0.670);transform:scaleX(0.670) translateX(-50%);">상세</span>
<span class="t" style="top:375.8px;font-size:10.5px;color:#444;left:1148px;transform-origin:0 0;transform:scaleX(0.678);">최대</span>
<span class="t" style="top:390.4px;font-size:10.5px;color:#444;left:1148px;transform-origin:0 0;transform:scaleX(0.678);">평균</span>
<span class="t" style="top:427.7px;font-size:10px;color:#555;left:20px;transform-origin:0 0;transform:scaleX(0.683);">초당 처리량</span>
<span class="t" style="top:445.4px;font-size:8.5px;color:#3a3a3a;right:1201.2px;transform-origin:100% 0;transform:scaleX(0.680);">2</span>
<span class="t" style="top:460.2px;font-size:8.5px;color:#3a3a3a;right:1201.2px;transform-origin:100% 0;transform:scaleX(0.680);">1.50</span>
<span class="t" style="top:475.0px;font-size:8.5px;color:#3a3a3a;right:1201.2px;transform-origin:100% 0;transform:scaleX(0.680);">1</span>
<span class="t" style="top:489.8px;font-size:8.5px;color:#3a3a3a;right:1201.2px;transform-origin:100% 0;transform:scaleX(0.680);">0.50</span>
<span class="t" style="top:504.6px;font-size:8.5px;color:#3a3a3a;right:1201.2px;transform-origin:100% 0;transform:scaleX(0.680);">0</span>
<span class="t" style="top:440.9px;font-size:10px;color:#fff;font-weight:bold;left:525.35px;transform-origin:0 0;transform:translateX(-50%) scaleX(0.651);transform:scaleX(0.651) translateX(-50%);">0.667</span>
<span class="t" style="top:453.1px;font-size:10px;color:#fff;font-weight:bold;left:65.3px;transform-origin:0 0;transform:translateX(-50%) scaleX(0.655);transform:scaleX(0.655) translateX(-50%);">1.333</span>
<span class="t" style="top:446.7px;font-size:10px;color:#222;left:1154.3px;transform-origin:0 0;transform:translateX(-50%) scaleX(0.670);transform:scaleX(0.670) translateX(-50%);">상세</span>
<span class="t" style="top:468.8px;font-size:10.5px;color:#444;left:1148px;transform-origin:0 0;transform:scaleX(0.678);">최대</span>
<span class="t" style="top:483.4px;font-size:10.5px;color:#444;left:1148px;transform-origin:0 0;transform:scaleX(0.678);">평균</span>
<span class="t" style="top:520.7px;font-size:10px;color:#555;left:20px;transform-origin:0 0;transform:scaleX(0.639);">OS CPU 사용률 (%)</span>
<span class="t" style="top:537.7px;font-size:8.5px;color:#3a3a3a;right:1201.2px;transform-origin:100% 0;transform:scaleX(0.680);">30</span>
<span class="t" style="top:557.6px;font-size:8.5px;color:#3a3a3a;right:1201.2px;transform-origin:100% 0;transform:scaleX(0.680);">20</span>
<span class="t" style="top:577.4px;font-size:8.5px;color:#3a3a3a;right:1201.2px;transform-origin:100% 0;transform:scaleX(0.680);">10</span>
<span class="t" style="top:597.3px;font-size:8.5px;color:#3a3a3a;right:1201.2px;transform-origin:100% 0;transform:scaleX(0.680);">0</span>
<span class="t" style="top:533.2px;font-size:10px;color:#fff;font-weight:bold;left:525.3px;transform-origin:0 0;transform:translateX(-50%) scaleX(0.655);transform:scaleX(0.655) translateX(-50%);">1.200</span>
<span class="t" style="top:548.3px;font-size:10px;color:#fff;font-weight:bold;left:323.5px;transform-origin:0 0;transform:translateX(-50%) scaleX(0.634);transform:scaleX(0.634) translateX(-50%);">18.800</span>
<span class="t" style="top:539.7px;font-size:10px;color:#222;left:1154.3px;transform-origin:0 0;transform:translateX(-50%) scaleX(0.670);transform:scaleX(0.670) translateX(-50%);">상세</span>
<span class="t" style="top:561.9px;font-size:10.5px;color:#444;left:1148px;transform-origin:0 0;transform:scaleX(0.678);">최대</span>
<span class="t" style="top:576.5px;font-size:10.5px;color:#444;left:1148px;transform-origin:0 0;transform:scaleX(0.678);">평균</span>
<span class="t" style="top:621.9px;font-size:10px;color:#3b8ded;left:22.8px;transform-origin:0 0;transform:scaleX(0.719);">액티브 세션</span>
<span class="t" style="top:621.9px;font-size:10px;color:#666;left:99.5px;transform-origin:0 0;transform:scaleX(0.731);">프로세스</span>
<span class="t" style="top:621.9px;font-size:10px;color:#666;left:168px;transform-origin:0 0;transform:scaleX(0.743);">액티브 세션 요약</span>
<span class="t" style="top:648.0px;font-size:10px;color:#666;left:36.9px;transform-origin:0 0;transform:translateX(-50%) scaleX(0.665);transform:scaleX(0.665) translateX(-50%);">에이전트</span>
<span class="t" style="top:648.0px;font-size:10px;color:#666;left:222.3px;transform-origin:0 0;transform:translateX(-50%) scaleX(0.678);transform:scaleX(0.678) translateX(-50%);">트랜잭션</span>
<span class="t" style="top:648.0px;font-size:10px;color:#666;left:427px;transform-origin:0 0;transform:translateX(-50%) scaleX(0.676);transform:scaleX(0.676) translateX(-50%);">클래스 메소드</span>
<span class="t" style="top:648.0px;font-size:10px;color:#666;left:513.4px;transform-origin:0 0;transform:translateX(-50%) scaleX(0.675);transform:scaleX(0.675) translateX(-50%);">클라이언트 IP</span>
<span class="t" style="top:648.0px;font-size:10px;color:#666;left:570.4px;transform-origin:0 0;transform:translateX(-50%) scaleX(0.678);transform:scaleX(0.678) translateX(-50%);">로그인명</span>
<span class="t" style="top:648.0px;font-size:10px;color:#666;left:619px;transform-origin:0 0;transform:translateX(-50%) scaleX(0.673);transform:scaleX(0.673) translateX(-50%);">메소드 유형</span>
<span class="t" style="top:648.0px;font-size:10px;color:#666;left:667.6px;transform-origin:0 0;transform:translateX(-50%) scaleX(0.668);transform:scaleX(0.668) translateX(-50%);">시작 시간</span>
<span class="t" style="top:641.9px;font-size:10px;color:#666;left:716.7px;transform-origin:0 0;transform:translateX(-50%) scaleX(0.655);transform:scaleX(0.655) translateX(-50%);">트랜잭션 CPU 사</span>
<span class="t" style="top:653.9px;font-size:10px;color:#666;left:716.7px;transform-origin:0 0;transform:translateX(-50%) scaleX(0.655);transform:scaleX(0.655) translateX(-50%);">용 시간 (초)</span>
<span class="t" style="top:641.9px;font-size:10px;color:#666;left:765px;transform-origin:0 0;transform:translateX(-50%) scaleX(0.655);transform:scaleX(0.655) translateX(-50%);">DB CPU 사</span>
<span class="t" style="top:653.9px;font-size:10px;color:#666;left:765px;transform-origin:0 0;transform:translateX(-50%) scaleX(0.655);transform:scaleX(0.655) translateX(-50%);">용 시간</span>
<span class="t" style="top:641.9px;font-size:10px;color:#666;left:805.7px;transform-origin:0 0;transform:translateX(-50%) scaleX(0.655);transform:scaleX(0.655) translateX(-50%);">디스크 읽</span>
<span class="t" style="top:653.9px;font-size:10px;color:#666;left:805.7px;transform-origin:0 0;transform:translateX(-50%) scaleX(0.655);transform:scaleX(0.655) translateX(-50%);">기</span>
<span class="t" style="top:641.9px;font-size:10px;color:#666;left:846px;transform-origin:0 0;transform:translateX(-50%) scaleX(0.655);transform:scaleX(0.655) translateX(-50%);">디스크 쓰</span>
<span class="t" style="top:653.9px;font-size:10px;color:#666;left:846px;transform-origin:0 0;transform:translateX(-50%) scaleX(0.655);transform:scaleX(0.655) translateX(-50%);">기</span>
<span class="t" style="top:641.9px;font-size:10px;color:#666;left:885.5px;transform-origin:0 0;transform:translateX(-50%) scaleX(0.655);transform:scaleX(0.655) translateX(-50%);">DB 응답 시</span>
<span class="t" style="top:653.9px;font-size:10px;color:#666;left:885.5px;transform-origin:0 0;transform:translateX(-50%) scaleX(0.655);transform:scaleX(0.655) translateX(-50%);">간 (초)</span>
<span class="t" style="top:641.9px;font-size:10px;color:#666;left:926px;transform-origin:0 0;transform:translateX(-50%) scaleX(0.655);transform:scaleX(0.655) translateX(-50%);">대기 시</span>
<span class="t" style="top:653.9px;font-size:10px;color:#666;left:926px;transform-origin:0 0;transform:translateX(-50%) scaleX(0.655);transform:scaleX(0.655) translateX(-50%);">간</span>
<span class="t" style="top:648.0px;font-size:10px;color:#666;left:966.6px;transform-origin:0 0;transform:translateX(-50%) scaleX(0.693);transform:scaleX(0.693) translateX(-50%);">커넥션 풀</span>
<span class="t" style="top:641.9px;font-size:10px;color:#666;left:1006px;transform-origin:0 0;transform:translateX(-50%) scaleX(0.655);transform:scaleX(0.655) translateX(-50%);">수행 시간</span>
<span class="t" style="top:653.9px;font-size:10px;color:#666;left:1006px;transform-origin:0 0;transform:translateX(-50%) scaleX(0.655);transform:scaleX(0.655) translateX(-50%);">(초)</span>
<span class="t" style="top:648.0px;font-size:10px;color:#666;left:1046.4px;transform-origin:0 0;transform:translateX(-50%) scaleX(0.691);transform:scaleX(0.691) translateX(-50%);">인스턴스</span>
<span class="t" style="top:648.0px;font-size:10px;color:#666;left:1092.4px;transform-origin:0 0;transform:translateX(-50%) scaleX(0.630);transform:scaleX(0.630) translateX(-50%);">SID</span>
<span class="t" style="top:648.0px;font-size:10px;color:#666;left:1152.5px;transform-origin:0 0;transform:translateX(-50%) scaleX(0.664);transform:scaleX(0.664) translateX(-50%);">상태</span>
<span class="t" style="top:648.0px;font-size:10px;color:#666;left:1225.4px;transform-origin:0 0;transform:scaleX(0.680);clip-path:inset(0 0 0 0);max-width:13px;overflow:hidden;">바인드 변수</span>
<span class="t" style="top:672.7px;font-size:10px;color:#222;left:11px;transform-origin:0 0;transform:scaleX(0.650);">J40101_8099_...</span>
<span class="t" style="top:672.7px;font-size:10px;color:#222;left:69.6px;transform-origin:0 0;transform:scaleX(0.658);">[ETOE연결] /IMX_Test/Sleep_Test.do</span>
<span class="t" style="top:672.7px;font-size:10px;color:#222;left:382.4px;transform-origin:0 0;transform:scaleX(0.697);">test_InterMax/sleep_test.d...</span>
<span class="t" style="top:672.7px;font-size:10px;color:#222;left:480px;transform-origin:0 0;transform:scaleX(0.668);">10.10.102.37</span>
<span class="t" style="top:672.7px;font-size:10px;color:#222;left:594.7px;transform-origin:0 0;transform:scaleX(0.717);">loop,strbuffer</span>
<span class="t" style="top:672.7px;font-size:10px;color:#222;left:651.5px;transform-origin:0 0;transform:scaleX(0.706);">05:19:54</span>
<span class="t" style="top:672.7px;font-size:10px;color:#222;right:508.7px;transform-origin:100% 0;transform:scaleX(0.679);">0.000</span>
<span class="t" style="top:672.7px;font-size:10px;color:#222;right:468.3px;transform-origin:100% 0;transform:scaleX(0.679);">0.000</span>
<span class="t" style="top:672.7px;font-size:10px;color:#222;right:348px;transform-origin:100% 0;transform:scaleX(0.679);">0.000</span>
<span class="t" style="top:672.7px;font-size:10px;color:#222;right:308px;transform-origin:100% 0;transform:scaleX(0.679);">0.000</span>
<span class="t" style="top:672.7px;font-size:10px;color:#222;right:428.6px;transform-origin:100% 0;transform:scaleX(0.683);">0</span>
<span class="t" style="top:672.7px;font-size:10px;color:#222;right:388.5px;transform-origin:100% 0;transform:scaleX(0.683);">0</span>
<span class="t" style="top:672.7px;font-size:10px;color:#222;left:950px;transform-origin:0 0;transform:scaleX(0.611);">IMXTEST</span>
<span class="t" style="top:672.7px;font-size:10px;color:#222;right:227.6px;transform-origin:100% 0;transform:scaleX(0.679);">5.085</span>
<span class="t" style="top:672.7px;font-size:10px;color:#222;left:1030.3px;transform-origin:0 0;transform:scaleX(0.637);">DEMO</span>
<span class="t" style="top:672.7px;font-size:10px;color:#222;right:130px;transform-origin:100% 0;transform:scaleX(0.683);">764</span>
<span class="t" style="top:672.7px;font-size:10px;color:#222;left:1127px;transform-origin:0 0;transform:scaleX(0.612);">SLEEPING</span>
<span class="t" style="top:689.7px;font-size:10px;color:#222;left:11px;transform-origin:0 0;transform:scaleX(0.650);">J40101_8099_...</span>
<span class="t" style="top:689.7px;font-size:10px;color:#222;left:69.6px;transform-origin:0 0;transform:scaleX(0.658);">[ETOE연결] /IMX_Test/Sleep_Test.do</span>
<span class="t" style="top:689.7px;font-size:10px;color:#222;left:382.4px;transform-origin:0 0;transform:scaleX(0.697);">test_InterMax/sleep_test.d...</span>
<span class="t" style="top:689.7px;font-size:10px;color:#222;left:480px;transform-origin:0 0;transform:scaleX(0.668);">10.10.102.37</span>
<span class="t" style="top:689.7px;font-size:10px;color:#222;left:594.7px;transform-origin:0 0;transform:scaleX(0.717);">loop,strbuffer</span>
<span class="t" style="top:689.7px;font-size:10px;color:#222;left:651.5px;transform-origin:0 0;transform:scaleX(0.706);">05:19:56</span>
<span class="t" style="top:689.7px;font-size:10px;color:#222;right:508.7px;transform-origin:100% 0;transform:scaleX(0.679);">0.000</span>
<span class="t" style="top:689.7px;font-size:10px;color:#222;right:468.3px;transform-origin:100% 0;transform:scaleX(0.679);">0.000</span>
<span class="t" style="top:689.7px;font-size:10px;color:#222;right:348px;transform-origin:100% 0;transform:scaleX(0.679);">0.000</span>
<span class="t" style="top:689.7px;font-size:10px;color:#222;right:308px;transform-origin:100% 0;transform:scaleX(0.679);">0.000</span>
<span class="t" style="top:689.7px;font-size:10px;color:#222;right:428.6px;transform-origin:100% 0;transform:scaleX(0.683);">0</span>
<span class="t" style="top:689.7px;font-size:10px;color:#222;right:388.5px;transform-origin:100% 0;transform:scaleX(0.683);">0</span>
<span class="t" style="top:689.7px;font-size:10px;color:#222;left:950px;transform-origin:0 0;transform:scaleX(0.611);">IMXTEST</span>
<span class="t" style="top:689.7px;font-size:10px;color:#222;right:227.6px;transform-origin:100% 0;transform:scaleX(0.679);">3.422</span>
<span class="t" style="top:689.7px;font-size:10px;color:#222;left:1030.3px;transform-origin:0 0;transform:scaleX(0.637);">DEMO</span>
<span class="t" style="top:689.7px;font-size:10px;color:#222;right:130px;transform-origin:100% 0;transform:scaleX(0.683);">518</span>
<span class="t" style="top:689.7px;font-size:10px;color:#222;left:1127px;transform-origin:0 0;transform:scaleX(0.612);">SLEEPING</span>
<span class="t" style="top:706.5px;font-size:10px;color:#222;left:11px;transform-origin:0 0;transform:scaleX(0.650);">J40101_8099_...</span>
<span class="t" style="top:706.5px;font-size:10px;color:#222;left:69.6px;transform-origin:0 0;transform:scaleX(0.658);">[ETOE연결] /IMX_Test/Sleep_Test.do</span>
<span class="t" style="top:706.5px;font-size:10px;color:#222;left:382.4px;transform-origin:0 0;transform:scaleX(0.697);">test_InterMax/sleep_test.d...</span>
<span class="t" style="top:706.5px;font-size:10px;color:#222;left:480px;transform-origin:0 0;transform:scaleX(0.668);">10.10.102.37</span>
<span class="t" style="top:706.5px;font-size:10px;color:#222;left:594.7px;transform-origin:0 0;transform:scaleX(0.717);">loop,strbuffer</span>
<span class="t" style="top:706.5px;font-size:10px;color:#222;left:651.5px;transform-origin:0 0;transform:scaleX(0.706);">05:19:57</span>
<span class="t" style="top:706.5px;font-size:10px;color:#222;right:508.7px;transform-origin:100% 0;transform:scaleX(0.679);">0.000</span>
<span class="t" style="top:706.5px;font-size:10px;color:#222;right:468.3px;transform-origin:100% 0;transform:scaleX(0.679);">0.000</span>
<span class="t" style="top:706.5px;font-size:10px;color:#222;right:348px;transform-origin:100% 0;transform:scaleX(0.679);">0.000</span>
<span class="t" style="top:706.5px;font-size:10px;color:#222;right:308px;transform-origin:100% 0;transform:scaleX(0.679);">0.000</span>
<span class="t" style="top:706.5px;font-size:10px;color:#222;right:428.6px;transform-origin:100% 0;transform:scaleX(0.683);">0</span>
<span class="t" style="top:706.5px;font-size:10px;color:#222;right:388.5px;transform-origin:100% 0;transform:scaleX(0.683);">0</span>
<span class="t" style="top:706.5px;font-size:10px;color:#222;left:950px;transform-origin:0 0;transform:scaleX(0.611);">IMXTEST</span>
<span class="t" style="top:706.5px;font-size:10px;color:#222;right:227.6px;transform-origin:100% 0;transform:scaleX(0.679);">2.700</span>
<span class="t" style="top:706.5px;font-size:10px;color:#222;left:1030.3px;transform-origin:0 0;transform:scaleX(0.637);">DEMO</span>
<span class="t" style="top:706.5px;font-size:10px;color:#222;right:130px;transform-origin:100% 0;transform:scaleX(0.683);">775</span>
<span class="t" style="top:706.5px;font-size:10px;color:#222;left:1127px;transform-origin:0 0;transform:scaleX(0.612);">SLEEPING</span>
</div>
</body></html>
